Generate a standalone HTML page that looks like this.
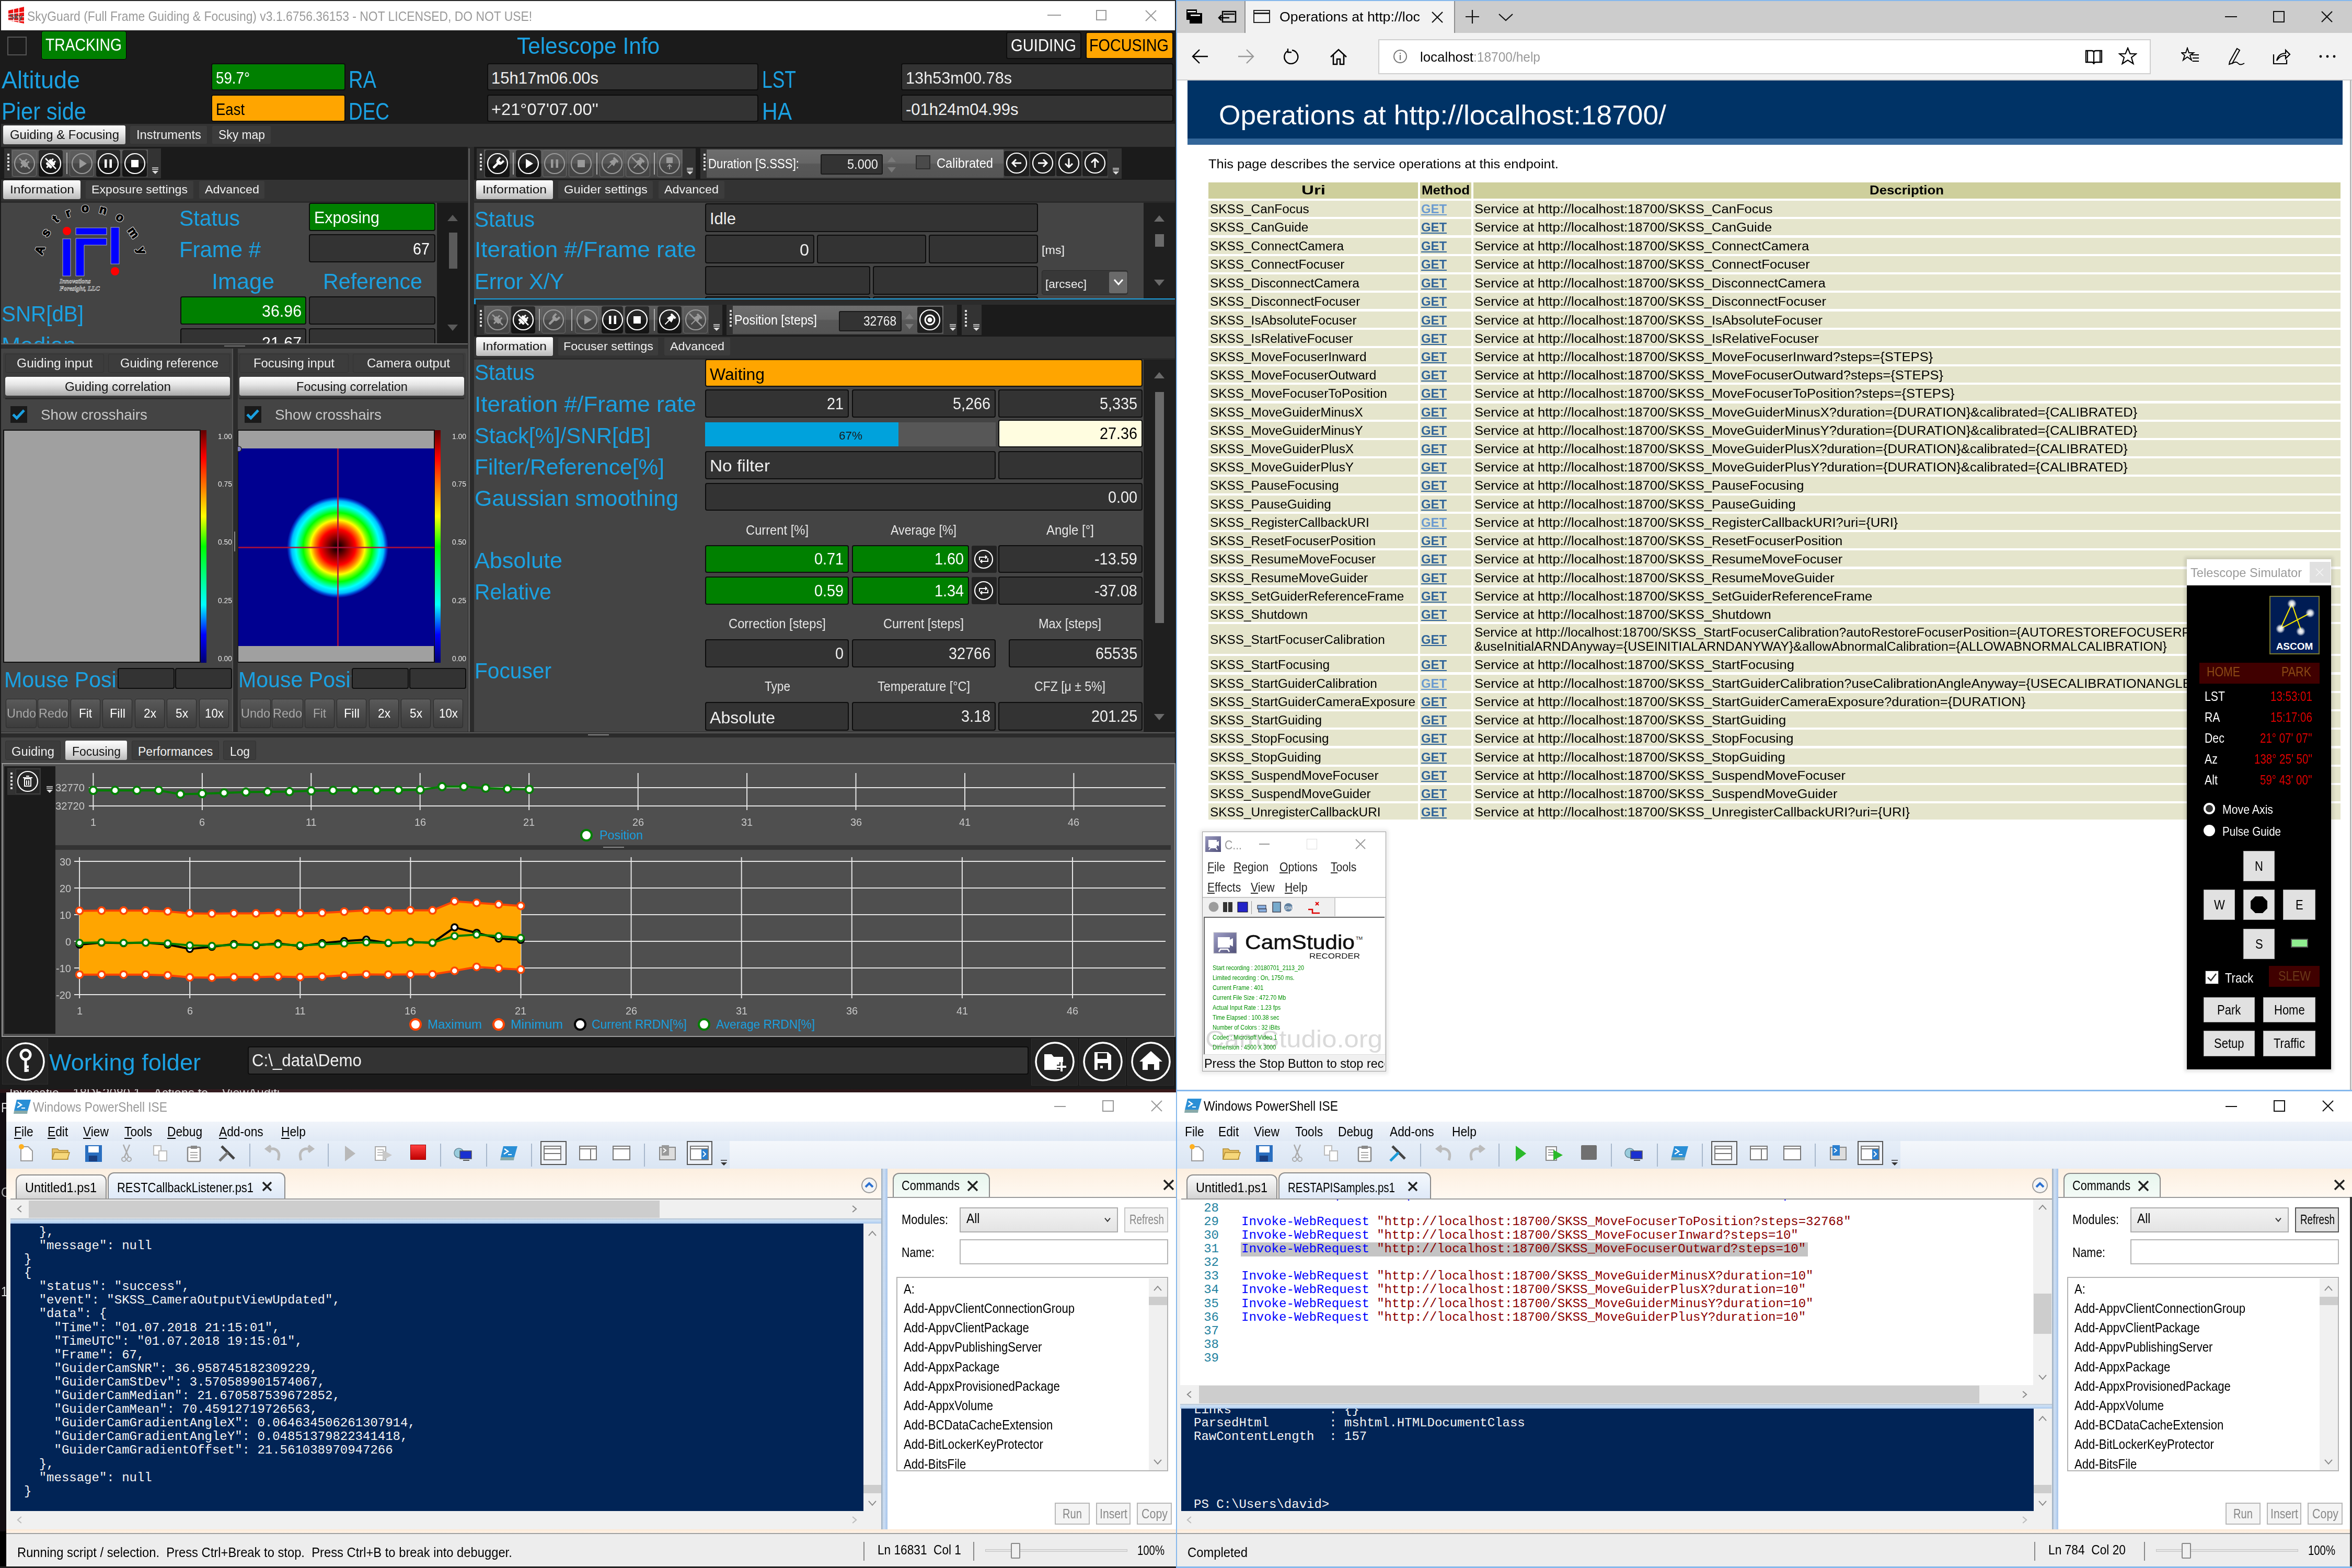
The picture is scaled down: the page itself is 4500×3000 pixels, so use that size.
<!DOCTYPE html><html><head><meta charset="utf-8"><style>html,body{margin:0;padding:0;background:#000;overflow:hidden}#r{position:relative;width:4500px;height:3000px;overflow:hidden;background:#101010;font-family:"Liberation Sans",sans-serif}#r div{position:absolute;box-sizing:border-box}</style></head><body><div id="r"><div style="left:0px;top:0px;width:2251px;height:2086px;background:#1b1b1b;"></div>
<div style="left:0px;top:0px;width:2251px;height:2px;background:#2a2a2a;"></div>
<div style="left:2px;top:2px;width:2246px;height:56px;background:#ffffff;"></div>
<svg style="position:absolute;left:14px;top:10px;" width="36" height="38" viewBox="0 0 36 38"><path d="M2 10L32 3V35L2 29Z" fill="#ee1111"/><g stroke="#fff" stroke-width="1.6"><path d="M2 17L32 13M2 23L32 22M2 29L32 30"/><path d="M12 7.5V31M22 5V33"/></g><text x="3" y="27" font-family="Liberation Sans" font-weight="bold" font-size="15" fill="#555">Sky</text></svg>
<div style="left:52.0px;top:17.9px;font:normal 26px/1 'Liberation Sans',sans-serif;color:#9a9a9a;white-space:pre;transform:scaleX(0.8806);transform-origin:0 0;">SkyGuard (Full Frame Guiding &amp; Focusing) v3.1.6756.36153 - NOT LICENSED, DO NOT USE!</div>
<div style="left:2004px;top:28px;width:26px;height:2px;background:#9a9a9a;"></div>
<div style="left:2097px;top:19px;width:20px;height:20px;border:2px solid #9a9a9a;"></div>
<svg style="position:absolute;left:2190px;top:18px;" width="24" height="24" viewBox="0 0 24 24"><path d="M2 2L22 22M22 2L2 22" stroke="#9a9a9a" stroke-width="2"/></svg>
<div style="left:14px;top:70px;width:37px;height:36px;border:2px solid #555;"></div>
<div style="left:79px;top:59px;width:163px;height:55px;background:#008000;border:1px solid #000;border-radius:4px;"></div>
<div style="left:87.0px;top:69.0px;font:normal 33px/1 'Liberation Sans',sans-serif;color:#fff;white-space:pre;transform:scaleX(0.8562);transform-origin:0 0;">TRACKING</div>
<div style="left:989.0px;top:64.8px;font:normal 45px/1 'Liberation Sans',sans-serif;color:#1ba1e2;white-space:pre;transform:scaleX(0.9407);transform-origin:0 0;">Telescope Info</div>
<div style="left:1925px;top:61px;width:144px;height:52px;background:#2b2b2b;border:2px solid #0d0d0d;border-radius:4px;"></div>
<div style="left:1934.0px;top:70.0px;font:normal 33px/1 'Liberation Sans',sans-serif;color:#fff;white-space:pre;transform:scaleX(0.8854);transform-origin:0 0;">GUIDING</div>
<div style="left:2077px;top:61px;width:168px;height:52px;background:#ffa500;border:2px solid #0d0d0d;border-radius:4px;"></div>
<div style="left:2084.0px;top:70.0px;font:normal 33px/1 'Liberation Sans',sans-serif;color:#000;white-space:pre;transform:scaleX(0.8727);transform-origin:0 0;">FOCUSING</div>
<div style="left:3.0px;top:129.9px;font:normal 46px/1 'Liberation Sans',sans-serif;color:#1ba1e2;white-space:pre;transform:scaleX(0.9777);transform-origin:0 0;">Altitude</div>
<div style="left:3.0px;top:189.9px;font:normal 46px/1 'Liberation Sans',sans-serif;color:#1ba1e2;white-space:pre;transform:scaleX(0.9053);transform-origin:0 0;">Pier side</div>
<div style="left:404px;top:121px;width:257px;height:52px;background:#008000;border:2px solid #0d0d0d;border-radius:4px;"></div>
<div style="left:413.0px;top:133.7px;font:normal 31px/1 'Liberation Sans',sans-serif;color:#fff;white-space:pre;transform:scaleX(0.8940);transform-origin:0 0;">59.7°</div>
<div style="left:404px;top:181px;width:257px;height:52px;background:#ffa500;border:2px solid #0d0d0d;border-radius:4px;"></div>
<div style="left:413.0px;top:193.7px;font:normal 31px/1 'Liberation Sans',sans-serif;color:#000;white-space:pre;transform:scaleX(0.8869);transform-origin:0 0;">East</div>
<div style="left:667.0px;top:128.9px;font:normal 46px/1 'Liberation Sans',sans-serif;color:#1ba1e2;white-space:pre;transform:scaleX(0.8293);transform-origin:0 0;">RA</div>
<div style="left:667.0px;top:189.9px;font:normal 46px/1 'Liberation Sans',sans-serif;color:#1ba1e2;white-space:pre;transform:scaleX(0.8031);transform-origin:0 0;">DEC</div>
<div style="left:932px;top:121px;width:519px;height:52px;background:#333333;border:2px solid #0d0d0d;border-radius:4px;"></div>
<div style="left:940.0px;top:133.7px;font:normal 31px/1 'Liberation Sans',sans-serif;color:#f0f0f0;white-space:pre;">15h17m06.00s</div>
<div style="left:932px;top:181px;width:519px;height:52px;background:#333333;border:2px solid #0d0d0d;border-radius:4px;"></div>
<div style="left:940.0px;top:193.7px;font:normal 31px/1 'Liberation Sans',sans-serif;color:#f0f0f0;white-space:pre;transform:scaleX(1.0526);transform-origin:0 0;">+21°07'07.00''</div>
<div style="left:1458.0px;top:128.9px;font:normal 46px/1 'Liberation Sans',sans-serif;color:#1ba1e2;white-space:pre;transform:scaleX(0.7705);transform-origin:0 0;">LST</div>
<div style="left:1458.0px;top:189.9px;font:normal 46px/1 'Liberation Sans',sans-serif;color:#1ba1e2;white-space:pre;transform:scaleX(0.8919);transform-origin:0 0;">HA</div>
<div style="left:1724px;top:121px;width:521px;height:52px;background:#333333;border:2px solid #0d0d0d;border-radius:4px;"></div>
<div style="left:1733.0px;top:133.7px;font:normal 31px/1 'Liberation Sans',sans-serif;color:#f0f0f0;white-space:pre;transform:scaleX(0.9900);transform-origin:0 0;">13h53m00.78s</div>
<div style="left:1724px;top:181px;width:521px;height:52px;background:#333333;border:2px solid #0d0d0d;border-radius:4px;"></div>
<div style="left:1733.0px;top:193.7px;font:normal 31px/1 'Liberation Sans',sans-serif;color:#f0f0f0;white-space:pre;">-01h24m04.99s</div>
<div style="left:2px;top:237px;width:2246px;height:44px;background:#333333;"></div>
<div style="left:6px;top:240px;width:234px;height:36px;background:linear-gradient(#fdfdfd,#e6e6e6 45%,#b9b9b9);border-radius:3px;"></div>
<div style="left:18.5px;top:246.5px;font:normal 23px/1 'Liberation Sans',sans-serif;color:#111;white-space:pre;transform:scaleX(1.0410);transform-origin:0 0;">Guiding &amp; Focusing</div>
<div style="left:248px;top:240px;width:149px;height:36px;background:#3c3c3c;border:1px solid #333;border-radius:3px;"></div>
<div style="left:260.5px;top:246.5px;font:normal 23px/1 'Liberation Sans',sans-serif;color:#f0f0f0;white-space:pre;transform:scaleX(1.0319);transform-origin:0 0;">Instruments</div>
<div style="left:405px;top:240px;width:114px;height:36px;background:#3c3c3c;border:1px solid #333;border-radius:3px;"></div>
<div style="left:417.5px;top:246.5px;font:normal 23px/1 'Liberation Sans',sans-serif;color:#f0f0f0;white-space:pre;transform:scaleX(0.9946);transform-origin:0 0;">Sky map</div>
<div style="left:2px;top:281px;width:2246px;height:64px;background:#1b1b1b;"></div>
<div style="left:8px;top:284px;width:300px;height:57px;background:#333333;"></div>
<div style="left:14px;top:294px;width:4px;height:4px;background:#d8d8d8;"></div>
<div style="left:14px;top:301px;width:4px;height:4px;background:#d8d8d8;"></div>
<div style="left:14px;top:308px;width:4px;height:4px;background:#d8d8d8;"></div>
<div style="left:14px;top:315px;width:4px;height:4px;background:#d8d8d8;"></div>
<div style="left:14px;top:322px;width:4px;height:4px;background:#d8d8d8;"></div>
<div style="left:22px;top:286px;width:261px;height:53px;background:linear-gradient(#5e5e5e 0,#575757 48%,#474747 52%,#444 100%);"></div>
<div style="left:23px;top:287px;width:47px;height:51px;border:1.5px solid #6a6a6a;border-radius:4px;"></div>
<svg style="position:absolute;left:24.5px;top:290.5px;" width="44" height="44" viewBox="0 0 44 44"><circle cx="22" cy="22" r="19" fill="none" stroke="#9a9a9a" stroke-width="2.2"/><g transform="rotate(45 22 22)" fill="#9a9a9a"><rect x="15" y="18" width="14" height="9" rx="3"/><rect x="17.5" y="13" width="3" height="5"/><rect x="23.5" y="13" width="3" height="5"/><rect x="20.5" y="27" width="3" height="5"/></g><path d="M12 12 L32 32" stroke="#9a9a9a" stroke-width="2.5"/></svg>
<div style="left:74px;top:287px;width:46px;height:51px;background:linear-gradient(#2a2a2a,#262626 48%,#161616 52%,#141414);border-radius:4px;"></div>
<svg style="position:absolute;left:75.0px;top:290.5px;" width="44" height="44" viewBox="0 0 44 44"><circle cx="22" cy="22" r="19" fill="none" stroke="#ffffff" stroke-width="2.2"/><g transform="rotate(45 22 22)" fill="#ffffff"><rect x="15" y="16" width="14" height="5" rx="2"/><rect x="15" y="24" width="14" height="5" rx="2"/><rect x="17.5" y="12" width="3" height="4"/><rect x="23.5" y="12" width="3" height="4"/><rect x="20.5" y="29" width="3" height="4"/></g><path d="M12 12 L32 32" stroke="#ffffff" stroke-width="2.5"/></svg>
<div style="left:133px;top:287px;width:47px;height:51px;border:1.5px solid #6a6a6a;border-radius:4px;"></div>
<svg style="position:absolute;left:134.5px;top:290.5px;" width="44" height="44" viewBox="0 0 44 44"><circle cx="22" cy="22" r="19" fill="none" stroke="#9a9a9a" stroke-width="2.2"/><path d="M17 13 L31 22 L17 31 Z" fill="#9a9a9a"/></svg>
<div style="left:184px;top:287px;width:46px;height:51px;background:linear-gradient(#2a2a2a,#262626 48%,#161616 52%,#141414);border-radius:4px;"></div>
<svg style="position:absolute;left:185.0px;top:290.5px;" width="44" height="44" viewBox="0 0 44 44"><circle cx="22" cy="22" r="19" fill="none" stroke="#ffffff" stroke-width="2.2"/><rect x="15" y="14" width="4.5" height="16" fill="#ffffff"/><rect x="24.5" y="14" width="4.5" height="16" fill="#ffffff"/></svg>
<div style="left:234px;top:287px;width:47px;height:51px;background:linear-gradient(#2a2a2a,#262626 48%,#161616 52%,#141414);border-radius:4px;"></div>
<svg style="position:absolute;left:235.5px;top:290.5px;" width="44" height="44" viewBox="0 0 44 44"><circle cx="22" cy="22" r="19" fill="none" stroke="#ffffff" stroke-width="2.2"/><rect x="15" y="15" width="14" height="14" fill="#ffffff"/></svg>
<div style="left:127px;top:292px;width:2px;height:41px;background:#aaaaaa;"></div>
<svg style="position:absolute;left:290px;top:319px;" width="14" height="16" viewBox="0 0 14 16"><path d="M1 2H13M1 5H13" stroke="#ddd" stroke-width="1.5"/><path d="M1 8L7 14L13 8Z" fill="#ddd"/></svg>
<div style="left:2px;top:344px;width:893px;height:42px;background:#333333;"></div>
<div style="left:6px;top:345px;width:148px;height:36px;background:linear-gradient(#fdfdfd,#e6e6e6 45%,#b9b9b9);border-radius:3px;"></div>
<div style="left:18.5px;top:352.0px;font:normal 22px/1 'Liberation Sans',sans-serif;color:#111;white-space:pre;transform:scaleX(1.1177);transform-origin:0 0;">Information</div>
<div style="left:163px;top:345px;width:208px;height:36px;background:#3c3c3c;border:1px solid #333;border-radius:3px;"></div>
<div style="left:175.0px;top:352.0px;font:normal 22px/1 'Liberation Sans',sans-serif;color:#f0f0f0;white-space:pre;transform:scaleX(1.0523);transform-origin:0 0;">Exposure settings</div>
<div style="left:380px;top:345px;width:127px;height:36px;background:#3c3c3c;border:1px solid #333;border-radius:3px;"></div>
<div style="left:391.5px;top:352.0px;font:normal 22px/1 'Liberation Sans',sans-serif;color:#f0f0f0;white-space:pre;transform:scaleX(1.0629);transform-origin:0 0;">Advanced</div>
<div style="left:2px;top:385px;width:893px;height:273px;background:#444444;overflow:hidden;"></div>
<div style="left:2px;top:385px;width:893px;height:3px;background:#2a2a2a;"></div>
<div style="left:836px;top:388px;width:60px;height:270px;background:#1b1b1b;"></div>
<svg style="position:absolute;left:855.0px;top:410px;" width="22" height="14" viewBox="0 0 22 14"><path d="M1 13L11 1L21 13Z" fill="#5a5a5a"/></svg>
<svg style="position:absolute;left:855.0px;top:620px;" width="22" height="14" viewBox="0 0 22 14"><path d="M1 1L11 13L21 1Z" fill="#5a5a5a"/></svg>
<div style="left:859px;top:445px;width:16px;height:69px;background:#5a5a5a;"></div>
<svg style="position:absolute;left:40px;top:380px;" width="260" height="190" viewBox="0 0 260 190"><circle cx="88" cy="62" r="8" fill="#ff0000"/><rect x="80" y="77" width="15" height="71" fill="#0000ff" stroke="#aab" stroke-width="1"/><rect x="105" y="56" width="59" height="13" fill="#0000ff" stroke="#aab" stroke-width="1"/><path d="M105 76H164V89H121V148H105Z" fill="#0000ff" stroke="#aab" stroke-width="1"/><rect x="172" y="55" width="16" height="70" fill="#0000ff" stroke="#aab" stroke-width="1"/><circle cx="180" cy="139" r="8" fill="#ff0000"/><text x="38" y="99" transform="rotate(-70 38 99)" text-anchor="middle" dominant-baseline="middle" font-family="Liberation Sans" font-weight="bold" font-size="23" fill="#000" stroke="#e8e8e8" stroke-width="3.2" stroke-linejoin="round">A</text><text x="38" y="99" transform="rotate(-70 38 99)" text-anchor="middle" dominant-baseline="middle" font-family="Liberation Sans" font-weight="bold" font-size="23" fill="#000" stroke="#000" stroke-width="1.3" stroke-linejoin="round">A</text><text x="49" y="66" transform="rotate(-55 49 66)" text-anchor="middle" dominant-baseline="middle" font-family="Liberation Sans" font-weight="bold" font-size="23" fill="#000" stroke="#e8e8e8" stroke-width="3.2" stroke-linejoin="round">s</text><text x="49" y="66" transform="rotate(-55 49 66)" text-anchor="middle" dominant-baseline="middle" font-family="Liberation Sans" font-weight="bold" font-size="23" fill="#000" stroke="#000" stroke-width="1.3" stroke-linejoin="round">s</text><text x="67" y="40" transform="rotate(-40 67 40)" text-anchor="middle" dominant-baseline="middle" font-family="Liberation Sans" font-weight="bold" font-size="23" fill="#000" stroke="#e8e8e8" stroke-width="3.2" stroke-linejoin="round">t</text><text x="67" y="40" transform="rotate(-40 67 40)" text-anchor="middle" dominant-baseline="middle" font-family="Liberation Sans" font-weight="bold" font-size="23" fill="#000" stroke="#000" stroke-width="1.3" stroke-linejoin="round">t</text><text x="91" y="29" transform="rotate(-20 91 29)" text-anchor="middle" dominant-baseline="middle" font-family="Liberation Sans" font-weight="bold" font-size="23" fill="#000" stroke="#e8e8e8" stroke-width="3.2" stroke-linejoin="round">r</text><text x="91" y="29" transform="rotate(-20 91 29)" text-anchor="middle" dominant-baseline="middle" font-family="Liberation Sans" font-weight="bold" font-size="23" fill="#000" stroke="#000" stroke-width="1.3" stroke-linejoin="round">r</text><text x="123" y="20" transform="rotate(0 123 20)" text-anchor="middle" dominant-baseline="middle" font-family="Liberation Sans" font-weight="bold" font-size="23" fill="#000" stroke="#e8e8e8" stroke-width="3.2" stroke-linejoin="round">o</text><text x="123" y="20" transform="rotate(0 123 20)" text-anchor="middle" dominant-baseline="middle" font-family="Liberation Sans" font-weight="bold" font-size="23" fill="#000" stroke="#000" stroke-width="1.3" stroke-linejoin="round">o</text><text x="157" y="23" transform="rotate(15 157 23)" text-anchor="middle" dominant-baseline="middle" font-family="Liberation Sans" font-weight="bold" font-size="23" fill="#000" stroke="#e8e8e8" stroke-width="3.2" stroke-linejoin="round">n</text><text x="157" y="23" transform="rotate(15 157 23)" text-anchor="middle" dominant-baseline="middle" font-family="Liberation Sans" font-weight="bold" font-size="23" fill="#000" stroke="#000" stroke-width="1.3" stroke-linejoin="round">n</text><text x="189" y="37" transform="rotate(30 189 37)" text-anchor="middle" dominant-baseline="middle" font-family="Liberation Sans" font-weight="bold" font-size="23" fill="#000" stroke="#e8e8e8" stroke-width="3.2" stroke-linejoin="round">o</text><text x="189" y="37" transform="rotate(30 189 37)" text-anchor="middle" dominant-baseline="middle" font-family="Liberation Sans" font-weight="bold" font-size="23" fill="#000" stroke="#000" stroke-width="1.3" stroke-linejoin="round">o</text><text x="214" y="66" transform="rotate(55 214 66)" text-anchor="middle" dominant-baseline="middle" font-family="Liberation Sans" font-weight="bold" font-size="23" fill="#000" stroke="#e8e8e8" stroke-width="3.2" stroke-linejoin="round">m</text><text x="214" y="66" transform="rotate(55 214 66)" text-anchor="middle" dominant-baseline="middle" font-family="Liberation Sans" font-weight="bold" font-size="23" fill="#000" stroke="#000" stroke-width="1.3" stroke-linejoin="round">m</text><text x="230" y="100" transform="rotate(70 230 100)" text-anchor="middle" dominant-baseline="middle" font-family="Liberation Sans" font-weight="bold" font-size="23" fill="#000" stroke="#e8e8e8" stroke-width="3.2" stroke-linejoin="round">y</text><text x="230" y="100" transform="rotate(70 230 100)" text-anchor="middle" dominant-baseline="middle" font-family="Liberation Sans" font-weight="bold" font-size="23" fill="#000" stroke="#000" stroke-width="1.3" stroke-linejoin="round">y</text><text x="74" y="162" font-family="Liberation Serif" font-style="italic" font-weight="bold" font-size="12" fill="#222" stroke="#eee" stroke-width="0.6">Innovations</text><text x="74" y="176" font-family="Liberation Serif" font-style="italic" font-weight="bold" font-size="12" fill="#222" stroke="#eee" stroke-width="0.6">Foresight, LLC</text></svg>
<div style="left:343.0px;top:396.4px;font:normal 43px/1 'Liberation Sans',sans-serif;color:#1ba1e2;white-space:pre;transform:scaleX(0.9513);transform-origin:0 0;">Status</div>
<div style="left:591px;top:388px;width:242px;height:54px;background:#008000;border:2px solid #0d0d0d;border-radius:4px;"></div>
<div style="left:601.0px;top:400.6px;font:normal 31px/1 'Liberation Sans',sans-serif;color:#fff;white-space:pre;transform:scaleX(0.9804);transform-origin:0 0;">Exposing</div>
<div style="left:343.0px;top:456.4px;font:normal 43px/1 'Liberation Sans',sans-serif;color:#1ba1e2;white-space:pre;transform:scaleX(0.9743);transform-origin:0 0;">Frame #</div>
<div style="left:591px;top:448px;width:242px;height:54px;background:#333333;border:2px solid #0d0d0d;border-radius:4px;"></div>
<div style="left:790.0px;top:460.6px;font:normal 31px/1 'Liberation Sans',sans-serif;color:#fff;white-space:pre;transform:scaleX(0.9284);transform-origin:0 0;">67</div>
<div style="left:405.0px;top:516.5px;font:normal 43px/1 'Liberation Sans',sans-serif;color:#1ba1e2;white-space:pre;transform:scaleX(1.0039);transform-origin:0 0;">Image</div>
<div style="left:618.0px;top:516.5px;font:normal 43px/1 'Liberation Sans',sans-serif;color:#1ba1e2;white-space:pre;transform:scaleX(0.9576);transform-origin:0 0;">Reference</div>
<div style="left:3.0px;top:578.5px;font:normal 43px/1 'Liberation Sans',sans-serif;color:#1ba1e2;white-space:pre;transform:scaleX(0.9385);transform-origin:0 0;">SNR[dB]</div>
<div style="left:345px;top:567px;width:241px;height:54px;background:#008000;border:2px solid #0d0d0d;border-radius:4px;"></div>
<div style="left:501.0px;top:579.6px;font:normal 31px/1 'Liberation Sans',sans-serif;color:#fff;white-space:pre;transform:scaleX(0.9801);transform-origin:0 0;">36.96</div>
<div style="left:591px;top:567px;width:242px;height:54px;background:#333333;border:2px solid #0d0d0d;border-radius:4px;"></div>
<div style="left:2px;top:625px;width:836px;height:33px;overflow:hidden"><div style="left:1.0px;top:13.5px;font:normal 43px/1 'Liberation Sans',sans-serif;color:#1ba1e2;white-space:pre;transform:scaleX(1.0068);transform-origin:0 0;">Median</div><div style="left:343px;top:3px;width:241px;height:54px;background:#333333;border:2px solid #0d0d0d;border-radius:4px;"></div><div style="left:589px;top:3px;width:242px;height:54px;background:#333333;border:2px solid #0d0d0d;border-radius:4px;"></div><div style="left:499.0px;top:15.7px;font:normal 31px/1 'Liberation Sans',sans-serif;color:#fff;white-space:pre;transform:scaleX(0.9801);transform-origin:0 0;">21.67</div></div>
<div style="left:2px;top:657px;width:893px;height:2px;background:#6a6a6a;"></div>
<div style="left:2px;top:659px;width:893px;height:8px;background:#2b2b2b;"></div>
<div style="left:429px;top:661px;width:40px;height:2px;background:#777;"></div>
<div style="left:2px;top:667px;width:893px;height:733px;background:#444444;"></div>
<div style="left:6px;top:675px;width:437px;height:88px;background:#3c3c3c;border-radius:3px;"></div>
<div style="left:10px;top:677px;width:189px;height:36px;background:#3c3c3c;border:1px solid #333;border-radius:3px;"></div>
<div style="left:32.0px;top:683.5px;font:normal 23px/1 'Liberation Sans',sans-serif;color:#f0f0f0;white-space:pre;transform:scaleX(1.0695);transform-origin:0 0;">Guiding input</div>
<div style="left:207px;top:677px;width:233px;height:36px;background:#3c3c3c;border:1px solid #333;border-radius:3px;"></div>
<div style="left:229.5px;top:683.5px;font:normal 23px/1 'Liberation Sans',sans-serif;color:#f0f0f0;white-space:pre;transform:scaleX(1.0280);transform-origin:0 0;">Guiding reference</div>
<div style="left:10px;top:721px;width:430px;height:36px;background:linear-gradient(#fdfdfd,#e6e6e6 40%,#a8a8a8);border-radius:4px;"></div>
<div style="left:123.5px;top:728.5px;font:normal 23px/1 'Liberation Sans',sans-serif;color:#111;white-space:pre;transform:scaleX(1.0513);transform-origin:0 0;">Guiding correlation</div>
<div style="left:10px;top:761px;width:430px;height:3px;background:#2a2a2a;"></div>
<div style="left:20px;top:777px;width:32px;height:32px;background:#1a1a1a;"></div>
<svg style="position:absolute;left:22px;top:780px;" width="28" height="26" viewBox="0 0 28 26"><path d="M3 13L10 20L24 5" stroke="#1ba1e2" stroke-width="5" fill="none"/></svg>
<div style="left:78.0px;top:780.2px;font:normal 28px/1 'Liberation Sans',sans-serif;color:#c8c8c8;white-space:pre;transform:scaleX(0.9930);transform-origin:0 0;">Show crosshairs</div>
<div style="left:6px;top:822px;width:378px;height:446px;background:#a0a0a0;border:2px solid #111;"></div>
<div style="left:384px;top:823px;width:11px;height:445px;background:linear-gradient(#600000,#ff0000 12%,#ff8000 25%,#ffff00 37%,#00ff00 50%,#00ffff 75%,#0000ff 88%,#000070);"></div>
<div style="left:417.0px;top:827.2px;font:normal 15px/1 'Liberation Sans',sans-serif;color:#e8e8e8;white-space:pre;transform:scaleX(0.9246);transform-origin:0 0;">1.00</div>
<div style="left:417.0px;top:918.2px;font:normal 15px/1 'Liberation Sans',sans-serif;color:#e8e8e8;white-space:pre;transform:scaleX(0.9246);transform-origin:0 0;">0.75</div>
<div style="left:417.0px;top:1029.2px;font:normal 15px/1 'Liberation Sans',sans-serif;color:#e8e8e8;white-space:pre;transform:scaleX(0.9246);transform-origin:0 0;">0.50</div>
<div style="left:417.0px;top:1141.2px;font:normal 15px/1 'Liberation Sans',sans-serif;color:#e8e8e8;white-space:pre;transform:scaleX(0.9246);transform-origin:0 0;">0.25</div>
<div style="left:417.0px;top:1252.2px;font:normal 15px/1 'Liberation Sans',sans-serif;color:#e8e8e8;white-space:pre;transform:scaleX(0.9246);transform-origin:0 0;">0.00</div>
<div style="left:6px;top:1270px;width:218px;height:60px;overflow:hidden"><div style="left:2.0px;top:8.5px;font:normal 43px/1 'Liberation Sans',sans-serif;color:#1ba1e2;white-space:pre;transform:scaleX(0.9557);transform-origin:0 0;">Mouse Position</div></div>
<div style="left:225px;top:1278px;width:109px;height:40px;background:#333333;border:2px solid #0d0d0d;border-radius:4px;"></div>
<div style="left:335px;top:1278px;width:109px;height:40px;background:#333333;border:2px solid #0d0d0d;border-radius:4px;"></div>
<div style="left:11px;top:1337px;width:59px;height:56px;background:linear-gradient(#5a5a5a,#4a4a4a 50%,#3c3c3c);border:1px solid #2a2a2a;border-radius:4px;"></div>
<div style="left:12.5px;top:1352.6px;font:normal 24px/1 'Liberation Sans',sans-serif;color:#a8a8a8;white-space:pre;transform:scaleX(0.9763);transform-origin:0 0;">Undo</div>
<div style="left:72px;top:1337px;width:60px;height:56px;background:linear-gradient(#5a5a5a,#4a4a4a 50%,#3c3c3c);border:1px solid #2a2a2a;border-radius:4px;"></div>
<div style="left:74.0px;top:1352.6px;font:normal 24px/1 'Liberation Sans',sans-serif;color:#a8a8a8;white-space:pre;transform:scaleX(0.9763);transform-origin:0 0;">Redo</div>
<div style="left:135px;top:1337px;width:57px;height:56px;background:linear-gradient(#5a5a5a,#4a4a4a 50%,#3c3c3c);border:1px solid #2a2a2a;border-radius:4px;"></div>
<div style="left:151.0px;top:1352.6px;font:normal 24px/1 'Liberation Sans',sans-serif;color:#ffffff;white-space:pre;transform:scaleX(0.9379);transform-origin:0 0;">Fit</div>
<div style="left:196px;top:1337px;width:57px;height:56px;background:linear-gradient(#5a5a5a,#4a4a4a 50%,#3c3c3c);border:1px solid #2a2a2a;border-radius:4px;"></div>
<div style="left:209.5px;top:1352.6px;font:normal 24px/1 'Liberation Sans',sans-serif;color:#ffffff;white-space:pre;transform:scaleX(0.9791);transform-origin:0 0;">Fill</div>
<div style="left:258px;top:1337px;width:57px;height:56px;background:linear-gradient(#5a5a5a,#4a4a4a 50%,#3c3c3c);border:1px solid #2a2a2a;border-radius:4px;"></div>
<div style="left:274.5px;top:1352.6px;font:normal 24px/1 'Liberation Sans',sans-serif;color:#ffffff;white-space:pre;transform:scaleX(0.9470);transform-origin:0 0;">2x</div>
<div style="left:319px;top:1337px;width:57px;height:56px;background:linear-gradient(#5a5a5a,#4a4a4a 50%,#3c3c3c);border:1px solid #2a2a2a;border-radius:4px;"></div>
<div style="left:335.5px;top:1352.6px;font:normal 24px/1 'Liberation Sans',sans-serif;color:#ffffff;white-space:pre;transform:scaleX(0.9470);transform-origin:0 0;">5x</div>
<div style="left:381px;top:1337px;width:57px;height:56px;background:linear-gradient(#5a5a5a,#4a4a4a 50%,#3c3c3c);border:1px solid #2a2a2a;border-radius:4px;"></div>
<div style="left:391.5px;top:1352.6px;font:normal 24px/1 'Liberation Sans',sans-serif;color:#ffffff;white-space:pre;transform:scaleX(0.9305);transform-origin:0 0;">10x</div>
<div style="left:454px;top:675px;width:437px;height:88px;background:#3c3c3c;border-radius:3px;"></div>
<div style="left:458px;top:677px;width:209px;height:36px;background:#3c3c3c;border:1px solid #333;border-radius:3px;"></div>
<div style="left:485.0px;top:683.5px;font:normal 23px/1 'Liberation Sans',sans-serif;color:#f0f0f0;white-space:pre;transform:scaleX(1.0359);transform-origin:0 0;">Focusing input</div>
<div style="left:675px;top:677px;width:212px;height:36px;background:#3c3c3c;border:1px solid #333;border-radius:3px;"></div>
<div style="left:701.5px;top:683.5px;font:normal 23px/1 'Liberation Sans',sans-serif;color:#f0f0f0;white-space:pre;transform:scaleX(1.0449);transform-origin:0 0;">Camera output</div>
<div style="left:458px;top:721px;width:430px;height:36px;background:linear-gradient(#fdfdfd,#e6e6e6 40%,#a8a8a8);border-radius:4px;"></div>
<div style="left:566.5px;top:728.5px;font:normal 23px/1 'Liberation Sans',sans-serif;color:#111;white-space:pre;transform:scaleX(1.0283);transform-origin:0 0;">Focusing correlation</div>
<div style="left:458px;top:761px;width:430px;height:3px;background:#2a2a2a;"></div>
<div style="left:468px;top:777px;width:32px;height:32px;background:#1a1a1a;"></div>
<svg style="position:absolute;left:470px;top:780px;" width="28" height="26" viewBox="0 0 28 26"><path d="M3 13L10 20L24 5" stroke="#1ba1e2" stroke-width="5" fill="none"/></svg>
<div style="left:526.0px;top:780.2px;font:normal 28px/1 'Liberation Sans',sans-serif;color:#c8c8c8;white-space:pre;transform:scaleX(0.9930);transform-origin:0 0;">Show crosshairs</div>
<div style="left:454px;top:822px;width:378px;height:446px;background:#a0a0a0;border:2px solid #111;"></div>
<div style="left:456px;top:858px;width:375px;height:378px;background:#000090;"></div>
<div style="left:456px;top:858px;width:375px;height:378px;background:radial-gradient(circle at 190px 189px,#000000 0,#300000 8px,#a00000 22px,#ff0000 34px,#ff8000 44px,#ffff00 52px,#80ff00 58px,#00ff00 66px,#00ffff 80px,#00c0ff 88px,#0040d0 93px,#000090 97px);"></div>
<div style="left:456px;top:1046px;width:375px;height:3px;background:#b0103a;opacity:0.85;"></div>
<div style="left:645px;top:858px;width:3px;height:378px;background:#b0103a;opacity:0.85;"></div>
<svg style="position:absolute;left:450px;top:852px;" width="14" height="14" viewBox="0 0 14 14"><circle cx="7" cy="7" r="5" fill="#8080c0" stroke="#222" stroke-width="1.5"/></svg>
<div style="left:832px;top:823px;width:11px;height:445px;background:linear-gradient(#600000,#ff0000 12%,#ff8000 25%,#ffff00 37%,#00ff00 50%,#00ffff 75%,#0000ff 88%,#000070);"></div>
<div style="left:865.0px;top:827.2px;font:normal 15px/1 'Liberation Sans',sans-serif;color:#e8e8e8;white-space:pre;transform:scaleX(0.9246);transform-origin:0 0;">1.00</div>
<div style="left:865.0px;top:918.2px;font:normal 15px/1 'Liberation Sans',sans-serif;color:#e8e8e8;white-space:pre;transform:scaleX(0.9246);transform-origin:0 0;">0.75</div>
<div style="left:865.0px;top:1029.2px;font:normal 15px/1 'Liberation Sans',sans-serif;color:#e8e8e8;white-space:pre;transform:scaleX(0.9246);transform-origin:0 0;">0.50</div>
<div style="left:865.0px;top:1141.2px;font:normal 15px/1 'Liberation Sans',sans-serif;color:#e8e8e8;white-space:pre;transform:scaleX(0.9246);transform-origin:0 0;">0.25</div>
<div style="left:865.0px;top:1252.2px;font:normal 15px/1 'Liberation Sans',sans-serif;color:#e8e8e8;white-space:pre;transform:scaleX(0.9246);transform-origin:0 0;">0.00</div>
<div style="left:454px;top:1270px;width:218px;height:60px;overflow:hidden"><div style="left:2.0px;top:8.5px;font:normal 43px/1 'Liberation Sans',sans-serif;color:#1ba1e2;white-space:pre;transform:scaleX(0.9557);transform-origin:0 0;">Mouse Position</div></div>
<div style="left:673px;top:1278px;width:109px;height:40px;background:#333333;border:2px solid #0d0d0d;border-radius:4px;"></div>
<div style="left:783px;top:1278px;width:109px;height:40px;background:#333333;border:2px solid #0d0d0d;border-radius:4px;"></div>
<div style="left:459px;top:1337px;width:59px;height:56px;background:linear-gradient(#5a5a5a,#4a4a4a 50%,#3c3c3c);border:1px solid #2a2a2a;border-radius:4px;"></div>
<div style="left:460.5px;top:1352.6px;font:normal 24px/1 'Liberation Sans',sans-serif;color:#a8a8a8;white-space:pre;transform:scaleX(0.9763);transform-origin:0 0;">Undo</div>
<div style="left:520px;top:1337px;width:60px;height:56px;background:linear-gradient(#5a5a5a,#4a4a4a 50%,#3c3c3c);border:1px solid #2a2a2a;border-radius:4px;"></div>
<div style="left:522.0px;top:1352.6px;font:normal 24px/1 'Liberation Sans',sans-serif;color:#a8a8a8;white-space:pre;transform:scaleX(0.9763);transform-origin:0 0;">Redo</div>
<div style="left:583px;top:1337px;width:57px;height:56px;background:linear-gradient(#5a5a5a,#4a4a4a 50%,#3c3c3c);border:1px solid #2a2a2a;border-radius:4px;"></div>
<div style="left:599.0px;top:1352.6px;font:normal 24px/1 'Liberation Sans',sans-serif;color:#a8a8a8;white-space:pre;transform:scaleX(0.9379);transform-origin:0 0;">Fit</div>
<div style="left:644px;top:1337px;width:57px;height:56px;background:linear-gradient(#5a5a5a,#4a4a4a 50%,#3c3c3c);border:1px solid #2a2a2a;border-radius:4px;"></div>
<div style="left:657.5px;top:1352.6px;font:normal 24px/1 'Liberation Sans',sans-serif;color:#ffffff;white-space:pre;transform:scaleX(0.9791);transform-origin:0 0;">Fill</div>
<div style="left:706px;top:1337px;width:57px;height:56px;background:linear-gradient(#5a5a5a,#4a4a4a 50%,#3c3c3c);border:1px solid #2a2a2a;border-radius:4px;"></div>
<div style="left:722.5px;top:1352.6px;font:normal 24px/1 'Liberation Sans',sans-serif;color:#ffffff;white-space:pre;transform:scaleX(0.9470);transform-origin:0 0;">2x</div>
<div style="left:767px;top:1337px;width:57px;height:56px;background:linear-gradient(#5a5a5a,#4a4a4a 50%,#3c3c3c);border:1px solid #2a2a2a;border-radius:4px;"></div>
<div style="left:783.5px;top:1352.6px;font:normal 24px/1 'Liberation Sans',sans-serif;color:#ffffff;white-space:pre;transform:scaleX(0.9470);transform-origin:0 0;">5x</div>
<div style="left:829px;top:1337px;width:57px;height:56px;background:linear-gradient(#5a5a5a,#4a4a4a 50%,#3c3c3c);border:1px solid #2a2a2a;border-radius:4px;"></div>
<div style="left:839.5px;top:1352.6px;font:normal 24px/1 'Liberation Sans',sans-serif;color:#ffffff;white-space:pre;transform:scaleX(0.9305);transform-origin:0 0;">10x</div>
<div style="left:444px;top:667px;width:11px;height:733px;background:#2b2b2b;"></div>
<div style="left:444px;top:667px;width:2px;height:733px;background:#555;"></div>
<div style="left:448px;top:1017px;width:2px;height:38px;background:#888;"></div>
<div style="left:895px;top:281px;width:12px;height:1119px;background:#2b2b2b;"></div>
<div style="left:896px;top:284px;width:3px;height:1116px;background:#5a5a5a;"></div>
<div style="left:912px;top:284px;width:419px;height:58px;background:#333333;"></div>
<div style="left:918px;top:294px;width:4px;height:4px;background:#d8d8d8;"></div>
<div style="left:918px;top:301px;width:4px;height:4px;background:#d8d8d8;"></div>
<div style="left:918px;top:308px;width:4px;height:4px;background:#d8d8d8;"></div>
<div style="left:918px;top:315px;width:4px;height:4px;background:#d8d8d8;"></div>
<div style="left:918px;top:322px;width:4px;height:4px;background:#d8d8d8;"></div>
<div style="left:926px;top:286px;width:380px;height:54px;background:linear-gradient(#5e5e5e 0,#575757 48%,#474747 52%,#444 100%);"></div>
<div style="left:928px;top:287px;width:47px;height:52px;background:linear-gradient(#2a2a2a,#262626 48%,#161616 52%,#141414);border-radius:4px;"></div>
<svg style="position:absolute;left:929.5px;top:291.0px;" width="44" height="44" viewBox="0 0 44 44"><circle cx="22" cy="22" r="19" fill="none" stroke="#ffffff" stroke-width="2.2"/><g transform="rotate(45 22 22)" fill="#ffffff"><rect x="19.8" y="18" width="4.4" height="16" rx="2"/><path d="M15.5 10 L15.5 16 Q15.5 22 22 22 Q28.5 22 28.5 16 L28.5 10 L24.6 10 L24.6 15.5 L19.4 15.5 L19.4 10 Z"/></g></svg>
<div style="left:987px;top:287px;width:48px;height:52px;background:linear-gradient(#2a2a2a,#262626 48%,#161616 52%,#141414);border-radius:4px;"></div>
<svg style="position:absolute;left:989.0px;top:291.0px;" width="44" height="44" viewBox="0 0 44 44"><circle cx="22" cy="22" r="19" fill="none" stroke="#ffffff" stroke-width="2.2"/><path d="M17 13 L31 22 L17 31 Z" fill="#ffffff"/></svg>
<div style="left:1038px;top:287px;width:46px;height:52px;border:1.5px solid #6a6a6a;border-radius:4px;"></div>
<svg style="position:absolute;left:1039.0px;top:291.0px;" width="44" height="44" viewBox="0 0 44 44"><circle cx="22" cy="22" r="19" fill="none" stroke="#9a9a9a" stroke-width="2.2"/><rect x="15" y="14" width="4.5" height="16" fill="#9a9a9a"/><rect x="24.5" y="14" width="4.5" height="16" fill="#9a9a9a"/></svg>
<div style="left:1088px;top:287px;width:47px;height:52px;border:1.5px solid #6a6a6a;border-radius:4px;"></div>
<svg style="position:absolute;left:1089.5px;top:291.0px;" width="44" height="44" viewBox="0 0 44 44"><circle cx="22" cy="22" r="19" fill="none" stroke="#9a9a9a" stroke-width="2.2"/><rect x="15" y="15" width="14" height="14" fill="#9a9a9a"/></svg>
<div style="left:1147px;top:287px;width:47px;height:52px;border:1.5px solid #6a6a6a;border-radius:4px;"></div>
<svg style="position:absolute;left:1148.5px;top:291.0px;" width="44" height="44" viewBox="0 0 44 44"><circle cx="22" cy="22" r="19" fill="none" stroke="#9a9a9a" stroke-width="2.2"/><g transform="rotate(45 22 22)" fill="#9a9a9a"><rect x="16" y="10" width="12" height="4" rx="1"/><path d="M18.5 14 L25.5 14 L28 23 L16 23 Z"/><rect x="21" y="23" width="2" height="11"/></g></svg>
<div style="left:1197px;top:287px;width:47px;height:52px;border:1.5px solid #6a6a6a;border-radius:4px;"></div>
<svg style="position:absolute;left:1198.5px;top:291.0px;" width="44" height="44" viewBox="0 0 44 44"><circle cx="22" cy="22" r="19" fill="none" stroke="#9a9a9a" stroke-width="2.2"/><g transform="rotate(45 22 22)" fill="#9a9a9a"><rect x="16" y="10" width="12" height="4" rx="1"/><path d="M18.5 14 L25.5 14 L28 23 L16 23 Z"/><rect x="21" y="23" width="2" height="11"/></g><path d="M10 10 L34 34" stroke="#9a9a9a" stroke-width="2.5"/></svg>
<div style="left:1257px;top:287px;width:48px;height:52px;border:1.5px solid #6a6a6a;border-radius:4px;"></div>
<svg style="position:absolute;left:1259.0px;top:291.0px;" width="44" height="44" viewBox="0 0 44 44"><circle cx="22" cy="22" r="19" fill="none" stroke="#9a9a9a" stroke-width="2.2"/><rect x="16" y="10" width="12" height="11" fill="#9a9a9a"/><path d="M22 33 L22 24 M18 28 L22 24 L26 28" stroke="#9a9a9a" stroke-width="2" fill="none"/></svg>
<div style="left:981px;top:292px;width:2px;height:42px;background:#aaaaaa;"></div>
<div style="left:1141px;top:292px;width:2px;height:42px;background:#aaaaaa;"></div>
<div style="left:1251px;top:292px;width:2px;height:42px;background:#aaaaaa;"></div>
<svg style="position:absolute;left:1313px;top:320px;" width="14" height="16" viewBox="0 0 14 16"><path d="M1 2H13M1 5H13" stroke="#ddd" stroke-width="1.5"/><path d="M1 8L7 14L13 8Z" fill="#ddd"/></svg>
<div style="left:1340px;top:284px;width:806px;height:58px;background:#333333;"></div>
<div style="left:1346px;top:294px;width:4px;height:4px;background:#d8d8d8;"></div>
<div style="left:1346px;top:301px;width:4px;height:4px;background:#d8d8d8;"></div>
<div style="left:1346px;top:308px;width:4px;height:4px;background:#d8d8d8;"></div>
<div style="left:1346px;top:315px;width:4px;height:4px;background:#d8d8d8;"></div>
<div style="left:1346px;top:322px;width:4px;height:4px;background:#d8d8d8;"></div>
<div style="left:1352px;top:286px;width:568px;height:54px;background:linear-gradient(#6e6e6e,#666 48%,#585858 52%,#555);"></div>
<div style="left:1355.0px;top:300.8px;font:normal 25px/1 'Liberation Sans',sans-serif;color:#fff;white-space:pre;transform:scaleX(0.8880);transform-origin:0 0;">Duration [S.SSS]:</div>
<div style="left:1570px;top:295px;width:119px;height:39px;background:#333;border:2px solid #1a1a1a;border-radius:3px;"></div>
<div style="left:1621.0px;top:301.8px;font:normal 25px/1 'Liberation Sans',sans-serif;color:#f0f0f0;white-space:pre;transform:scaleX(0.9428);transform-origin:0 0;">5.000</div>
<svg style="position:absolute;left:1696px;top:296px;" width="20" height="38" viewBox="0 0 20 38"><path d="M2 14L10 4L18 14Z M2 24L10 34L18 24Z" fill="#7a7a7a"/></svg>
<div style="left:1752px;top:297px;width:28px;height:27px;background:#4a4a4a;border:2px solid #2f2f2f;"></div>
<div style="left:1792.0px;top:299.8px;font:normal 25px/1 'Liberation Sans',sans-serif;color:#fff;white-space:pre;transform:scaleX(0.9478);transform-origin:0 0;">Calibrated</div>
<div style="left:1920px;top:286px;width:200px;height:54px;background:#444;"></div>
<div style="left:1921px;top:289px;width:48px;height:48px;background:#1f1f1f;border-radius:3px;"></div>
<svg style="position:absolute;left:1923px;top:290px;" width="44" height="44" viewBox="0 0 44 44"><circle cx="22" cy="22" r="19" fill="none" stroke="#fff" stroke-width="2.2"/><g transform="rotate(180 22 22)"><path d="M13 22 L30 22 M23 15 L30 22 L23 29" stroke="#fff" stroke-width="3" fill="none"/></g></svg>
<div style="left:1971px;top:289px;width:48px;height:48px;background:#1f1f1f;border-radius:3px;"></div>
<svg style="position:absolute;left:1973px;top:290px;" width="44" height="44" viewBox="0 0 44 44"><circle cx="22" cy="22" r="19" fill="none" stroke="#fff" stroke-width="2.2"/><g transform="rotate(0 22 22)"><path d="M13 22 L30 22 M23 15 L30 22 L23 29" stroke="#fff" stroke-width="3" fill="none"/></g></svg>
<div style="left:2021px;top:289px;width:48px;height:48px;background:#1f1f1f;border-radius:3px;"></div>
<svg style="position:absolute;left:2023px;top:290px;" width="44" height="44" viewBox="0 0 44 44"><circle cx="22" cy="22" r="19" fill="none" stroke="#fff" stroke-width="2.2"/><g transform="rotate(90 22 22)"><path d="M13 22 L30 22 M23 15 L30 22 L23 29" stroke="#fff" stroke-width="3" fill="none"/></g></svg>
<div style="left:2071px;top:289px;width:48px;height:48px;background:#1f1f1f;border-radius:3px;"></div>
<svg style="position:absolute;left:2073px;top:290px;" width="44" height="44" viewBox="0 0 44 44"><circle cx="22" cy="22" r="19" fill="none" stroke="#fff" stroke-width="2.2"/><g transform="rotate(270 22 22)"><path d="M13 22 L30 22 M23 15 L30 22 L23 29" stroke="#fff" stroke-width="3" fill="none"/></g></svg>
<svg style="position:absolute;left:2128px;top:320px;" width="14" height="16" viewBox="0 0 14 16"><path d="M1 2H13M1 5H13" stroke="#ddd" stroke-width="1.5"/><path d="M1 8L7 14L13 8Z" fill="#ddd"/></svg>
<div style="left:907px;top:344px;width:1341px;height:42px;background:#333333;"></div>
<div style="left:911px;top:345px;width:147px;height:36px;background:linear-gradient(#fdfdfd,#e6e6e6 45%,#b9b9b9);border-radius:3px;"></div>
<div style="left:923.0px;top:352.0px;font:normal 22px/1 'Liberation Sans',sans-serif;color:#111;white-space:pre;transform:scaleX(1.1177);transform-origin:0 0;">Information</div>
<div style="left:1067px;top:345px;width:183px;height:36px;background:#3c3c3c;border:1px solid #333;border-radius:3px;"></div>
<div style="left:1078.5px;top:352.0px;font:normal 22px/1 'Liberation Sans',sans-serif;color:#f0f0f0;white-space:pre;transform:scaleX(1.0814);transform-origin:0 0;">Guider settings</div>
<div style="left:1259px;top:345px;width:128px;height:36px;background:#3c3c3c;border:1px solid #333;border-radius:3px;"></div>
<div style="left:1271.0px;top:352.0px;font:normal 22px/1 'Liberation Sans',sans-serif;color:#f0f0f0;white-space:pre;transform:scaleX(1.0629);transform-origin:0 0;">Advanced</div>
<div style="left:907px;top:385px;width:1341px;height:187px;background:#444444;overflow:hidden;"></div>
<div style="left:907px;top:385px;width:1341px;height:3px;background:#2a2a2a;"></div>
<div style="left:2188px;top:388px;width:60px;height:184px;background:#1f1f1f;"></div>
<svg style="position:absolute;left:2207.0px;top:411px;" width="22" height="14" viewBox="0 0 22 14"><path d="M1 13L11 1L21 13Z" fill="#6a6a6a"/></svg>
<svg style="position:absolute;left:2207.0px;top:534px;" width="22" height="14" viewBox="0 0 22 14"><path d="M1 1L11 13L21 1Z" fill="#6a6a6a"/></svg>
<div style="left:2210px;top:448px;width:17px;height:24px;background:#6a6a6a;"></div>
<div style="left:908.0px;top:398.4px;font:normal 43px/1 'Liberation Sans',sans-serif;color:#1ba1e2;white-space:pre;transform:scaleX(0.9431);transform-origin:0 0;">Status</div>
<div style="left:908.0px;top:456.4px;font:normal 43px/1 'Liberation Sans',sans-serif;color:#1ba1e2;white-space:pre;transform:scaleX(1.0253);transform-origin:0 0;">Iteration #/Frame rate</div>
<div style="left:908.0px;top:516.5px;font:normal 43px/1 'Liberation Sans',sans-serif;color:#1ba1e2;white-space:pre;transform:scaleX(0.9670);transform-origin:0 0;">Error X/Y</div>
<div style="left:1349px;top:389px;width:637px;height:55px;background:#333333;border:2px solid #0d0d0d;border-radius:4px;"></div>
<div style="left:1358.0px;top:402.6px;font:normal 31px/1 'Liberation Sans',sans-serif;color:#f0f0f0;white-space:pre;">Idle</div>
<div style="left:1349px;top:449px;width:209px;height:55px;background:#333333;border:2px solid #0d0d0d;border-radius:4px;"></div>
<div style="left:1563px;top:449px;width:209px;height:55px;background:#333333;border:2px solid #0d0d0d;border-radius:4px;"></div>
<div style="left:1777px;top:449px;width:209px;height:55px;background:#333333;border:2px solid #0d0d0d;border-radius:4px;"></div>
<div style="left:1530.0px;top:462.6px;font:normal 31px/1 'Liberation Sans',sans-serif;color:#f0f0f0;white-space:pre;transform:scaleX(1.0444);transform-origin:0 0;">0</div>
<div style="left:1993.0px;top:468.3px;font:normal 22px/1 'Liberation Sans',sans-serif;color:#f0f0f0;white-space:pre;transform:scaleX(1.0590);transform-origin:0 0;">[ms]</div>
<div style="left:1349px;top:509px;width:316px;height:55px;background:#333333;border:2px solid #0d0d0d;border-radius:4px;"></div>
<div style="left:1670px;top:509px;width:316px;height:55px;background:#333333;border:2px solid #0d0d0d;border-radius:4px;"></div>
<div style="left:1349px;top:567px;width:637px;height:5px;overflow:hidden"><div style="left:0px;top:0px;width:316px;height:40px;background:#333333;border:2px solid #0d0d0d;border-radius:4px;"></div><div style="left:321px;top:0px;width:316px;height:40px;background:#333333;border:2px solid #0d0d0d;border-radius:4px;"></div></div>
<div style="left:1993px;top:517px;width:165px;height:47px;background:#383838;border:1px solid #2a2a2a;border-radius:4px;"></div>
<div style="left:2000.0px;top:533.3px;font:normal 22px/1 'Liberation Sans',sans-serif;color:#f0f0f0;white-space:pre;transform:scaleX(1.0258);transform-origin:0 0;">[arcsec]</div>
<div style="left:2122px;top:520px;width:35px;height:41px;background:#6a6a6a;border-radius:3px;"></div>
<svg style="position:absolute;left:2129px;top:531px;" width="22" height="18" viewBox="0 0 22 18"><path d="M3 4L11 13L19 4" stroke="#fff" stroke-width="3" fill="none"/></svg>
<div style="left:907px;top:571px;width:1341px;height:3px;background:#1ba1e2;"></div>
<div style="left:1558px;top:574px;width:39px;height:2px;background:#888;"></div>
<div style="left:907px;top:573px;width:1341px;height:72px;background:#1b1b1b;"></div>
<div style="left:907px;top:573px;width:1341px;height:10px;background:#2b2b2b;"></div>
<div style="left:907px;top:571px;width:3px;height:11px;background:#1ba1e2;"></div>
<div style="left:912px;top:583px;width:470px;height:58px;background:#333333;"></div>
<div style="left:918px;top:593px;width:4px;height:4px;background:#d8d8d8;"></div>
<div style="left:918px;top:600px;width:4px;height:4px;background:#d8d8d8;"></div>
<div style="left:918px;top:607px;width:4px;height:4px;background:#d8d8d8;"></div>
<div style="left:918px;top:614px;width:4px;height:4px;background:#d8d8d8;"></div>
<div style="left:918px;top:621px;width:4px;height:4px;background:#d8d8d8;"></div>
<div style="left:926px;top:585px;width:430px;height:54px;background:linear-gradient(#5e5e5e 0,#575757 48%,#474747 52%,#444 100%);"></div>
<div style="left:928px;top:586px;width:47px;height:52px;border:1.5px solid #6a6a6a;border-radius:4px;"></div>
<svg style="position:absolute;left:929.5px;top:590.0px;" width="44" height="44" viewBox="0 0 44 44"><circle cx="22" cy="22" r="19" fill="none" stroke="#9a9a9a" stroke-width="2.2"/><g transform="rotate(45 22 22)" fill="#9a9a9a"><rect x="15" y="18" width="14" height="9" rx="3"/><rect x="17.5" y="13" width="3" height="5"/><rect x="23.5" y="13" width="3" height="5"/><rect x="20.5" y="27" width="3" height="5"/></g><path d="M12 12 L32 32" stroke="#9a9a9a" stroke-width="2.5"/></svg>
<div style="left:978px;top:586px;width:46px;height:52px;background:linear-gradient(#2a2a2a,#262626 48%,#161616 52%,#141414);border-radius:4px;"></div>
<svg style="position:absolute;left:979.0px;top:590.0px;" width="44" height="44" viewBox="0 0 44 44"><circle cx="22" cy="22" r="19" fill="none" stroke="#ffffff" stroke-width="2.2"/><g transform="rotate(45 22 22)" fill="#ffffff"><rect x="15" y="16" width="14" height="5" rx="2"/><rect x="15" y="24" width="14" height="5" rx="2"/><rect x="17.5" y="12" width="3" height="4"/><rect x="23.5" y="12" width="3" height="4"/><rect x="20.5" y="29" width="3" height="4"/></g><path d="M12 12 L32 32" stroke="#ffffff" stroke-width="2.5"/></svg>
<div style="left:1036px;top:586px;width:46px;height:52px;border:1.5px solid #6a6a6a;border-radius:4px;"></div>
<svg style="position:absolute;left:1037.0px;top:590.0px;" width="44" height="44" viewBox="0 0 44 44"><circle cx="22" cy="22" r="19" fill="none" stroke="#9a9a9a" stroke-width="2.2"/><g transform="rotate(45 22 22)" fill="#9a9a9a"><rect x="19.8" y="18" width="4.4" height="16" rx="2"/><path d="M15.5 10 L15.5 16 Q15.5 22 22 22 Q28.5 22 28.5 16 L28.5 10 L24.6 10 L24.6 15.5 L19.4 15.5 L19.4 10 Z"/></g></svg>
<div style="left:1100px;top:586px;width:46px;height:52px;border:1.5px solid #6a6a6a;border-radius:4px;"></div>
<svg style="position:absolute;left:1101.0px;top:590.0px;" width="44" height="44" viewBox="0 0 44 44"><circle cx="22" cy="22" r="19" fill="none" stroke="#9a9a9a" stroke-width="2.2"/><path d="M17 13 L31 22 L17 31 Z" fill="#9a9a9a"/></svg>
<div style="left:1151px;top:586px;width:41px;height:52px;background:linear-gradient(#2a2a2a,#262626 48%,#161616 52%,#141414);border-radius:4px;"></div>
<svg style="position:absolute;left:1149.5px;top:590.0px;" width="44" height="44" viewBox="0 0 44 44"><circle cx="22" cy="22" r="19" fill="none" stroke="#ffffff" stroke-width="2.2"/><rect x="15" y="14" width="4.5" height="16" fill="#ffffff"/><rect x="24.5" y="14" width="4.5" height="16" fill="#ffffff"/></svg>
<div style="left:1196px;top:586px;width:46px;height:52px;background:linear-gradient(#2a2a2a,#262626 48%,#161616 52%,#141414);border-radius:4px;"></div>
<svg style="position:absolute;left:1197.0px;top:590.0px;" width="44" height="44" viewBox="0 0 44 44"><circle cx="22" cy="22" r="19" fill="none" stroke="#ffffff" stroke-width="2.2"/><rect x="15" y="15" width="14" height="14" fill="#ffffff"/></svg>
<div style="left:1258px;top:586px;width:46px;height:52px;background:linear-gradient(#2a2a2a,#262626 48%,#161616 52%,#141414);border-radius:4px;"></div>
<svg style="position:absolute;left:1259.0px;top:590.0px;" width="44" height="44" viewBox="0 0 44 44"><circle cx="22" cy="22" r="19" fill="none" stroke="#ffffff" stroke-width="2.2"/><g transform="rotate(45 22 22)" fill="#ffffff"><rect x="16" y="10" width="12" height="4" rx="1"/><path d="M18.5 14 L25.5 14 L28 23 L16 23 Z"/><rect x="21" y="23" width="2" height="11"/></g></svg>
<div style="left:1307px;top:586px;width:47px;height:52px;border:1.5px solid #6a6a6a;border-radius:4px;"></div>
<svg style="position:absolute;left:1308.5px;top:590.0px;" width="44" height="44" viewBox="0 0 44 44"><circle cx="22" cy="22" r="19" fill="none" stroke="#9a9a9a" stroke-width="2.2"/><g transform="rotate(45 22 22)" fill="#9a9a9a"><rect x="16" y="10" width="12" height="4" rx="1"/><path d="M18.5 14 L25.5 14 L28 23 L16 23 Z"/><rect x="21" y="23" width="2" height="11"/></g><path d="M10 10 L34 34" stroke="#9a9a9a" stroke-width="2.5"/></svg>
<div style="left:1031px;top:591px;width:2px;height:42px;background:#aaaaaa;"></div>
<div style="left:1093px;top:591px;width:2px;height:42px;background:#aaaaaa;"></div>
<div style="left:1251px;top:591px;width:2px;height:42px;background:#aaaaaa;"></div>
<svg style="position:absolute;left:1364px;top:619px;" width="14" height="16" viewBox="0 0 14 16"><path d="M1 2H13M1 5H13" stroke="#ddd" stroke-width="1.5"/><path d="M1 8L7 14L13 8Z" fill="#ddd"/></svg>
<div style="left:1390px;top:583px;width:441px;height:58px;background:#333333;"></div>
<div style="left:1396px;top:593px;width:4px;height:4px;background:#d8d8d8;"></div>
<div style="left:1396px;top:600px;width:4px;height:4px;background:#d8d8d8;"></div>
<div style="left:1396px;top:607px;width:4px;height:4px;background:#d8d8d8;"></div>
<div style="left:1396px;top:614px;width:4px;height:4px;background:#d8d8d8;"></div>
<div style="left:1396px;top:621px;width:4px;height:4px;background:#d8d8d8;"></div>
<div style="left:1402px;top:585px;width:403px;height:54px;background:linear-gradient(#6e6e6e,#666 48%,#585858 52%,#555);"></div>
<div style="left:1405.0px;top:599.8px;font:normal 25px/1 'Liberation Sans',sans-serif;color:#fff;white-space:pre;transform:scaleX(0.9318);transform-origin:0 0;">Position [steps]</div>
<div style="left:1605px;top:595px;width:120px;height:39px;background:#333;border:2px solid #1a1a1a;border-radius:3px;"></div>
<div style="left:1652.0px;top:601.8px;font:normal 25px/1 'Liberation Sans',sans-serif;color:#f0f0f0;white-space:pre;transform:scaleX(0.9061);transform-origin:0 0;">32768</div>
<svg style="position:absolute;left:1730px;top:596px;" width="20" height="38" viewBox="0 0 20 38"><path d="M2 14L10 4L18 14Z M2 24L10 34L18 24Z" fill="#7a7a7a"/></svg>
<div style="left:1755px;top:587px;width:48px;height:50px;background:#1f1f1f;border-radius:3px;"></div>
<svg style="position:absolute;left:1757px;top:590px;" width="44" height="44" viewBox="0 0 44 44"><circle cx="22" cy="22" r="19" fill="none" stroke="#fff" stroke-width="2.2"/><circle cx="22" cy="22" r="9" fill="none" stroke="#fff" stroke-width="3"/><circle cx="22" cy="22" r="4.5" fill="#fff"/></svg>
<svg style="position:absolute;left:1816px;top:619px;" width="14" height="16" viewBox="0 0 14 16"><path d="M1 2H13M1 5H13" stroke="#ddd" stroke-width="1.5"/><path d="M1 8L7 14L13 8Z" fill="#ddd"/></svg>
<div style="left:1840px;top:583px;width:38px;height:58px;background:#333333;"></div>
<div style="left:1846px;top:593px;width:4px;height:4px;background:#d8d8d8;"></div>
<div style="left:1846px;top:600px;width:4px;height:4px;background:#d8d8d8;"></div>
<div style="left:1846px;top:607px;width:4px;height:4px;background:#d8d8d8;"></div>
<div style="left:1846px;top:614px;width:4px;height:4px;background:#d8d8d8;"></div>
<div style="left:1846px;top:621px;width:4px;height:4px;background:#d8d8d8;"></div>
<svg style="position:absolute;left:1861px;top:619px;" width="14" height="16" viewBox="0 0 14 16"><path d="M1 2H13M1 5H13" stroke="#ddd" stroke-width="1.5"/><path d="M1 8L7 14L13 8Z" fill="#ddd"/></svg>
<div style="left:907px;top:644px;width:1341px;height:42px;background:#333333;"></div>
<div style="left:911px;top:645px;width:147px;height:36px;background:linear-gradient(#fdfdfd,#e6e6e6 45%,#b9b9b9);border-radius:3px;"></div>
<div style="left:923.0px;top:652.0px;font:normal 22px/1 'Liberation Sans',sans-serif;color:#111;white-space:pre;transform:scaleX(1.1177);transform-origin:0 0;">Information</div>
<div style="left:1067px;top:645px;width:193px;height:36px;background:#3c3c3c;border:1px solid #333;border-radius:3px;"></div>
<div style="left:1077.5px;top:652.0px;font:normal 22px/1 'Liberation Sans',sans-serif;color:#f0f0f0;white-space:pre;transform:scaleX(1.0657);transform-origin:0 0;">Focuser settings</div>
<div style="left:1270px;top:645px;width:128px;height:36px;background:#3c3c3c;border:1px solid #333;border-radius:3px;"></div>
<div style="left:1282.0px;top:652.0px;font:normal 22px/1 'Liberation Sans',sans-serif;color:#f0f0f0;white-space:pre;transform:scaleX(1.0629);transform-origin:0 0;">Advanced</div>
<div style="left:907px;top:685px;width:1341px;height:716px;background:#444444;"></div>
<div style="left:907px;top:685px;width:1341px;height:3px;background:#2a2a2a;"></div>
<div style="left:2188px;top:688px;width:60px;height:713px;background:#1f1f1f;"></div>
<svg style="position:absolute;left:2207.0px;top:711px;" width="22" height="14" viewBox="0 0 22 14"><path d="M1 13L11 1L21 13Z" fill="#6a6a6a"/></svg>
<svg style="position:absolute;left:2207.0px;top:1365px;" width="22" height="14" viewBox="0 0 22 14"><path d="M1 1L11 13L21 1Z" fill="#6a6a6a"/></svg>
<div style="left:2210px;top:750px;width:17px;height:442px;background:#6a6a6a;"></div>
<div style="left:908.0px;top:690.5px;font:normal 43px/1 'Liberation Sans',sans-serif;color:#1ba1e2;white-space:pre;transform:scaleX(0.9431);transform-origin:0 0;">Status</div>
<div style="left:908.0px;top:751.5px;font:normal 43px/1 'Liberation Sans',sans-serif;color:#1ba1e2;white-space:pre;transform:scaleX(1.0253);transform-origin:0 0;">Iteration #/Frame rate</div>
<div style="left:908.0px;top:811.5px;font:normal 43px/1 'Liberation Sans',sans-serif;color:#1ba1e2;white-space:pre;transform:scaleX(0.9657);transform-origin:0 0;">Stack[%]/SNR[dB]</div>
<div style="left:908.0px;top:871.5px;font:normal 43px/1 'Liberation Sans',sans-serif;color:#1ba1e2;white-space:pre;transform:scaleX(0.9862);transform-origin:0 0;">Filter/Reference[%]</div>
<div style="left:908.0px;top:931.5px;font:normal 43px/1 'Liberation Sans',sans-serif;color:#1ba1e2;white-space:pre;transform:scaleX(0.9947);transform-origin:0 0;">Gaussian smoothing</div>
<div style="left:908.0px;top:1050.5px;font:normal 43px/1 'Liberation Sans',sans-serif;color:#1ba1e2;white-space:pre;transform:scaleX(1.0037);transform-origin:0 0;">Absolute</div>
<div style="left:908.0px;top:1110.5px;font:normal 43px/1 'Liberation Sans',sans-serif;color:#1ba1e2;white-space:pre;transform:scaleX(0.9462);transform-origin:0 0;">Relative</div>
<div style="left:908.0px;top:1261.5px;font:normal 43px/1 'Liberation Sans',sans-serif;color:#1ba1e2;white-space:pre;transform:scaleX(0.9463);transform-origin:0 0;">Focuser</div>
<div style="left:1349px;top:687px;width:837px;height:53px;background:#ffa500;border:2px solid #0d0d0d;border-radius:4px;"></div>
<div style="left:1358.0px;top:700.6px;font:normal 31px/1 'Liberation Sans',sans-serif;color:#000;white-space:pre;transform:scaleX(1.0274);transform-origin:0 0;">Waiting</div>
<div style="left:1349px;top:745px;width:275px;height:54px;background:#333333;border:2px solid #0d0d0d;border-radius:4px;"></div>
<div style="left:1581.9px;top:756.6px;font:normal 31px/1 'Liberation Sans',sans-serif;color:#f0f0f0;white-space:pre;transform:scaleX(0.9300);transform-origin:0 0;">21</div>
<div style="left:1630px;top:745px;width:275px;height:54px;background:#333333;border:2px solid #0d0d0d;border-radius:4px;"></div>
<div style="left:1822.9px;top:756.6px;font:normal 31px/1 'Liberation Sans',sans-serif;color:#f0f0f0;white-space:pre;transform:scaleX(0.9300);transform-origin:0 0;">5,266</div>
<div style="left:1910px;top:745px;width:276px;height:54px;background:#333333;border:2px solid #0d0d0d;border-radius:4px;"></div>
<div style="left:2103.9px;top:756.6px;font:normal 31px/1 'Liberation Sans',sans-serif;color:#f0f0f0;white-space:pre;transform:scaleX(0.9300);transform-origin:0 0;">5,335</div>
<div style="left:1349px;top:808px;width:556px;height:46px;background:#575757;"></div>
<div style="left:1349px;top:808px;width:370px;height:46px;background:#00a2dc;"></div>
<div style="left:1604.5px;top:823.3px;font:normal 22px/1 'Liberation Sans',sans-serif;color:#1a1a1a;white-space:pre;transform:scaleX(1.0220);transform-origin:0 0;">67%</div>
<div style="left:1910px;top:803px;width:276px;height:53px;background:#fffde0;border:2px solid #0d0d0d;border-radius:4px;"></div>
<div style="left:2103.9px;top:814.1px;font:normal 31px/1 'Liberation Sans',sans-serif;color:#000;white-space:pre;transform:scaleX(0.9300);transform-origin:0 0;">27.36</div>
<div style="left:1349px;top:863px;width:556px;height:54px;background:#333333;border:2px solid #0d0d0d;border-radius:4px;"></div>
<div style="left:1910px;top:863px;width:276px;height:54px;background:#333333;border:2px solid #0d0d0d;border-radius:4px;"></div>
<div style="left:1358.0px;top:875.6px;font:normal 31px/1 'Liberation Sans',sans-serif;color:#f0f0f0;white-space:pre;transform:scaleX(1.0768);transform-origin:0 0;">No filter</div>
<div style="left:1349px;top:924px;width:837px;height:53px;background:#333333;border:2px solid #0d0d0d;border-radius:4px;"></div>
<div style="left:2119.9px;top:935.6px;font:normal 31px/1 'Liberation Sans',sans-serif;color:#f0f0f0;white-space:pre;transform:scaleX(0.9300);transform-origin:0 0;">0.00</div>
<div style="left:1427.0px;top:1001.8px;font:normal 25px/1 'Liberation Sans',sans-serif;color:#e6e6e6;white-space:pre;transform:scaleX(0.9489);transform-origin:0 0;">Current [%]</div>
<div style="left:1704.0px;top:1001.8px;font:normal 25px/1 'Liberation Sans',sans-serif;color:#e6e6e6;white-space:pre;transform:scaleX(0.9281);transform-origin:0 0;">Average [%]</div>
<div style="left:2001.5px;top:1001.8px;font:normal 25px/1 'Liberation Sans',sans-serif;color:#e6e6e6;white-space:pre;transform:scaleX(0.9599);transform-origin:0 0;">Angle [°]</div>
<div style="left:1349px;top:1043px;width:275px;height:53px;background:#008000;border:2px solid #0d0d0d;border-radius:4px;"></div>
<div style="left:1557.9px;top:1054.2px;font:normal 31px/1 'Liberation Sans',sans-serif;color:#fff;white-space:pre;transform:scaleX(0.9300);transform-origin:0 0;">0.71</div>
<div style="left:1630px;top:1043px;width:224px;height:53px;background:#008000;border:2px solid #0d0d0d;border-radius:4px;"></div>
<div style="left:1787.9px;top:1054.2px;font:normal 31px/1 'Liberation Sans',sans-serif;color:#fff;white-space:pre;transform:scaleX(0.9300);transform-origin:0 0;">1.60</div>
<div style="left:1910px;top:1043px;width:276px;height:53px;background:#333333;border:2px solid #0d0d0d;border-radius:4px;"></div>
<div style="left:2094.3px;top:1054.2px;font:normal 31px/1 'Liberation Sans',sans-serif;color:#f0f0f0;white-space:pre;transform:scaleX(0.9300);transform-origin:0 0;">-13.59</div>
<div style="left:1349px;top:1103px;width:275px;height:54px;background:#008000;border:2px solid #0d0d0d;border-radius:4px;"></div>
<div style="left:1557.9px;top:1114.7px;font:normal 31px/1 'Liberation Sans',sans-serif;color:#fff;white-space:pre;transform:scaleX(0.9300);transform-origin:0 0;">0.59</div>
<div style="left:1630px;top:1103px;width:224px;height:54px;background:#008000;border:2px solid #0d0d0d;border-radius:4px;"></div>
<div style="left:1787.9px;top:1114.7px;font:normal 31px/1 'Liberation Sans',sans-serif;color:#fff;white-space:pre;transform:scaleX(0.9300);transform-origin:0 0;">1.34</div>
<div style="left:1910px;top:1103px;width:276px;height:54px;background:#333333;border:2px solid #0d0d0d;border-radius:4px;"></div>
<div style="left:2094.3px;top:1114.7px;font:normal 31px/1 'Liberation Sans',sans-serif;color:#f0f0f0;white-space:pre;transform:scaleX(0.9300);transform-origin:0 0;">-37.08</div>
<div style="left:1859px;top:1044px;width:48px;height:52px;background:#232323;border-radius:3px;"></div>
<svg style="position:absolute;left:1862px;top:1050px;" width="40" height="40" viewBox="0 0 40 40"><circle cx="20" cy="20" r="17" fill="none" stroke="#fff" stroke-width="2.2"/><path d="M12 22 L12 16 L26 16 M23 13 L26 16 L23 19 M28 18 L28 24 L14 24 M17 21 L14 24 L17 27" stroke="#fff" stroke-width="2" fill="none"/></svg>
<div style="left:1859px;top:1104px;width:48px;height:52px;background:#232323;border-radius:3px;"></div>
<svg style="position:absolute;left:1862px;top:1110px;" width="40" height="40" viewBox="0 0 40 40"><circle cx="20" cy="20" r="17" fill="none" stroke="#fff" stroke-width="2.2"/><path d="M12 22 L12 16 L26 16 M23 13 L26 16 L23 19 M28 18 L28 24 L14 24 M17 21 L14 24 L17 27" stroke="#fff" stroke-width="2" fill="none"/></svg>
<div style="left:1394.0px;top:1180.8px;font:normal 25px/1 'Liberation Sans',sans-serif;color:#e6e6e6;white-space:pre;transform:scaleX(0.9492);transform-origin:0 0;">Correction [steps]</div>
<div style="left:1690.0px;top:1180.8px;font:normal 25px/1 'Liberation Sans',sans-serif;color:#e6e6e6;white-space:pre;transform:scaleX(0.9390);transform-origin:0 0;">Current [steps]</div>
<div style="left:1987.0px;top:1180.8px;font:normal 25px/1 'Liberation Sans',sans-serif;color:#e6e6e6;white-space:pre;transform:scaleX(0.9385);transform-origin:0 0;">Max [steps]</div>
<div style="left:1349px;top:1223px;width:275px;height:54px;background:#333333;border:2px solid #0d0d0d;border-radius:4px;"></div>
<div style="left:1598.0px;top:1234.7px;font:normal 31px/1 'Liberation Sans',sans-serif;color:#f0f0f0;white-space:pre;transform:scaleX(0.9300);transform-origin:0 0;">0</div>
<div style="left:1630px;top:1223px;width:275px;height:54px;background:#333333;border:2px solid #0d0d0d;border-radius:4px;"></div>
<div style="left:1814.9px;top:1234.7px;font:normal 31px/1 'Liberation Sans',sans-serif;color:#f0f0f0;white-space:pre;transform:scaleX(0.9300);transform-origin:0 0;">32766</div>
<div style="left:1930px;top:1223px;width:256px;height:54px;background:#333333;border:2px solid #0d0d0d;border-radius:4px;"></div>
<div style="left:2095.9px;top:1234.7px;font:normal 31px/1 'Liberation Sans',sans-serif;color:#f0f0f0;white-space:pre;transform:scaleX(0.9300);transform-origin:0 0;">65535</div>
<div style="left:1462.5px;top:1300.8px;font:normal 25px/1 'Liberation Sans',sans-serif;color:#e6e6e6;white-space:pre;transform:scaleX(0.9040);transform-origin:0 0;">Type</div>
<div style="left:1678.5px;top:1300.8px;font:normal 25px/1 'Liberation Sans',sans-serif;color:#e6e6e6;white-space:pre;transform:scaleX(0.9351);transform-origin:0 0;">Temperature [°C]</div>
<div style="left:1979.0px;top:1300.8px;font:normal 25px/1 'Liberation Sans',sans-serif;color:#e6e6e6;white-space:pre;transform:scaleX(0.9214);transform-origin:0 0;">CFZ [μ ± 5%]</div>
<div style="left:1349px;top:1343px;width:275px;height:55px;background:#333333;border:2px solid #0d0d0d;border-radius:4px;"></div>
<div style="left:1630px;top:1343px;width:275px;height:55px;background:#333333;border:2px solid #0d0d0d;border-radius:4px;"></div>
<div style="left:1838.9px;top:1355.2px;font:normal 31px/1 'Liberation Sans',sans-serif;color:#f0f0f0;white-space:pre;transform:scaleX(0.9300);transform-origin:0 0;">3.18</div>
<div style="left:1910px;top:1343px;width:276px;height:55px;background:#333333;border:2px solid #0d0d0d;border-radius:4px;"></div>
<div style="left:2087.9px;top:1355.2px;font:normal 31px/1 'Liberation Sans',sans-serif;color:#f0f0f0;white-space:pre;transform:scaleX(0.9300);transform-origin:0 0;">201.25</div>
<div style="left:1358.0px;top:1357.7px;font:normal 31px/1 'Liberation Sans',sans-serif;color:#f0f0f0;white-space:pre;transform:scaleX(1.0364);transform-origin:0 0;">Absolute</div>
<div style="left:2px;top:1400px;width:2246px;height:12px;background:#2b2b2b;"></div>
<div style="left:2px;top:1401px;width:2246px;height:2px;background:#5a5a5a;"></div>
<div style="left:1125px;top:1405px;width:40px;height:2px;background:#888;"></div>
<div style="left:2px;top:1411px;width:2246px;height:50px;background:#444444;"></div>
<div style="left:10px;top:1417px;width:106px;height:37px;background:#3c3c3c;border:1px solid #333;border-radius:3px;"></div>
<div style="left:22.0px;top:1427.0px;font:normal 23px/1 'Liberation Sans',sans-serif;color:#f0f0f0;white-space:pre;transform:scaleX(1.0341);transform-origin:0 0;">Guiding</div>
<div style="left:125px;top:1417px;width:118px;height:37px;background:linear-gradient(#fdfdfd,#e6e6e6 45%,#b9b9b9);border-radius:3px;"></div>
<div style="left:137.5px;top:1427.0px;font:normal 23px/1 'Liberation Sans',sans-serif;color:#111;white-space:pre;transform:scaleX(0.9963);transform-origin:0 0;">Focusing</div>
<div style="left:252px;top:1417px;width:167px;height:37px;background:#3c3c3c;border:1px solid #333;border-radius:3px;"></div>
<div style="left:264.0px;top:1427.0px;font:normal 23px/1 'Liberation Sans',sans-serif;color:#f0f0f0;white-space:pre;">Performances</div>
<div style="left:427px;top:1417px;width:63px;height:37px;background:#3c3c3c;border:1px solid #333;border-radius:3px;"></div>
<div style="left:439.5px;top:1427.0px;font:normal 23px/1 'Liberation Sans',sans-serif;color:#f0f0f0;white-space:pre;transform:scaleX(0.9898);transform-origin:0 0;">Log</div>
<div style="left:3px;top:1460px;width:2246px;height:524px;background:#4f4f4f;border:2px solid #9a9a9a;"></div>
<div style="left:8px;top:1466px;width:98px;height:512px;background:#1b1b1b;"></div>
<div style="left:14px;top:1469px;width:64px;height:52px;background:#333;"></div>
<div style="left:20px;top:1478px;width:4px;height:4px;background:#d8d8d8;"></div>
<div style="left:20px;top:1485px;width:4px;height:4px;background:#d8d8d8;"></div>
<div style="left:20px;top:1492px;width:4px;height:4px;background:#d8d8d8;"></div>
<div style="left:20px;top:1499px;width:4px;height:4px;background:#d8d8d8;"></div>
<div style="left:20px;top:1506px;width:4px;height:4px;background:#d8d8d8;"></div>
<div style="left:30px;top:1471px;width:47px;height:48px;background:#262626;border:1px solid #444;"></div>
<svg style="position:absolute;left:31px;top:1473px;" width="44" height="44" viewBox="0 0 44 44"><circle cx="22" cy="22" r="19" fill="none" stroke="#fff" stroke-width="2.2"/><rect x="16" y="17" width="12" height="14" fill="none" stroke="#fff" stroke-width="2"/><path d="M13 15 L31 15 M19 12 L25 12 M20 20 L20 29 M24 20 L24 29" stroke="#fff" stroke-width="2"/></svg>
<svg style="position:absolute;left:88px;top:1503px;" width="14" height="16" viewBox="0 0 14 16"><path d="M1 2H13M1 5H13" stroke="#ddd" stroke-width="1.5"/><path d="M1 8L7 14L13 8Z" fill="#ddd"/></svg>
<svg style="position:absolute;left:0px;top:1440px;" width="2250" height="560" viewBox="0 0 2250 560"></svg>
<svg style="position:absolute;left:0;top:0" width="2250" height="2000"><line x1="170" y1="1507" x2="2230" y2="1507" stroke="#e6e6e6" stroke-width="2"/><line x1="170" y1="1542" x2="2230" y2="1542" stroke="#e6e6e6" stroke-width="2"/><line x1="178.4" y1="1479" x2="178.4" y2="1550" stroke="#e6e6e6" stroke-width="2"/><line x1="386.9" y1="1479" x2="386.9" y2="1550" stroke="#e6e6e6" stroke-width="2"/><line x1="595.3" y1="1479" x2="595.3" y2="1550" stroke="#e6e6e6" stroke-width="2"/><line x1="803.7" y1="1479" x2="803.7" y2="1550" stroke="#e6e6e6" stroke-width="2"/><line x1="1012.2" y1="1479" x2="1012.2" y2="1550" stroke="#e6e6e6" stroke-width="2"/><line x1="1220.7" y1="1479" x2="1220.7" y2="1550" stroke="#e6e6e6" stroke-width="2"/><line x1="1429.1" y1="1479" x2="1429.1" y2="1550" stroke="#e6e6e6" stroke-width="2"/><line x1="1637.5" y1="1479" x2="1637.5" y2="1550" stroke="#e6e6e6" stroke-width="2"/><line x1="1846.0" y1="1479" x2="1846.0" y2="1550" stroke="#e6e6e6" stroke-width="2"/><line x1="2054.4" y1="1479" x2="2054.4" y2="1550" stroke="#e6e6e6" stroke-width="2"/></svg>
<div style="left:172.9px;top:1562.2px;font:normal 21px/1 'Liberation Sans',sans-serif;color:#c8c8c8;white-space:pre;transform:scaleX(0.9500);transform-origin:0 0;">1</div>
<div style="left:381.3px;top:1562.2px;font:normal 21px/1 'Liberation Sans',sans-serif;color:#c8c8c8;white-space:pre;transform:scaleX(0.9500);transform-origin:0 0;">6</div>
<div style="left:585.0px;top:1562.2px;font:normal 21px/1 'Liberation Sans',sans-serif;color:#c8c8c8;white-space:pre;transform:scaleX(0.9500);transform-origin:0 0;">11</div>
<div style="left:792.7px;top:1562.2px;font:normal 21px/1 'Liberation Sans',sans-serif;color:#c8c8c8;white-space:pre;transform:scaleX(0.9500);transform-origin:0 0;">16</div>
<div style="left:1001.1px;top:1562.2px;font:normal 21px/1 'Liberation Sans',sans-serif;color:#c8c8c8;white-space:pre;transform:scaleX(0.9500);transform-origin:0 0;">21</div>
<div style="left:1209.6px;top:1562.2px;font:normal 21px/1 'Liberation Sans',sans-serif;color:#c8c8c8;white-space:pre;transform:scaleX(0.9500);transform-origin:0 0;">26</div>
<div style="left:1418.0px;top:1562.2px;font:normal 21px/1 'Liberation Sans',sans-serif;color:#c8c8c8;white-space:pre;transform:scaleX(0.9500);transform-origin:0 0;">31</div>
<div style="left:1626.5px;top:1562.2px;font:normal 21px/1 'Liberation Sans',sans-serif;color:#c8c8c8;white-space:pre;transform:scaleX(0.9500);transform-origin:0 0;">36</div>
<div style="left:1834.9px;top:1562.2px;font:normal 21px/1 'Liberation Sans',sans-serif;color:#c8c8c8;white-space:pre;transform:scaleX(0.9500);transform-origin:0 0;">41</div>
<div style="left:2043.4px;top:1562.2px;font:normal 21px/1 'Liberation Sans',sans-serif;color:#c8c8c8;white-space:pre;transform:scaleX(0.9500);transform-origin:0 0;">46</div>
<div style="left:106.0px;top:1496.2px;font:normal 21px/1 'Liberation Sans',sans-serif;color:#c8c8c8;white-space:pre;transform:scaleX(0.9596);transform-origin:0 0;">32770</div>
<div style="left:106.0px;top:1531.2px;font:normal 21px/1 'Liberation Sans',sans-serif;color:#c8c8c8;white-space:pre;transform:scaleX(0.9596);transform-origin:0 0;">32720</div>
<svg style="position:absolute;left:0;top:0" width="2250" height="2000"><polyline points="178.4,1512.2 220.1,1512.2 261.8,1512.2 303.5,1512.2 345.2,1519.4 387.0,1518.4 428.7,1517.0 470.4,1515.5 512.1,1515.0 553.8,1514.6 595.5,1513.1 637.2,1512.2 678.9,1511.7 720.6,1511.7 762.3,1511.7 804.0,1511.2 845.8,1505.0 887.5,1505.0 929.2,1507.9 970.9,1509.3 1012.6,1510.3" fill="none" stroke="#008000" stroke-width="4"/><circle cx="178.4" cy="1512.2" r="7" fill="#fff" stroke="#008000" stroke-width="3.8"/><circle cx="220.1" cy="1512.2" r="7" fill="#fff" stroke="#008000" stroke-width="3.8"/><circle cx="261.8" cy="1512.2" r="7" fill="#fff" stroke="#008000" stroke-width="3.8"/><circle cx="303.5" cy="1512.2" r="7" fill="#fff" stroke="#008000" stroke-width="3.8"/><circle cx="345.2" cy="1519.4" r="7" fill="#fff" stroke="#008000" stroke-width="3.8"/><circle cx="387.0" cy="1518.4" r="7" fill="#fff" stroke="#008000" stroke-width="3.8"/><circle cx="428.7" cy="1517.0" r="7" fill="#fff" stroke="#008000" stroke-width="3.8"/><circle cx="470.4" cy="1515.5" r="7" fill="#fff" stroke="#008000" stroke-width="3.8"/><circle cx="512.1" cy="1515.0" r="7" fill="#fff" stroke="#008000" stroke-width="3.8"/><circle cx="553.8" cy="1514.6" r="7" fill="#fff" stroke="#008000" stroke-width="3.8"/><circle cx="595.5" cy="1513.1" r="7" fill="#fff" stroke="#008000" stroke-width="3.8"/><circle cx="637.2" cy="1512.2" r="7" fill="#fff" stroke="#008000" stroke-width="3.8"/><circle cx="678.9" cy="1511.7" r="7" fill="#fff" stroke="#008000" stroke-width="3.8"/><circle cx="720.6" cy="1511.7" r="7" fill="#fff" stroke="#008000" stroke-width="3.8"/><circle cx="762.3" cy="1511.7" r="7" fill="#fff" stroke="#008000" stroke-width="3.8"/><circle cx="804.0" cy="1511.2" r="7" fill="#fff" stroke="#008000" stroke-width="3.8"/><circle cx="845.8" cy="1505.0" r="7" fill="#fff" stroke="#008000" stroke-width="3.8"/><circle cx="887.5" cy="1505.0" r="7" fill="#fff" stroke="#008000" stroke-width="3.8"/><circle cx="929.2" cy="1507.9" r="7" fill="#fff" stroke="#008000" stroke-width="3.8"/><circle cx="970.9" cy="1509.3" r="7" fill="#fff" stroke="#008000" stroke-width="3.8"/><circle cx="1012.6" cy="1510.3" r="7" fill="#fff" stroke="#008000" stroke-width="3.8"/></svg>
<svg style="position:absolute;left:1108px;top:1584px;" width="28" height="28" viewBox="0 0 28 28"><circle cx="14" cy="14" r="10" fill="#fff" stroke="#008000" stroke-width="4"/></svg>
<div style="left:1147.0px;top:1586.5px;font:normal 23px/1 'Liberation Sans',sans-serif;color:#1ba1e2;white-space:pre;transform:scaleX(1.0141);transform-origin:0 0;">Position</div>
<div style="left:106px;top:1617px;width:2134px;height:9px;background:#333;"></div>
<div style="left:1154px;top:1620px;width:40px;height:2px;background:#888;"></div>
<svg style="position:absolute;left:0;top:0" width="2250" height="2000"><line x1="142" y1="1648" x2="2230" y2="1648" stroke="#e6e6e6" stroke-width="2"/><line x1="142" y1="1699" x2="2230" y2="1699" stroke="#e6e6e6" stroke-width="2"/><line x1="142" y1="1750" x2="2230" y2="1750" stroke="#e6e6e6" stroke-width="2"/><line x1="142" y1="1801" x2="2230" y2="1801" stroke="#e6e6e6" stroke-width="2"/><line x1="142" y1="1852" x2="2230" y2="1852" stroke="#e6e6e6" stroke-width="2"/><line x1="142" y1="1903" x2="2230" y2="1903" stroke="#e6e6e6" stroke-width="2"/><line x1="152.1" y1="1640" x2="152.1" y2="1910" stroke="#e6e6e6" stroke-width="2"/><line x1="363.2" y1="1640" x2="363.2" y2="1910" stroke="#e6e6e6" stroke-width="2"/><line x1="574.3" y1="1640" x2="574.3" y2="1910" stroke="#e6e6e6" stroke-width="2"/><line x1="785.4" y1="1640" x2="785.4" y2="1910" stroke="#e6e6e6" stroke-width="2"/><line x1="996.5" y1="1640" x2="996.5" y2="1910" stroke="#e6e6e6" stroke-width="2"/><line x1="1207.6" y1="1640" x2="1207.6" y2="1910" stroke="#e6e6e6" stroke-width="2"/><line x1="1418.7" y1="1640" x2="1418.7" y2="1910" stroke="#e6e6e6" stroke-width="2"/><line x1="1629.8" y1="1640" x2="1629.8" y2="1910" stroke="#e6e6e6" stroke-width="2"/><line x1="1840.9" y1="1640" x2="1840.9" y2="1910" stroke="#e6e6e6" stroke-width="2"/><line x1="2052.0" y1="1640" x2="2052.0" y2="1910" stroke="#e6e6e6" stroke-width="2"/><polygon points="152.1,1742.7 194.3,1742.2 236.5,1742.2 278.7,1742.2 320.9,1743.7 363.1,1747.5 405.4,1748.0 447.6,1747.5 489.8,1747.5 532.0,1746.6 574.2,1747.5 616.4,1746.6 658.6,1744.2 700.8,1741.8 743.0,1742.2 785.2,1741.8 827.5,1741.8 869.7,1724.5 911.9,1727.4 954.1,1730.3 996.3,1733.2 996.3,1855.1 954.1,1852.7 911.9,1849.9 869.7,1857.5 827.5,1864.2 785.2,1864.2 743.0,1864.7 700.8,1864.2 658.6,1866.1 616.4,1868.5 574.2,1869.5 532.0,1868.5 489.8,1869.5 447.6,1869.5 405.4,1870.4 363.1,1870.0 320.9,1866.1 278.7,1864.7 236.5,1864.7 194.3,1864.7 152.1,1864.7" fill="#ffa500"/><polyline points="152.1,1742.7 194.3,1742.2 236.5,1742.2 278.7,1742.2 320.9,1743.7 363.1,1747.5 405.4,1748.0 447.6,1747.5 489.8,1747.5 532.0,1746.6 574.2,1747.5 616.4,1746.6 658.6,1744.2 700.8,1741.8 743.0,1742.2 785.2,1741.8 827.5,1741.8 869.7,1724.5 911.9,1727.4 954.1,1730.3 996.3,1733.2" fill="none" stroke="#ff4500" stroke-width="4"/><polyline points="152.1,1864.7 194.3,1864.7 236.5,1864.7 278.7,1864.7 320.9,1866.1 363.1,1870.0 405.4,1870.4 447.6,1869.5 489.8,1869.5 532.0,1868.5 574.2,1869.5 616.4,1868.5 658.6,1866.1 700.8,1864.2 743.0,1864.7 785.2,1864.2 827.5,1864.2 869.7,1857.5 911.9,1849.9 954.1,1852.7 996.3,1855.1" fill="none" stroke="#ff4500" stroke-width="4"/><polyline points="152.1,1807.3 194.3,1803.5 236.5,1804.4 278.7,1803.5 320.9,1807.3 363.1,1815.4 405.4,1811.6 447.6,1806.3 489.8,1808.7 532.0,1804.9 574.2,1810.2 616.4,1804.4 658.6,1800.6 700.8,1797.7 743.0,1804.4 785.2,1802.0 827.5,1803.9 869.7,1774.3 911.9,1784.8 954.1,1795.8 996.3,1798.2" fill="none" stroke="#000" stroke-width="4"/><polyline points="152.1,1803.9 194.3,1803.0 236.5,1803.9 278.7,1803.5 320.9,1804.9 363.1,1808.7 405.4,1809.7 447.6,1807.8 489.8,1807.8 532.0,1806.8 574.2,1808.7 616.4,1806.8 658.6,1804.9 700.8,1803.0 743.0,1803.9 785.2,1803.0 827.5,1803.5 869.7,1791.0 911.9,1788.2 954.1,1791.0 996.3,1794.4" fill="none" stroke="#008000" stroke-width="4"/><circle cx="152.1" cy="1742.7" r="6.5" fill="#fff" stroke="#ff4500" stroke-width="3.5"/><circle cx="194.3" cy="1742.2" r="6.5" fill="#fff" stroke="#ff4500" stroke-width="3.5"/><circle cx="236.5" cy="1742.2" r="6.5" fill="#fff" stroke="#ff4500" stroke-width="3.5"/><circle cx="278.7" cy="1742.2" r="6.5" fill="#fff" stroke="#ff4500" stroke-width="3.5"/><circle cx="320.9" cy="1743.7" r="6.5" fill="#fff" stroke="#ff4500" stroke-width="3.5"/><circle cx="363.1" cy="1747.5" r="6.5" fill="#fff" stroke="#ff4500" stroke-width="3.5"/><circle cx="405.4" cy="1748.0" r="6.5" fill="#fff" stroke="#ff4500" stroke-width="3.5"/><circle cx="447.6" cy="1747.5" r="6.5" fill="#fff" stroke="#ff4500" stroke-width="3.5"/><circle cx="489.8" cy="1747.5" r="6.5" fill="#fff" stroke="#ff4500" stroke-width="3.5"/><circle cx="532.0" cy="1746.6" r="6.5" fill="#fff" stroke="#ff4500" stroke-width="3.5"/><circle cx="574.2" cy="1747.5" r="6.5" fill="#fff" stroke="#ff4500" stroke-width="3.5"/><circle cx="616.4" cy="1746.6" r="6.5" fill="#fff" stroke="#ff4500" stroke-width="3.5"/><circle cx="658.6" cy="1744.2" r="6.5" fill="#fff" stroke="#ff4500" stroke-width="3.5"/><circle cx="700.8" cy="1741.8" r="6.5" fill="#fff" stroke="#ff4500" stroke-width="3.5"/><circle cx="743.0" cy="1742.2" r="6.5" fill="#fff" stroke="#ff4500" stroke-width="3.5"/><circle cx="785.2" cy="1741.8" r="6.5" fill="#fff" stroke="#ff4500" stroke-width="3.5"/><circle cx="827.5" cy="1741.8" r="6.5" fill="#fff" stroke="#ff4500" stroke-width="3.5"/><circle cx="869.7" cy="1724.5" r="6.5" fill="#fff" stroke="#ff4500" stroke-width="3.5"/><circle cx="911.9" cy="1727.4" r="6.5" fill="#fff" stroke="#ff4500" stroke-width="3.5"/><circle cx="954.1" cy="1730.3" r="6.5" fill="#fff" stroke="#ff4500" stroke-width="3.5"/><circle cx="996.3" cy="1733.2" r="6.5" fill="#fff" stroke="#ff4500" stroke-width="3.5"/><circle cx="152.1" cy="1864.7" r="6.5" fill="#fff" stroke="#ff4500" stroke-width="3.5"/><circle cx="194.3" cy="1864.7" r="6.5" fill="#fff" stroke="#ff4500" stroke-width="3.5"/><circle cx="236.5" cy="1864.7" r="6.5" fill="#fff" stroke="#ff4500" stroke-width="3.5"/><circle cx="278.7" cy="1864.7" r="6.5" fill="#fff" stroke="#ff4500" stroke-width="3.5"/><circle cx="320.9" cy="1866.1" r="6.5" fill="#fff" stroke="#ff4500" stroke-width="3.5"/><circle cx="363.1" cy="1870.0" r="6.5" fill="#fff" stroke="#ff4500" stroke-width="3.5"/><circle cx="405.4" cy="1870.4" r="6.5" fill="#fff" stroke="#ff4500" stroke-width="3.5"/><circle cx="447.6" cy="1869.5" r="6.5" fill="#fff" stroke="#ff4500" stroke-width="3.5"/><circle cx="489.8" cy="1869.5" r="6.5" fill="#fff" stroke="#ff4500" stroke-width="3.5"/><circle cx="532.0" cy="1868.5" r="6.5" fill="#fff" stroke="#ff4500" stroke-width="3.5"/><circle cx="574.2" cy="1869.5" r="6.5" fill="#fff" stroke="#ff4500" stroke-width="3.5"/><circle cx="616.4" cy="1868.5" r="6.5" fill="#fff" stroke="#ff4500" stroke-width="3.5"/><circle cx="658.6" cy="1866.1" r="6.5" fill="#fff" stroke="#ff4500" stroke-width="3.5"/><circle cx="700.8" cy="1864.2" r="6.5" fill="#fff" stroke="#ff4500" stroke-width="3.5"/><circle cx="743.0" cy="1864.7" r="6.5" fill="#fff" stroke="#ff4500" stroke-width="3.5"/><circle cx="785.2" cy="1864.2" r="6.5" fill="#fff" stroke="#ff4500" stroke-width="3.5"/><circle cx="827.5" cy="1864.2" r="6.5" fill="#fff" stroke="#ff4500" stroke-width="3.5"/><circle cx="869.7" cy="1857.5" r="6.5" fill="#fff" stroke="#ff4500" stroke-width="3.5"/><circle cx="911.9" cy="1849.9" r="6.5" fill="#fff" stroke="#ff4500" stroke-width="3.5"/><circle cx="954.1" cy="1852.7" r="6.5" fill="#fff" stroke="#ff4500" stroke-width="3.5"/><circle cx="996.3" cy="1855.1" r="6.5" fill="#fff" stroke="#ff4500" stroke-width="3.5"/><circle cx="152.1" cy="1807.3" r="6" fill="#fff" stroke="#000" stroke-width="3.5"/><circle cx="194.3" cy="1803.5" r="6" fill="#fff" stroke="#000" stroke-width="3.5"/><circle cx="236.5" cy="1804.4" r="6" fill="#fff" stroke="#000" stroke-width="3.5"/><circle cx="278.7" cy="1803.5" r="6" fill="#fff" stroke="#000" stroke-width="3.5"/><circle cx="320.9" cy="1807.3" r="6" fill="#fff" stroke="#000" stroke-width="3.5"/><circle cx="363.1" cy="1815.4" r="6" fill="#fff" stroke="#000" stroke-width="3.5"/><circle cx="405.4" cy="1811.6" r="6" fill="#fff" stroke="#000" stroke-width="3.5"/><circle cx="447.6" cy="1806.3" r="6" fill="#fff" stroke="#000" stroke-width="3.5"/><circle cx="489.8" cy="1808.7" r="6" fill="#fff" stroke="#000" stroke-width="3.5"/><circle cx="532.0" cy="1804.9" r="6" fill="#fff" stroke="#000" stroke-width="3.5"/><circle cx="574.2" cy="1810.2" r="6" fill="#fff" stroke="#000" stroke-width="3.5"/><circle cx="616.4" cy="1804.4" r="6" fill="#fff" stroke="#000" stroke-width="3.5"/><circle cx="658.6" cy="1800.6" r="6" fill="#fff" stroke="#000" stroke-width="3.5"/><circle cx="700.8" cy="1797.7" r="6" fill="#fff" stroke="#000" stroke-width="3.5"/><circle cx="743.0" cy="1804.4" r="6" fill="#fff" stroke="#000" stroke-width="3.5"/><circle cx="785.2" cy="1802.0" r="6" fill="#fff" stroke="#000" stroke-width="3.5"/><circle cx="827.5" cy="1803.9" r="6" fill="#fff" stroke="#000" stroke-width="3.5"/><circle cx="869.7" cy="1774.3" r="6" fill="#fff" stroke="#000" stroke-width="3.5"/><circle cx="911.9" cy="1784.8" r="6" fill="#fff" stroke="#000" stroke-width="3.5"/><circle cx="954.1" cy="1795.8" r="6" fill="#fff" stroke="#000" stroke-width="3.5"/><circle cx="996.3" cy="1798.2" r="6" fill="#fff" stroke="#000" stroke-width="3.5"/><circle cx="152.1" cy="1803.9" r="6" fill="#fff" stroke="#008000" stroke-width="3.5"/><circle cx="194.3" cy="1803.0" r="6" fill="#fff" stroke="#008000" stroke-width="3.5"/><circle cx="236.5" cy="1803.9" r="6" fill="#fff" stroke="#008000" stroke-width="3.5"/><circle cx="278.7" cy="1803.5" r="6" fill="#fff" stroke="#008000" stroke-width="3.5"/><circle cx="320.9" cy="1804.9" r="6" fill="#fff" stroke="#008000" stroke-width="3.5"/><circle cx="363.1" cy="1808.7" r="6" fill="#fff" stroke="#008000" stroke-width="3.5"/><circle cx="405.4" cy="1809.7" r="6" fill="#fff" stroke="#008000" stroke-width="3.5"/><circle cx="447.6" cy="1807.8" r="6" fill="#fff" stroke="#008000" stroke-width="3.5"/><circle cx="489.8" cy="1807.8" r="6" fill="#fff" stroke="#008000" stroke-width="3.5"/><circle cx="532.0" cy="1806.8" r="6" fill="#fff" stroke="#008000" stroke-width="3.5"/><circle cx="574.2" cy="1808.7" r="6" fill="#fff" stroke="#008000" stroke-width="3.5"/><circle cx="616.4" cy="1806.8" r="6" fill="#fff" stroke="#008000" stroke-width="3.5"/><circle cx="658.6" cy="1804.9" r="6" fill="#fff" stroke="#008000" stroke-width="3.5"/><circle cx="700.8" cy="1803.0" r="6" fill="#fff" stroke="#008000" stroke-width="3.5"/><circle cx="743.0" cy="1803.9" r="6" fill="#fff" stroke="#008000" stroke-width="3.5"/><circle cx="785.2" cy="1803.0" r="6" fill="#fff" stroke="#008000" stroke-width="3.5"/><circle cx="827.5" cy="1803.5" r="6" fill="#fff" stroke="#008000" stroke-width="3.5"/><circle cx="869.7" cy="1791.0" r="6" fill="#fff" stroke="#008000" stroke-width="3.5"/><circle cx="911.9" cy="1788.2" r="6" fill="#fff" stroke="#008000" stroke-width="3.5"/><circle cx="954.1" cy="1791.0" r="6" fill="#fff" stroke="#008000" stroke-width="3.5"/><circle cx="996.3" cy="1794.4" r="6" fill="#fff" stroke="#008000" stroke-width="3.5"/></svg>
<div style="left:113.8px;top:1638.2px;font:normal 21px/1 'Liberation Sans',sans-serif;color:#c8c8c8;white-space:pre;transform:scaleX(0.9500);transform-origin:0 0;">30</div>
<div style="left:113.8px;top:1689.2px;font:normal 21px/1 'Liberation Sans',sans-serif;color:#c8c8c8;white-space:pre;transform:scaleX(0.9500);transform-origin:0 0;">20</div>
<div style="left:113.8px;top:1740.2px;font:normal 21px/1 'Liberation Sans',sans-serif;color:#c8c8c8;white-space:pre;transform:scaleX(0.9500);transform-origin:0 0;">10</div>
<div style="left:124.9px;top:1791.2px;font:normal 21px/1 'Liberation Sans',sans-serif;color:#c8c8c8;white-space:pre;transform:scaleX(0.9500);transform-origin:0 0;">0</div>
<div style="left:107.2px;top:1842.2px;font:normal 21px/1 'Liberation Sans',sans-serif;color:#c8c8c8;white-space:pre;transform:scaleX(0.9500);transform-origin:0 0;">-10</div>
<div style="left:107.2px;top:1893.2px;font:normal 21px/1 'Liberation Sans',sans-serif;color:#c8c8c8;white-space:pre;transform:scaleX(0.9500);transform-origin:0 0;">-20</div>
<div style="left:146.6px;top:1923.2px;font:normal 21px/1 'Liberation Sans',sans-serif;color:#c8c8c8;white-space:pre;transform:scaleX(0.9500);transform-origin:0 0;">1</div>
<div style="left:357.7px;top:1923.2px;font:normal 21px/1 'Liberation Sans',sans-serif;color:#c8c8c8;white-space:pre;transform:scaleX(0.9500);transform-origin:0 0;">6</div>
<div style="left:564.0px;top:1923.2px;font:normal 21px/1 'Liberation Sans',sans-serif;color:#c8c8c8;white-space:pre;transform:scaleX(0.9500);transform-origin:0 0;">11</div>
<div style="left:774.3px;top:1923.2px;font:normal 21px/1 'Liberation Sans',sans-serif;color:#c8c8c8;white-space:pre;transform:scaleX(0.9500);transform-origin:0 0;">16</div>
<div style="left:985.4px;top:1923.2px;font:normal 21px/1 'Liberation Sans',sans-serif;color:#c8c8c8;white-space:pre;transform:scaleX(0.9500);transform-origin:0 0;">21</div>
<div style="left:1196.5px;top:1923.2px;font:normal 21px/1 'Liberation Sans',sans-serif;color:#c8c8c8;white-space:pre;transform:scaleX(0.9500);transform-origin:0 0;">26</div>
<div style="left:1407.6px;top:1923.2px;font:normal 21px/1 'Liberation Sans',sans-serif;color:#c8c8c8;white-space:pre;transform:scaleX(0.9500);transform-origin:0 0;">31</div>
<div style="left:1618.7px;top:1923.2px;font:normal 21px/1 'Liberation Sans',sans-serif;color:#c8c8c8;white-space:pre;transform:scaleX(0.9500);transform-origin:0 0;">36</div>
<div style="left:1829.8px;top:1923.2px;font:normal 21px/1 'Liberation Sans',sans-serif;color:#c8c8c8;white-space:pre;transform:scaleX(0.9500);transform-origin:0 0;">41</div>
<div style="left:2040.9px;top:1923.2px;font:normal 21px/1 'Liberation Sans',sans-serif;color:#c8c8c8;white-space:pre;transform:scaleX(0.9500);transform-origin:0 0;">46</div>
<svg style="position:absolute;left:781px;top:1946px;" width="28" height="28" viewBox="0 0 28 28"><circle cx="14" cy="14" r="10" fill="#fff" stroke="#ff4500" stroke-width="4"/></svg>
<div style="left:818.0px;top:1948.5px;font:normal 23px/1 'Liberation Sans',sans-serif;color:#1ba1e2;white-space:pre;transform:scaleX(1.0434);transform-origin:0 0;">Maximum</div>
<svg style="position:absolute;left:940px;top:1946px;" width="28" height="28" viewBox="0 0 28 28"><circle cx="14" cy="14" r="10" fill="#fff" stroke="#ff4500" stroke-width="4"/></svg>
<div style="left:977.0px;top:1948.5px;font:normal 23px/1 'Liberation Sans',sans-serif;color:#1ba1e2;white-space:pre;transform:scaleX(1.0720);transform-origin:0 0;">Minimum</div>
<svg style="position:absolute;left:1096px;top:1946px;" width="28" height="28" viewBox="0 0 28 28"><circle cx="14" cy="14" r="10" fill="#fff" stroke="#000" stroke-width="4"/></svg>
<div style="left:1132.0px;top:1948.5px;font:normal 23px/1 'Liberation Sans',sans-serif;color:#1ba1e2;white-space:pre;transform:scaleX(0.9958);transform-origin:0 0;">Current RRDN[%]</div>
<svg style="position:absolute;left:1333px;top:1946px;" width="28" height="28" viewBox="0 0 28 28"><circle cx="14" cy="14" r="10" fill="#fff" stroke="#008000" stroke-width="4"/></svg>
<div style="left:1370.0px;top:1948.5px;font:normal 23px/1 'Liberation Sans',sans-serif;color:#1ba1e2;white-space:pre;transform:scaleX(0.9878);transform-origin:0 0;">Average RRDN[%]</div>
<div style="left:2px;top:1984px;width:2247px;height:101px;background:#1b1b1b;"></div>
<div style="left:4px;top:1987px;width:88px;height:88px;background:#232323;border:1px solid #2e2e2e;"></div>
<svg style="position:absolute;left:10px;top:1993px;" width="78" height="78" viewBox="0 0 78 78"><circle cx="39" cy="38" r="35" fill="none" stroke="#fff" stroke-width="3.5"/><circle cx="39" cy="25" r="9" fill="none" stroke="#fff" stroke-width="5"/><path d="M39 33V58M39 48H45M39 55H45" stroke="#fff" stroke-width="5" fill="none"/></svg>
<div style="left:94.0px;top:2010.6px;font:normal 44px/1 'Liberation Sans',sans-serif;color:#1ba1e2;white-space:pre;transform:scaleX(1.0252);transform-origin:0 0;">Working folder</div>
<div style="left:474px;top:2002px;width:1494px;height:54px;background:#333333;border:2px solid #0d0d0d;border-radius:4px;"></div>
<div style="left:482.0px;top:2011.1px;font:normal 34px/1 'Liberation Sans',sans-serif;color:#f0f0f0;white-space:pre;transform:scaleX(0.9183);transform-origin:0 0;">C:\_data\Demo</div>
<div style="left:1973px;top:1987px;width:89px;height:90px;background:#232323;border:1px solid #2e2e2e;"></div>
<svg style="position:absolute;left:1978px;top:1991px;" width="80" height="80" viewBox="0 0 80 80"><circle cx="40" cy="40" r="36" fill="none" stroke="#fff" stroke-width="3.5"/><path d="M20 26H34L38 31H56V56H20Z" fill="#fff"/><path d="M44 50H62M53 41V59" stroke="#232323" stroke-width="8"/><path d="M44 50H62M53 41V59" stroke="#fff" stroke-width="4"/></svg>
<div style="left:2065px;top:1987px;width:89px;height:90px;background:#232323;border:1px solid #2e2e2e;"></div>
<svg style="position:absolute;left:2070px;top:1991px;" width="80" height="80" viewBox="0 0 80 80"><circle cx="40" cy="40" r="36" fill="none" stroke="#fff" stroke-width="3.5"/><path d="M24 22H50L56 28V56H24Z" fill="#fff"/><rect x="30" y="24" width="18" height="11" fill="#232323"/><rect x="30" y="43" width="20" height="13" fill="#232323"/><rect x="35" y="48" width="5" height="5" fill="#fff"/></svg>
<div style="left:2157px;top:1987px;width:89px;height:90px;background:#232323;border:1px solid #2e2e2e;"></div>
<svg style="position:absolute;left:2162px;top:1991px;" width="80" height="80" viewBox="0 0 80 80"><circle cx="40" cy="40" r="36" fill="none" stroke="#fff" stroke-width="3.5"/><path d="M18 40L40 20L62 40H56V56H46V45H34V56H24V40Z" fill="#fff"/></svg>
<div style="left:2250px;top:0px;width:2250px;height:2086px;background:#ffffff;"></div>
<div style="left:2250px;top:0px;width:2250px;height:2px;background:#86b8ec;"></div>
<div style="left:2250px;top:0px;width:2px;height:2086px;background:#86b8ec;"></div>
<div style="left:2252px;top:2px;width:2248px;height:61px;background:#cccccc;"></div>
<div style="left:2252px;top:63px;width:2248px;height:90px;background:#f2f2f2;"></div>
<div style="left:2252px;top:152px;width:2248px;height:2px;background:#d0d0d0;"></div>
<div style="left:2381px;top:2px;width:2px;height:61px;background:#8f8f8f;"></div>
<div style="left:2383px;top:2px;width:400px;height:61px;background:#f2f2f2;"></div>
<div style="left:2782px;top:2px;width:2px;height:61px;background:#8f8f8f;"></div>
<svg style="position:absolute;left:2268px;top:16px;" width="34" height="32" viewBox="0 0 34 32"><rect x="2" y="2" width="20" height="20" fill="#000"/><rect x="4" y="5" width="16" height="2.5" fill="#fff"/><rect x="8" y="9" width="24" height="20" fill="#000" stroke="#ccc" stroke-width="0"/><rect x="10" y="12" width="18" height="2.5" fill="#fff"/></svg>
<svg style="position:absolute;left:2330px;top:20px;" width="36" height="26" viewBox="0 0 36 26"><rect x="9" y="2" width="25" height="20" fill="none" stroke="#000" stroke-width="2.5"/><path d="M11 7H32" stroke="#000" stroke-width="2.5"/><path d="M2 14H22M7 9L2 14L7 19" stroke="#000" stroke-width="2.5" fill="none"/></svg>
<div style="left:2398px;top:19px;width:32px;height:25px;border:2.5px solid #222;"></div>
<div style="left:2398px;top:24px;width:32px;height:2.5px;background:#222;"></div>
<div style="left:2448.0px;top:19.8px;font:normal 25px/1 'Liberation Sans',sans-serif;color:#000;white-space:pre;transform:scaleX(1.0691);transform-origin:0 0;">Operations at http://loc</div>
<svg style="position:absolute;left:2738px;top:21px;" width="24" height="24" viewBox="0 0 24 24"><path d="M2 2L22 22M22 2L2 22" stroke="#111" stroke-width="2.2"/></svg>
<svg style="position:absolute;left:2803px;top:18px;" width="28" height="28" viewBox="0 0 28 28"><path d="M14 1V27M1 14H27" stroke="#111" stroke-width="2.2"/></svg>
<svg style="position:absolute;left:2866px;top:24px;" width="30" height="18" viewBox="0 0 30 18"><path d="M2 3L15 15L28 3" stroke="#111" stroke-width="2.2" fill="none"/></svg>
<svg style="position:absolute;left:2279px;top:92px;" width="34" height="32" viewBox="0 0 34 32"><path d="M32 16H3M16 3L3 16L16 29" stroke="#000" stroke-width="2.4" fill="none"/></svg>
<svg style="position:absolute;left:2367px;top:92px;" width="34" height="32" viewBox="0 0 34 32"><path d="M2 16H31M18 3L31 16L18 29" stroke="#999" stroke-width="2.4" fill="none"/></svg>
<svg style="position:absolute;left:2455px;top:92px;" width="34" height="34" viewBox="0 0 34 34"><path d="M10 5A13 13 0 1 0 17 4" stroke="#000" stroke-width="2.4" fill="none"/><path d="M9 1V8H16" stroke="#000" stroke-width="2.4" fill="none"/></svg>
<svg style="position:absolute;left:2543px;top:92px;" width="36" height="34" viewBox="0 0 36 34"><path d="M3 17L18 3L33 17M8 13V31H15V21H21V31H28V13" stroke="#000" stroke-width="2.6" fill="none"/></svg>
<div style="left:2637px;top:75px;width:1478px;height:67px;background:#fff;border:2px solid #cfcfcf;"></div>
<svg style="position:absolute;left:2665px;top:94px;" width="28" height="28" viewBox="0 0 28 28"><circle cx="14" cy="14" r="12" fill="none" stroke="#777" stroke-width="2"/><path d="M14 11V21M14 7V9" stroke="#777" stroke-width="2.2"/></svg>
<div style="left:2717.0px;top:96.8px;font:normal 25px/1 'Liberation Sans',sans-serif;color:#000;white-space:pre;transform:scaleX(1.0337);transform-origin:0 0;">localhost</div>
<div style="left:2819.0px;top:96.8px;font:normal 25px/1 'Liberation Sans',sans-serif;color:#999;white-space:pre;transform:scaleX(0.9793);transform-origin:0 0;">:18700/help</div>
<svg style="position:absolute;left:3988px;top:92px;" width="36" height="34" viewBox="0 0 36 34"><path d="M3 5H14Q18 5 18 9V31Q18 27 14 27H3Z M33 5H22Q18 5 18 9V31Q18 27 22 27H33Z" stroke="#000" stroke-width="2.3" fill="none"/><path d="M6 5V27M30 5V27" stroke="#000" stroke-width="2"/></svg>
<svg style="position:absolute;left:4053px;top:90px;" width="36" height="36" viewBox="0 0 36 36"><path d="M18 2L22.5 13H34L25 20L28.5 32L18 25L7.5 32L11 20L2 13H13.5Z" stroke="#000" stroke-width="2.2" fill="none"/></svg>
<svg style="position:absolute;left:4173px;top:90px;" width="36" height="36" viewBox="0 0 36 36"><path d="M12 2L15 11H24L17 16L20 25L12 19L4 25L7 16L1 11H9Z" stroke="#000" stroke-width="2" fill="none"/><path d="M20 15H34M22 21H34M22 27H34" stroke="#000" stroke-width="2"/></svg>
<svg style="position:absolute;left:4260px;top:90px;" width="36" height="36" viewBox="0 0 36 36"><path d="M6 28L20 3L25 6L11 31L5 33Z" stroke="#000" stroke-width="2" fill="none"/><path d="M10 32Q18 26 22 31T34 31" stroke="#000" stroke-width="2" fill="none"/></svg>
<svg style="position:absolute;left:4347px;top:90px;" width="36" height="36" viewBox="0 0 36 36"><path d="M3 14V32H28V24" stroke="#000" stroke-width="2.2" fill="none"/><path d="M9 26Q12 12 26 12V6L34 14L26 22V16Q15 16 9 26Z" stroke="#000" stroke-width="2.2" fill="none"/></svg>
<svg style="position:absolute;left:4436px;top:104px;" width="34" height="8" viewBox="0 0 34 8"><circle cx="4" cy="4" r="2.4" fill="#000"/><circle cx="17" cy="4" r="2.4" fill="#000"/><circle cx="30" cy="4" r="2.4" fill="#000"/></svg>
<div style="left:4257px;top:31px;width:23px;height:2px;background:#111;"></div>
<div style="left:4349px;top:21px;width:22px;height:22px;border:2.2px solid #111;"></div>
<svg style="position:absolute;left:4440px;top:20px;" width="24" height="24" viewBox="0 0 24 24"><path d="M2 2L22 22M22 2L2 22" stroke="#111" stroke-width="2.2"/></svg>
<div style="left:4496px;top:153px;width:3px;height:1933px;background:#b8b8b8;"></div>
<div style="left:2272px;top:154px;width:2210px;height:111px;background:#003366;"></div>
<div style="left:2272px;top:265px;width:2210px;height:12px;background:#336699;"></div>
<div style="left:2332.0px;top:193.8px;font:normal 52px/1 'Liberation Sans',sans-serif;color:#fff;white-space:pre;transform:scaleX(1.0245);transform-origin:0 0;">Operations at http://localhost:18700/</div>
<div style="left:2312.0px;top:303.4px;font:normal 23px/1 'Liberation Sans',sans-serif;color:#000;white-space:pre;transform:scaleX(1.1053);transform-origin:0 0;">This page describes the service operations at this endpoint.</div>
<div style="left:2312px;top:349px;width:401px;height:31px;background:#cecf9c;"></div>
<div style="left:2717px;top:349px;width:98px;height:31px;background:#cecf9c;"></div>
<div style="left:2819px;top:349px;width:1659px;height:31px;background:#cecf9c;"></div>
<div style="left:2490.0px;top:353.4px;font:bold 23px/1 'Liberation Sans',sans-serif;color:#000;white-space:pre;transform:scaleX(1.4396);transform-origin:0 0;">Uri</div>
<div style="left:2720.0px;top:353.4px;font:bold 23px/1 'Liberation Sans',sans-serif;color:#000;white-space:pre;transform:scaleX(1.1254);transform-origin:0 0;">Method</div>
<div style="left:3577.0px;top:353.4px;font:bold 23px/1 'Liberation Sans',sans-serif;color:#000;white-space:pre;transform:scaleX(1.1223);transform-origin:0 0;">Description</div>
<div style="left:2312px;top:384px;width:401px;height:31px;background:#e5e5cc;"></div>
<div style="left:2717px;top:384px;width:98px;height:31px;background:#e5e5cc;"></div>
<div style="left:2819px;top:384px;width:1659px;height:31px;background:#e5e5cc;"></div>
<div style="left:2315.0px;top:389.4px;font:normal 23px/1 'Liberation Sans',sans-serif;color:#000;white-space:pre;transform:scaleX(1.0600);transform-origin:0 0;">SKSS_CanFocus</div>
<div style="left:2719.0px;top:389.4px;font:bold 23px/1 'Liberation Sans',sans-serif;color:#6b9bd0;white-space:pre;transform:scaleX(1.0364);transform-origin:0 0;text-decoration:underline;">GET</div>
<div style="left:2821.0px;top:389.4px;font:normal 23px/1 'Liberation Sans',sans-serif;color:#000;white-space:pre;transform:scaleX(1.1130);transform-origin:0 0;">Service at http://localhost:18700/SKSS_CanFocus</div>
<div style="left:2312px;top:419px;width:401px;height:31px;background:#e5e5cc;"></div>
<div style="left:2717px;top:419px;width:98px;height:31px;background:#e5e5cc;"></div>
<div style="left:2819px;top:419px;width:1659px;height:31px;background:#e5e5cc;"></div>
<div style="left:2315.0px;top:424.4px;font:normal 23px/1 'Liberation Sans',sans-serif;color:#000;white-space:pre;transform:scaleX(1.0600);transform-origin:0 0;">SKSS_CanGuide</div>
<div style="left:2719.0px;top:424.4px;font:bold 23px/1 'Liberation Sans',sans-serif;color:#336699;white-space:pre;transform:scaleX(1.0364);transform-origin:0 0;text-decoration:underline;">GET</div>
<div style="left:2821.0px;top:424.4px;font:normal 23px/1 'Liberation Sans',sans-serif;color:#000;white-space:pre;transform:scaleX(1.1130);transform-origin:0 0;">Service at http://localhost:18700/SKSS_CanGuide</div>
<div style="left:2312px;top:455px;width:401px;height:31px;background:#e5e5cc;"></div>
<div style="left:2717px;top:455px;width:98px;height:31px;background:#e5e5cc;"></div>
<div style="left:2819px;top:455px;width:1659px;height:31px;background:#e5e5cc;"></div>
<div style="left:2315.0px;top:460.4px;font:normal 23px/1 'Liberation Sans',sans-serif;color:#000;white-space:pre;transform:scaleX(1.0600);transform-origin:0 0;">SKSS_ConnectCamera</div>
<div style="left:2719.0px;top:460.4px;font:bold 23px/1 'Liberation Sans',sans-serif;color:#336699;white-space:pre;transform:scaleX(1.0364);transform-origin:0 0;text-decoration:underline;">GET</div>
<div style="left:2821.0px;top:460.4px;font:normal 23px/1 'Liberation Sans',sans-serif;color:#000;white-space:pre;transform:scaleX(1.1130);transform-origin:0 0;">Service at http://localhost:18700/SKSS_ConnectCamera</div>
<div style="left:2312px;top:490px;width:401px;height:31px;background:#e5e5cc;"></div>
<div style="left:2717px;top:490px;width:98px;height:31px;background:#e5e5cc;"></div>
<div style="left:2819px;top:490px;width:1659px;height:31px;background:#e5e5cc;"></div>
<div style="left:2315.0px;top:495.4px;font:normal 23px/1 'Liberation Sans',sans-serif;color:#000;white-space:pre;transform:scaleX(1.0600);transform-origin:0 0;">SKSS_ConnectFocuser</div>
<div style="left:2719.0px;top:495.4px;font:bold 23px/1 'Liberation Sans',sans-serif;color:#336699;white-space:pre;transform:scaleX(1.0364);transform-origin:0 0;text-decoration:underline;">GET</div>
<div style="left:2821.0px;top:495.4px;font:normal 23px/1 'Liberation Sans',sans-serif;color:#000;white-space:pre;transform:scaleX(1.1130);transform-origin:0 0;">Service at http://localhost:18700/SKSS_ConnectFocuser</div>
<div style="left:2312px;top:525px;width:401px;height:31px;background:#e5e5cc;"></div>
<div style="left:2717px;top:525px;width:98px;height:31px;background:#e5e5cc;"></div>
<div style="left:2819px;top:525px;width:1659px;height:31px;background:#e5e5cc;"></div>
<div style="left:2315.0px;top:530.5px;font:normal 23px/1 'Liberation Sans',sans-serif;color:#000;white-space:pre;transform:scaleX(1.0600);transform-origin:0 0;">SKSS_DisconnectCamera</div>
<div style="left:2719.0px;top:530.5px;font:bold 23px/1 'Liberation Sans',sans-serif;color:#336699;white-space:pre;transform:scaleX(1.0364);transform-origin:0 0;text-decoration:underline;">GET</div>
<div style="left:2821.0px;top:530.5px;font:normal 23px/1 'Liberation Sans',sans-serif;color:#000;white-space:pre;transform:scaleX(1.1130);transform-origin:0 0;">Service at http://localhost:18700/SKSS_DisconnectCamera</div>
<div style="left:2312px;top:560px;width:401px;height:31px;background:#e5e5cc;"></div>
<div style="left:2717px;top:560px;width:98px;height:31px;background:#e5e5cc;"></div>
<div style="left:2819px;top:560px;width:1659px;height:31px;background:#e5e5cc;"></div>
<div style="left:2315.0px;top:565.5px;font:normal 23px/1 'Liberation Sans',sans-serif;color:#000;white-space:pre;transform:scaleX(1.0600);transform-origin:0 0;">SKSS_DisconnectFocuser</div>
<div style="left:2719.0px;top:565.5px;font:bold 23px/1 'Liberation Sans',sans-serif;color:#336699;white-space:pre;transform:scaleX(1.0364);transform-origin:0 0;text-decoration:underline;">GET</div>
<div style="left:2821.0px;top:565.5px;font:normal 23px/1 'Liberation Sans',sans-serif;color:#000;white-space:pre;transform:scaleX(1.1130);transform-origin:0 0;">Service at http://localhost:18700/SKSS_DisconnectFocuser</div>
<div style="left:2312px;top:596px;width:401px;height:31px;background:#e5e5cc;"></div>
<div style="left:2717px;top:596px;width:98px;height:31px;background:#e5e5cc;"></div>
<div style="left:2819px;top:596px;width:1659px;height:31px;background:#e5e5cc;"></div>
<div style="left:2315.0px;top:601.5px;font:normal 23px/1 'Liberation Sans',sans-serif;color:#000;white-space:pre;transform:scaleX(1.0600);transform-origin:0 0;">SKSS_IsAbsoluteFocuser</div>
<div style="left:2719.0px;top:601.5px;font:bold 23px/1 'Liberation Sans',sans-serif;color:#336699;white-space:pre;transform:scaleX(1.0364);transform-origin:0 0;text-decoration:underline;">GET</div>
<div style="left:2821.0px;top:601.5px;font:normal 23px/1 'Liberation Sans',sans-serif;color:#000;white-space:pre;transform:scaleX(1.1130);transform-origin:0 0;">Service at http://localhost:18700/SKSS_IsAbsoluteFocuser</div>
<div style="left:2312px;top:631px;width:401px;height:31px;background:#e5e5cc;"></div>
<div style="left:2717px;top:631px;width:98px;height:31px;background:#e5e5cc;"></div>
<div style="left:2819px;top:631px;width:1659px;height:31px;background:#e5e5cc;"></div>
<div style="left:2315.0px;top:636.5px;font:normal 23px/1 'Liberation Sans',sans-serif;color:#000;white-space:pre;transform:scaleX(1.0600);transform-origin:0 0;">SKSS_IsRelativeFocuser</div>
<div style="left:2719.0px;top:636.5px;font:bold 23px/1 'Liberation Sans',sans-serif;color:#336699;white-space:pre;transform:scaleX(1.0364);transform-origin:0 0;text-decoration:underline;">GET</div>
<div style="left:2821.0px;top:636.5px;font:normal 23px/1 'Liberation Sans',sans-serif;color:#000;white-space:pre;transform:scaleX(1.1130);transform-origin:0 0;">Service at http://localhost:18700/SKSS_IsRelativeFocuser</div>
<div style="left:2312px;top:666px;width:401px;height:31px;background:#e5e5cc;"></div>
<div style="left:2717px;top:666px;width:98px;height:31px;background:#e5e5cc;"></div>
<div style="left:2819px;top:666px;width:1659px;height:31px;background:#e5e5cc;"></div>
<div style="left:2315.0px;top:671.5px;font:normal 23px/1 'Liberation Sans',sans-serif;color:#000;white-space:pre;transform:scaleX(1.0600);transform-origin:0 0;">SKSS_MoveFocuserInward</div>
<div style="left:2719.0px;top:671.5px;font:bold 23px/1 'Liberation Sans',sans-serif;color:#336699;white-space:pre;transform:scaleX(1.0364);transform-origin:0 0;text-decoration:underline;">GET</div>
<div style="left:2821.0px;top:671.5px;font:normal 23px/1 'Liberation Sans',sans-serif;color:#000;white-space:pre;transform:scaleX(1.1130);transform-origin:0 0;">Service at http://localhost:18700/SKSS_MoveFocuserInward?steps={STEPS}</div>
<div style="left:2312px;top:701px;width:401px;height:31px;background:#e5e5cc;"></div>
<div style="left:2717px;top:701px;width:98px;height:31px;background:#e5e5cc;"></div>
<div style="left:2819px;top:701px;width:1659px;height:31px;background:#e5e5cc;"></div>
<div style="left:2315.0px;top:706.5px;font:normal 23px/1 'Liberation Sans',sans-serif;color:#000;white-space:pre;transform:scaleX(1.0600);transform-origin:0 0;">SKSS_MoveFocuserOutward</div>
<div style="left:2719.0px;top:706.5px;font:bold 23px/1 'Liberation Sans',sans-serif;color:#336699;white-space:pre;transform:scaleX(1.0364);transform-origin:0 0;text-decoration:underline;">GET</div>
<div style="left:2821.0px;top:706.5px;font:normal 23px/1 'Liberation Sans',sans-serif;color:#000;white-space:pre;transform:scaleX(1.1130);transform-origin:0 0;">Service at http://localhost:18700/SKSS_MoveFocuserOutward?steps={STEPS}</div>
<div style="left:2312px;top:736px;width:401px;height:31px;background:#e5e5cc;"></div>
<div style="left:2717px;top:736px;width:98px;height:31px;background:#e5e5cc;"></div>
<div style="left:2819px;top:736px;width:1659px;height:31px;background:#e5e5cc;"></div>
<div style="left:2315.0px;top:741.5px;font:normal 23px/1 'Liberation Sans',sans-serif;color:#000;white-space:pre;transform:scaleX(1.0600);transform-origin:0 0;">SKSS_MoveFocuserToPosition</div>
<div style="left:2719.0px;top:741.5px;font:bold 23px/1 'Liberation Sans',sans-serif;color:#336699;white-space:pre;transform:scaleX(1.0364);transform-origin:0 0;text-decoration:underline;">GET</div>
<div style="left:2821.0px;top:741.5px;font:normal 23px/1 'Liberation Sans',sans-serif;color:#000;white-space:pre;transform:scaleX(1.1130);transform-origin:0 0;">Service at http://localhost:18700/SKSS_MoveFocuserToPosition?steps={STEPS}</div>
<div style="left:2312px;top:772px;width:401px;height:31px;background:#e5e5cc;"></div>
<div style="left:2717px;top:772px;width:98px;height:31px;background:#e5e5cc;"></div>
<div style="left:2819px;top:772px;width:1659px;height:31px;background:#e5e5cc;"></div>
<div style="left:2315.0px;top:777.5px;font:normal 23px/1 'Liberation Sans',sans-serif;color:#000;white-space:pre;transform:scaleX(1.0600);transform-origin:0 0;">SKSS_MoveGuiderMinusX</div>
<div style="left:2719.0px;top:777.5px;font:bold 23px/1 'Liberation Sans',sans-serif;color:#336699;white-space:pre;transform:scaleX(1.0364);transform-origin:0 0;text-decoration:underline;">GET</div>
<div style="left:2821.0px;top:777.5px;font:normal 23px/1 'Liberation Sans',sans-serif;color:#000;white-space:pre;transform:scaleX(1.1130);transform-origin:0 0;">Service at http://localhost:18700/SKSS_MoveGuiderMinusX?duration={DURATION}&amp;calibrated={CALIBRATED}</div>
<div style="left:2312px;top:807px;width:401px;height:31px;background:#e5e5cc;"></div>
<div style="left:2717px;top:807px;width:98px;height:31px;background:#e5e5cc;"></div>
<div style="left:2819px;top:807px;width:1659px;height:31px;background:#e5e5cc;"></div>
<div style="left:2315.0px;top:812.5px;font:normal 23px/1 'Liberation Sans',sans-serif;color:#000;white-space:pre;transform:scaleX(1.0600);transform-origin:0 0;">SKSS_MoveGuiderMinusY</div>
<div style="left:2719.0px;top:812.5px;font:bold 23px/1 'Liberation Sans',sans-serif;color:#336699;white-space:pre;transform:scaleX(1.0364);transform-origin:0 0;text-decoration:underline;">GET</div>
<div style="left:2821.0px;top:812.5px;font:normal 23px/1 'Liberation Sans',sans-serif;color:#000;white-space:pre;transform:scaleX(1.1130);transform-origin:0 0;">Service at http://localhost:18700/SKSS_MoveGuiderMinusY?duration={DURATION}&amp;calibrated={CALIBRATED}</div>
<div style="left:2312px;top:842px;width:401px;height:31px;background:#e5e5cc;"></div>
<div style="left:2717px;top:842px;width:98px;height:31px;background:#e5e5cc;"></div>
<div style="left:2819px;top:842px;width:1659px;height:31px;background:#e5e5cc;"></div>
<div style="left:2315.0px;top:847.5px;font:normal 23px/1 'Liberation Sans',sans-serif;color:#000;white-space:pre;transform:scaleX(1.0600);transform-origin:0 0;">SKSS_MoveGuiderPlusX</div>
<div style="left:2719.0px;top:847.5px;font:bold 23px/1 'Liberation Sans',sans-serif;color:#336699;white-space:pre;transform:scaleX(1.0364);transform-origin:0 0;text-decoration:underline;">GET</div>
<div style="left:2821.0px;top:847.5px;font:normal 23px/1 'Liberation Sans',sans-serif;color:#000;white-space:pre;transform:scaleX(1.1130);transform-origin:0 0;">Service at http://localhost:18700/SKSS_MoveGuiderPlusX?duration={DURATION}&amp;calibrated={CALIBRATED}</div>
<div style="left:2312px;top:877px;width:401px;height:31px;background:#e5e5cc;"></div>
<div style="left:2717px;top:877px;width:98px;height:31px;background:#e5e5cc;"></div>
<div style="left:2819px;top:877px;width:1659px;height:31px;background:#e5e5cc;"></div>
<div style="left:2315.0px;top:882.5px;font:normal 23px/1 'Liberation Sans',sans-serif;color:#000;white-space:pre;transform:scaleX(1.0600);transform-origin:0 0;">SKSS_MoveGuiderPlusY</div>
<div style="left:2719.0px;top:882.5px;font:bold 23px/1 'Liberation Sans',sans-serif;color:#336699;white-space:pre;transform:scaleX(1.0364);transform-origin:0 0;text-decoration:underline;">GET</div>
<div style="left:2821.0px;top:882.5px;font:normal 23px/1 'Liberation Sans',sans-serif;color:#000;white-space:pre;transform:scaleX(1.1130);transform-origin:0 0;">Service at http://localhost:18700/SKSS_MoveGuiderPlusY?duration={DURATION}&amp;calibrated={CALIBRATED}</div>
<div style="left:2312px;top:912px;width:401px;height:32px;background:#e5e5cc;"></div>
<div style="left:2717px;top:912px;width:98px;height:32px;background:#e5e5cc;"></div>
<div style="left:2819px;top:912px;width:1659px;height:32px;background:#e5e5cc;"></div>
<div style="left:2315.0px;top:918.0px;font:normal 23px/1 'Liberation Sans',sans-serif;color:#000;white-space:pre;transform:scaleX(1.0600);transform-origin:0 0;">SKSS_PauseFocusing</div>
<div style="left:2719.0px;top:918.0px;font:bold 23px/1 'Liberation Sans',sans-serif;color:#336699;white-space:pre;transform:scaleX(1.0364);transform-origin:0 0;text-decoration:underline;">GET</div>
<div style="left:2821.0px;top:918.0px;font:normal 23px/1 'Liberation Sans',sans-serif;color:#000;white-space:pre;transform:scaleX(1.1130);transform-origin:0 0;">Service at http://localhost:18700/SKSS_PauseFocusing</div>
<div style="left:2312px;top:948px;width:401px;height:31px;background:#e5e5cc;"></div>
<div style="left:2717px;top:948px;width:98px;height:31px;background:#e5e5cc;"></div>
<div style="left:2819px;top:948px;width:1659px;height:31px;background:#e5e5cc;"></div>
<div style="left:2315.0px;top:953.5px;font:normal 23px/1 'Liberation Sans',sans-serif;color:#000;white-space:pre;transform:scaleX(1.0600);transform-origin:0 0;">SKSS_PauseGuiding</div>
<div style="left:2719.0px;top:953.5px;font:bold 23px/1 'Liberation Sans',sans-serif;color:#336699;white-space:pre;transform:scaleX(1.0364);transform-origin:0 0;text-decoration:underline;">GET</div>
<div style="left:2821.0px;top:953.5px;font:normal 23px/1 'Liberation Sans',sans-serif;color:#000;white-space:pre;transform:scaleX(1.1130);transform-origin:0 0;">Service at http://localhost:18700/SKSS_PauseGuiding</div>
<div style="left:2312px;top:983px;width:401px;height:31px;background:#e5e5cc;"></div>
<div style="left:2717px;top:983px;width:98px;height:31px;background:#e5e5cc;"></div>
<div style="left:2819px;top:983px;width:1659px;height:31px;background:#e5e5cc;"></div>
<div style="left:2315.0px;top:988.5px;font:normal 23px/1 'Liberation Sans',sans-serif;color:#000;white-space:pre;transform:scaleX(1.0600);transform-origin:0 0;">SKSS_RegisterCallbackURI</div>
<div style="left:2719.0px;top:988.5px;font:bold 23px/1 'Liberation Sans',sans-serif;color:#6b9bd0;white-space:pre;transform:scaleX(1.0364);transform-origin:0 0;text-decoration:underline;">GET</div>
<div style="left:2821.0px;top:988.5px;font:normal 23px/1 'Liberation Sans',sans-serif;color:#000;white-space:pre;transform:scaleX(1.1130);transform-origin:0 0;">Service at http://localhost:18700/SKSS_RegisterCallbackURI?uri={URI}</div>
<div style="left:2312px;top:1018px;width:401px;height:31px;background:#e5e5cc;"></div>
<div style="left:2717px;top:1018px;width:98px;height:31px;background:#e5e5cc;"></div>
<div style="left:2819px;top:1018px;width:1659px;height:31px;background:#e5e5cc;"></div>
<div style="left:2315.0px;top:1023.5px;font:normal 23px/1 'Liberation Sans',sans-serif;color:#000;white-space:pre;transform:scaleX(1.0600);transform-origin:0 0;">SKSS_ResetFocuserPosition</div>
<div style="left:2719.0px;top:1023.5px;font:bold 23px/1 'Liberation Sans',sans-serif;color:#336699;white-space:pre;transform:scaleX(1.0364);transform-origin:0 0;text-decoration:underline;">GET</div>
<div style="left:2821.0px;top:1023.5px;font:normal 23px/1 'Liberation Sans',sans-serif;color:#000;white-space:pre;transform:scaleX(1.1130);transform-origin:0 0;">Service at http://localhost:18700/SKSS_ResetFocuserPosition</div>
<div style="left:2312px;top:1053px;width:401px;height:31px;background:#e5e5cc;"></div>
<div style="left:2717px;top:1053px;width:98px;height:31px;background:#e5e5cc;"></div>
<div style="left:2819px;top:1053px;width:1659px;height:31px;background:#e5e5cc;"></div>
<div style="left:2315.0px;top:1058.5px;font:normal 23px/1 'Liberation Sans',sans-serif;color:#000;white-space:pre;transform:scaleX(1.0600);transform-origin:0 0;">SKSS_ResumeMoveFocuser</div>
<div style="left:2719.0px;top:1058.5px;font:bold 23px/1 'Liberation Sans',sans-serif;color:#336699;white-space:pre;transform:scaleX(1.0364);transform-origin:0 0;text-decoration:underline;">GET</div>
<div style="left:2821.0px;top:1058.5px;font:normal 23px/1 'Liberation Sans',sans-serif;color:#000;white-space:pre;transform:scaleX(1.1130);transform-origin:0 0;">Service at http://localhost:18700/SKSS_ResumeMoveFocuser</div>
<div style="left:2312px;top:1089px;width:401px;height:31px;background:#e5e5cc;"></div>
<div style="left:2717px;top:1089px;width:98px;height:31px;background:#e5e5cc;"></div>
<div style="left:2819px;top:1089px;width:1659px;height:31px;background:#e5e5cc;"></div>
<div style="left:2315.0px;top:1094.5px;font:normal 23px/1 'Liberation Sans',sans-serif;color:#000;white-space:pre;transform:scaleX(1.0600);transform-origin:0 0;">SKSS_ResumeMoveGuider</div>
<div style="left:2719.0px;top:1094.5px;font:bold 23px/1 'Liberation Sans',sans-serif;color:#336699;white-space:pre;transform:scaleX(1.0364);transform-origin:0 0;text-decoration:underline;">GET</div>
<div style="left:2821.0px;top:1094.5px;font:normal 23px/1 'Liberation Sans',sans-serif;color:#000;white-space:pre;transform:scaleX(1.1130);transform-origin:0 0;">Service at http://localhost:18700/SKSS_ResumeMoveGuider</div>
<div style="left:2312px;top:1124px;width:401px;height:31px;background:#e5e5cc;"></div>
<div style="left:2717px;top:1124px;width:98px;height:31px;background:#e5e5cc;"></div>
<div style="left:2819px;top:1124px;width:1659px;height:31px;background:#e5e5cc;"></div>
<div style="left:2315.0px;top:1129.5px;font:normal 23px/1 'Liberation Sans',sans-serif;color:#000;white-space:pre;transform:scaleX(1.0600);transform-origin:0 0;">SKSS_SetGuiderReferenceFrame</div>
<div style="left:2719.0px;top:1129.5px;font:bold 23px/1 'Liberation Sans',sans-serif;color:#336699;white-space:pre;transform:scaleX(1.0364);transform-origin:0 0;text-decoration:underline;">GET</div>
<div style="left:2821.0px;top:1129.5px;font:normal 23px/1 'Liberation Sans',sans-serif;color:#000;white-space:pre;transform:scaleX(1.1130);transform-origin:0 0;">Service at http://localhost:18700/SKSS_SetGuiderReferenceFrame</div>
<div style="left:2312px;top:1159px;width:401px;height:31px;background:#e5e5cc;"></div>
<div style="left:2717px;top:1159px;width:98px;height:31px;background:#e5e5cc;"></div>
<div style="left:2819px;top:1159px;width:1659px;height:31px;background:#e5e5cc;"></div>
<div style="left:2315.0px;top:1164.5px;font:normal 23px/1 'Liberation Sans',sans-serif;color:#000;white-space:pre;transform:scaleX(1.0600);transform-origin:0 0;">SKSS_Shutdown</div>
<div style="left:2719.0px;top:1164.5px;font:bold 23px/1 'Liberation Sans',sans-serif;color:#336699;white-space:pre;transform:scaleX(1.0364);transform-origin:0 0;text-decoration:underline;">GET</div>
<div style="left:2821.0px;top:1164.5px;font:normal 23px/1 'Liberation Sans',sans-serif;color:#000;white-space:pre;transform:scaleX(1.1130);transform-origin:0 0;">Service at http://localhost:18700/SKSS_Shutdown</div>
<div style="left:2312px;top:1194px;width:401px;height:57px;background:#e5e5cc;"></div>
<div style="left:2717px;top:1194px;width:98px;height:57px;background:#e5e5cc;"></div>
<div style="left:2819px;top:1194px;width:1659px;height:57px;background:#e5e5cc;"></div>
<div style="left:2315.0px;top:1212.5px;font:normal 23px/1 'Liberation Sans',sans-serif;color:#000;white-space:pre;transform:scaleX(1.0600);transform-origin:0 0;">SKSS_StartFocuserCalibration</div>
<div style="left:2719.0px;top:1212.5px;font:bold 23px/1 'Liberation Sans',sans-serif;color:#336699;white-space:pre;transform:scaleX(1.0364);transform-origin:0 0;text-decoration:underline;">GET</div>
<div style="left:2821.0px;top:1199.0px;font:normal 23px/1 'Liberation Sans',sans-serif;color:#000;white-space:pre;transform:scaleX(1.0740);transform-origin:0 0;">Service at http://localhost:18700/SKSS_StartFocuserCalibration?autoRestoreFocuserPosition={AUTORESTOREFOCUSERPOSITION}</div>
<div style="left:2821.0px;top:1226.0px;font:normal 23px/1 'Liberation Sans',sans-serif;color:#000;white-space:pre;transform:scaleX(1.0740);transform-origin:0 0;">&amp;useInitialARNDAnyway={USEINITIALARNDANYWAY}&amp;allowAbnormalCalibration={ALLOWABNORMALCALIBRATION}</div>
<div style="left:2312px;top:1255px;width:401px;height:31px;background:#e5e5cc;"></div>
<div style="left:2717px;top:1255px;width:98px;height:31px;background:#e5e5cc;"></div>
<div style="left:2819px;top:1255px;width:1659px;height:31px;background:#e5e5cc;"></div>
<div style="left:2315.0px;top:1260.5px;font:normal 23px/1 'Liberation Sans',sans-serif;color:#000;white-space:pre;transform:scaleX(1.0600);transform-origin:0 0;">SKSS_StartFocusing</div>
<div style="left:2719.0px;top:1260.5px;font:bold 23px/1 'Liberation Sans',sans-serif;color:#336699;white-space:pre;transform:scaleX(1.0364);transform-origin:0 0;text-decoration:underline;">GET</div>
<div style="left:2821.0px;top:1260.5px;font:normal 23px/1 'Liberation Sans',sans-serif;color:#000;white-space:pre;transform:scaleX(1.1130);transform-origin:0 0;">Service at http://localhost:18700/SKSS_StartFocusing</div>
<div style="left:2312px;top:1291px;width:401px;height:31px;background:#e5e5cc;"></div>
<div style="left:2717px;top:1291px;width:98px;height:31px;background:#e5e5cc;"></div>
<div style="left:2819px;top:1291px;width:1659px;height:31px;background:#e5e5cc;"></div>
<div style="left:2315.0px;top:1296.5px;font:normal 23px/1 'Liberation Sans',sans-serif;color:#000;white-space:pre;transform:scaleX(1.0600);transform-origin:0 0;">SKSS_StartGuiderCalibration</div>
<div style="left:2719.0px;top:1296.5px;font:bold 23px/1 'Liberation Sans',sans-serif;color:#6b9bd0;white-space:pre;transform:scaleX(1.0364);transform-origin:0 0;text-decoration:underline;">GET</div>
<div style="left:2821.0px;top:1296.5px;font:normal 23px/1 'Liberation Sans',sans-serif;color:#000;white-space:pre;transform:scaleX(1.1130);transform-origin:0 0;">Service at http://localhost:18700/SKSS_StartGuiderCalibration?useCalibrationAngleAnyway={USECALIBRATIONANGLEANYWAY}</div>
<div style="left:2312px;top:1326px;width:401px;height:31px;background:#e5e5cc;"></div>
<div style="left:2717px;top:1326px;width:98px;height:31px;background:#e5e5cc;"></div>
<div style="left:2819px;top:1326px;width:1659px;height:31px;background:#e5e5cc;"></div>
<div style="left:2315.0px;top:1331.5px;font:normal 23px/1 'Liberation Sans',sans-serif;color:#000;white-space:pre;transform:scaleX(1.0600);transform-origin:0 0;">SKSS_StartGuiderCameraExposure</div>
<div style="left:2719.0px;top:1331.5px;font:bold 23px/1 'Liberation Sans',sans-serif;color:#336699;white-space:pre;transform:scaleX(1.0364);transform-origin:0 0;text-decoration:underline;">GET</div>
<div style="left:2821.0px;top:1331.5px;font:normal 23px/1 'Liberation Sans',sans-serif;color:#000;white-space:pre;transform:scaleX(1.1130);transform-origin:0 0;">Service at http://localhost:18700/SKSS_StartGuiderCameraExposure?duration={DURATION}</div>
<div style="left:2312px;top:1361px;width:401px;height:31px;background:#e5e5cc;"></div>
<div style="left:2717px;top:1361px;width:98px;height:31px;background:#e5e5cc;"></div>
<div style="left:2819px;top:1361px;width:1659px;height:31px;background:#e5e5cc;"></div>
<div style="left:2315.0px;top:1366.5px;font:normal 23px/1 'Liberation Sans',sans-serif;color:#000;white-space:pre;transform:scaleX(1.0600);transform-origin:0 0;">SKSS_StartGuiding</div>
<div style="left:2719.0px;top:1366.5px;font:bold 23px/1 'Liberation Sans',sans-serif;color:#336699;white-space:pre;transform:scaleX(1.0364);transform-origin:0 0;text-decoration:underline;">GET</div>
<div style="left:2821.0px;top:1366.5px;font:normal 23px/1 'Liberation Sans',sans-serif;color:#000;white-space:pre;transform:scaleX(1.1130);transform-origin:0 0;">Service at http://localhost:18700/SKSS_StartGuiding</div>
<div style="left:2312px;top:1396px;width:401px;height:31px;background:#e5e5cc;"></div>
<div style="left:2717px;top:1396px;width:98px;height:31px;background:#e5e5cc;"></div>
<div style="left:2819px;top:1396px;width:1659px;height:31px;background:#e5e5cc;"></div>
<div style="left:2315.0px;top:1401.5px;font:normal 23px/1 'Liberation Sans',sans-serif;color:#000;white-space:pre;transform:scaleX(1.0600);transform-origin:0 0;">SKSS_StopFocusing</div>
<div style="left:2719.0px;top:1401.5px;font:bold 23px/1 'Liberation Sans',sans-serif;color:#336699;white-space:pre;transform:scaleX(1.0364);transform-origin:0 0;text-decoration:underline;">GET</div>
<div style="left:2821.0px;top:1401.5px;font:normal 23px/1 'Liberation Sans',sans-serif;color:#000;white-space:pre;transform:scaleX(1.1130);transform-origin:0 0;">Service at http://localhost:18700/SKSS_StopFocusing</div>
<div style="left:2312px;top:1432px;width:401px;height:31px;background:#e5e5cc;"></div>
<div style="left:2717px;top:1432px;width:98px;height:31px;background:#e5e5cc;"></div>
<div style="left:2819px;top:1432px;width:1659px;height:31px;background:#e5e5cc;"></div>
<div style="left:2315.0px;top:1437.5px;font:normal 23px/1 'Liberation Sans',sans-serif;color:#000;white-space:pre;transform:scaleX(1.0600);transform-origin:0 0;">SKSS_StopGuiding</div>
<div style="left:2719.0px;top:1437.5px;font:bold 23px/1 'Liberation Sans',sans-serif;color:#336699;white-space:pre;transform:scaleX(1.0364);transform-origin:0 0;text-decoration:underline;">GET</div>
<div style="left:2821.0px;top:1437.5px;font:normal 23px/1 'Liberation Sans',sans-serif;color:#000;white-space:pre;transform:scaleX(1.1130);transform-origin:0 0;">Service at http://localhost:18700/SKSS_StopGuiding</div>
<div style="left:2312px;top:1467px;width:401px;height:31px;background:#e5e5cc;"></div>
<div style="left:2717px;top:1467px;width:98px;height:31px;background:#e5e5cc;"></div>
<div style="left:2819px;top:1467px;width:1659px;height:31px;background:#e5e5cc;"></div>
<div style="left:2315.0px;top:1472.5px;font:normal 23px/1 'Liberation Sans',sans-serif;color:#000;white-space:pre;transform:scaleX(1.0600);transform-origin:0 0;">SKSS_SuspendMoveFocuser</div>
<div style="left:2719.0px;top:1472.5px;font:bold 23px/1 'Liberation Sans',sans-serif;color:#336699;white-space:pre;transform:scaleX(1.0364);transform-origin:0 0;text-decoration:underline;">GET</div>
<div style="left:2821.0px;top:1472.5px;font:normal 23px/1 'Liberation Sans',sans-serif;color:#000;white-space:pre;transform:scaleX(1.1130);transform-origin:0 0;">Service at http://localhost:18700/SKSS_SuspendMoveFocuser</div>
<div style="left:2312px;top:1502px;width:401px;height:31px;background:#e5e5cc;"></div>
<div style="left:2717px;top:1502px;width:98px;height:31px;background:#e5e5cc;"></div>
<div style="left:2819px;top:1502px;width:1659px;height:31px;background:#e5e5cc;"></div>
<div style="left:2315.0px;top:1507.5px;font:normal 23px/1 'Liberation Sans',sans-serif;color:#000;white-space:pre;transform:scaleX(1.0600);transform-origin:0 0;">SKSS_SuspendMoveGuider</div>
<div style="left:2719.0px;top:1507.5px;font:bold 23px/1 'Liberation Sans',sans-serif;color:#336699;white-space:pre;transform:scaleX(1.0364);transform-origin:0 0;text-decoration:underline;">GET</div>
<div style="left:2821.0px;top:1507.5px;font:normal 23px/1 'Liberation Sans',sans-serif;color:#000;white-space:pre;transform:scaleX(1.1130);transform-origin:0 0;">Service at http://localhost:18700/SKSS_SuspendMoveGuider</div>
<div style="left:2312px;top:1537px;width:401px;height:31px;background:#e5e5cc;"></div>
<div style="left:2717px;top:1537px;width:98px;height:31px;background:#e5e5cc;"></div>
<div style="left:2819px;top:1537px;width:1659px;height:31px;background:#e5e5cc;"></div>
<div style="left:2315.0px;top:1542.5px;font:normal 23px/1 'Liberation Sans',sans-serif;color:#000;white-space:pre;transform:scaleX(1.0600);transform-origin:0 0;">SKSS_UnregisterCallbackURI</div>
<div style="left:2719.0px;top:1542.5px;font:bold 23px/1 'Liberation Sans',sans-serif;color:#336699;white-space:pre;transform:scaleX(1.0364);transform-origin:0 0;text-decoration:underline;">GET</div>
<div style="left:2821.0px;top:1542.5px;font:normal 23px/1 'Liberation Sans',sans-serif;color:#000;white-space:pre;transform:scaleX(1.1130);transform-origin:0 0;">Service at http://localhost:18700/SKSS_UnregisterCallbackURI?uri={URI}</div>
<div style="left:0px;top:2084px;width:2250px;height:916px;background:#120d12;"></div>
<div style="left:0px;top:2084px;width:2250px;height:7px;background:linear-gradient(90deg,#2a1518,#3a2025 30%,#251518 60%,#3a1a1a);"></div>
<div style="left:0;top:2084px;width:2250px;height:6px;overflow:hidden"><div style="left:18.0px;top:-5.2px;font:normal 25px/1 'Liberation Sans',sans-serif;color:#d8d8d8;white-space:pre;transform:scaleX(0.9500);transform-origin:0 0;">Invocatio... 18D52080 1... Actions fo... ViewAuditi...</div></div>
<div style="left:0px;top:2930px;width:12px;height:70px;background:#000;"></div>
<div style="left:2.0px;top:2106.8px;font:normal 25px/1 'Liberation Sans',sans-serif;color:#ddd;white-space:pre;transform:scaleX(0.9100);transform-origin:0 0;">P</div>
<div style="left:2.0px;top:2268.8px;font:normal 25px/1 'Liberation Sans',sans-serif;color:#aaa;white-space:pre;transform:scaleX(0.9100);transform-origin:0 0;">C</div>
<div style="left:2.0px;top:2458.8px;font:normal 25px/1 'Liberation Sans',sans-serif;color:#ddd;white-space:pre;transform:scaleX(0.9100);transform-origin:0 0;">1</div>
<div style="left:12px;top:2090px;width:2238px;height:910px;background:#f0f0f0;"></div>
<div style="left:12px;top:2090px;width:2238px;height:56px;background:#ffffff;"></div>
<svg style="position:absolute;left:26px;top:2102px;" width="34" height="30" viewBox="0 0 34 30"><path d="M6 2H33L27 23H1Z" fill="#2a8fd6"/><path d="M8 7L15 12L7 17" stroke="#fff" stroke-width="2.5" fill="none"/><path d="M15 18H22" stroke="#fff" stroke-width="2"/><path d="M1 23H27L26 29H0Z" fill="#8aa"/></svg>
<div style="left:63.0px;top:2105.8px;font:normal 25px/1 'Liberation Sans',sans-serif;color:#999;white-space:pre;transform:scaleX(0.9112);transform-origin:0 0;">Windows PowerShell ISE</div>
<div style="left:2017px;top:2116px;width:22px;height:2px;background:#999;"></div>
<div style="left:2109px;top:2105px;width:22px;height:22px;border:2px solid #999;"></div>
<svg style="position:absolute;left:2202px;top:2105px;" width="22" height="22" viewBox="0 0 22 22"><path d="M1 1L21 21M21 1L1 21" stroke="#999" stroke-width="2"/></svg>
<div style="left:12px;top:2146px;width:2238px;height:37px;background:linear-gradient(#f0f4fa,#e0e9f5);"></div>
<div style="left:27.0px;top:2152.8px;font:normal 25px/1 'Liberation Sans',sans-serif;color:#000;white-space:pre;transform:scaleX(0.9100);transform-origin:0 0;">File</div>
<div style="left:27px;top:2177px;width:13.891718750000003px;height:2px;background:#000;"></div>
<div style="left:91.0px;top:2152.8px;font:normal 25px/1 'Liberation Sans',sans-serif;color:#000;white-space:pre;transform:scaleX(0.9100);transform-origin:0 0;">Edit</div>
<div style="left:91px;top:2177px;width:15.171406250000004px;height:2px;background:#000;"></div>
<div style="left:159.0px;top:2152.8px;font:normal 25px/1 'Liberation Sans',sans-serif;color:#000;white-space:pre;transform:scaleX(0.9100);transform-origin:0 0;">View</div>
<div style="left:159px;top:2177px;width:15.17140624999999px;height:2px;background:#000;"></div>
<div style="left:238.0px;top:2152.8px;font:normal 25px/1 'Liberation Sans',sans-serif;color:#000;white-space:pre;transform:scaleX(0.9100);transform-origin:0 0;">Tools</div>
<div style="left:238px;top:2177px;width:13.891718749999995px;height:2px;background:#000;"></div>
<div style="left:320.0px;top:2152.8px;font:normal 25px/1 'Liberation Sans',sans-serif;color:#000;white-space:pre;transform:scaleX(0.9100);transform-origin:0 0;">Debug</div>
<div style="left:320px;top:2177px;width:16.42265624999999px;height:2px;background:#000;"></div>
<div style="left:419.0px;top:2152.8px;font:normal 25px/1 'Liberation Sans',sans-serif;color:#000;white-space:pre;transform:scaleX(0.9100);transform-origin:0 0;">Add-ons</div>
<div style="left:419px;top:2177px;width:15.171406250000018px;height:2px;background:#000;"></div>
<div style="left:538.0px;top:2152.8px;font:normal 25px/1 'Liberation Sans',sans-serif;color:#000;white-space:pre;transform:scaleX(0.9100);transform-origin:0 0;">Help</div>
<div style="left:538px;top:2177px;width:16.422656250000045px;height:2px;background:#000;"></div>
<div style="left:12px;top:2183px;width:2238px;height:53px;background:linear-gradient(#e6eef8,#dae5f3);"></div>
<div style="left:1396px;top:2183px;width:854px;height:53px;background:linear-gradient(#f4f7fb,#e8eef7);"></div>
<svg style="position:absolute;left:34px;top:2188px;" width="34" height="36" viewBox="0 0 34 36"><path d="M6 6H20L28 14V33H6Z" fill="#fff" stroke="#999" stroke-width="2"/><circle cx="7" cy="6" r="5" fill="#ffb020"/></svg>
<svg style="position:absolute;left:98px;top:2192px;" width="36" height="28" viewBox="0 0 36 28"><path d="M2 6H12L15 9H32V26H2Z" fill="#e8c060" stroke="#b08a30" stroke-width="1.5"/><path d="M6 13H35L31 26H2Z" fill="#f6d77a" stroke="#b08a30" stroke-width="1.5"/></svg>
<svg style="position:absolute;left:162px;top:2190px;" width="34" height="34" viewBox="0 0 34 34"><rect x="1" y="1" width="32" height="32" fill="#2a6fc0"/><rect x="7" y="3" width="20" height="12" fill="#fff"/><rect x="8" y="21" width="16" height="11" fill="#1a3f80"/></svg>
<svg style="position:absolute;left:228px;top:2188px;" width="28" height="36" viewBox="0 0 28 36"><path d="M8 2L18 26M20 2L10 26" stroke="#aaa" stroke-width="2.5"/><circle cx="9" cy="30" r="4" fill="none" stroke="#aaa" stroke-width="2"/><circle cx="19" cy="30" r="4" fill="none" stroke="#aaa" stroke-width="2"/></svg>
<svg style="position:absolute;left:292px;top:2190px;" width="30" height="34" viewBox="0 0 30 34"><rect x="2" y="2" width="14" height="18" fill="#fff" stroke="#bbb" stroke-width="2"/><rect x="12" y="12" width="15" height="19" fill="#fff" stroke="#bbb" stroke-width="2"/></svg>
<svg style="position:absolute;left:356px;top:2190px;" width="30" height="34" viewBox="0 0 30 34"><rect x="3" y="5" width="24" height="27" fill="#fff" stroke="#888" stroke-width="2.5" rx="2"/><rect x="9" y="2" width="12" height="6" fill="#888"/><path d="M8 15H22M8 20H22M8 25H22" stroke="#aaa" stroke-width="2"/></svg>
<svg style="position:absolute;left:416px;top:2190px;" width="36" height="34" viewBox="0 0 36 34"><path d="M8 3L32 27" stroke="#444" stroke-width="5"/><path d="M4 31L20 15" stroke="#777" stroke-width="5"/></svg>
<svg style="position:absolute;left:504px;top:2190px;" width="36" height="34" viewBox="0 0 36 34"><path d="M28 30Q34 12 20 8H8M14 2L6 8L14 14" stroke="#bbb" stroke-width="5" fill="none"/></svg>
<svg style="position:absolute;left:568px;top:2190px;" width="36" height="34" viewBox="0 0 36 34"><path d="M8 30Q2 12 16 8H28M22 2L30 8L22 14" stroke="#bbb" stroke-width="5" fill="none"/></svg>
<svg style="position:absolute;left:656px;top:2190px;" width="28" height="34" viewBox="0 0 28 34"><path d="M4 2L24 17L4 32Z" fill="#b8b8b8"/></svg>
<svg style="position:absolute;left:716px;top:2190px;" width="38" height="34" viewBox="0 0 38 34"><rect x="2" y="4" width="20" height="26" fill="#fff" stroke="#aaa" stroke-width="2"/><path d="M6 10H18M6 15H18M6 20H18" stroke="#bbb" stroke-width="2"/><path d="M16 10L34 20L16 30Z" fill="#c8c8c8"/></svg>
<div style="left:785px;top:2190px;width:30px;height:29px;background:linear-gradient(#ff4040,#c00000);border:1px solid #900;"></div>
<svg style="position:absolute;left:866px;top:2194px;" width="40" height="30" viewBox="0 0 40 30"><circle cx="12" cy="12" r="9" fill="#9cd" stroke="#689" stroke-width="1.5"/><rect x="14" y="8" width="22" height="15" fill="#1a30d0" stroke="#555" stroke-width="1.5"/><path d="M20 26H32" stroke="#555" stroke-width="2"/></svg>
<svg style="position:absolute;left:957px;top:2191px;" width="34" height="30" viewBox="0 0 34 30"><path d="M6 2H33L27 23H1Z" fill="#2a8fd6"/><path d="M8 7L15 12L7 17" stroke="#fff" stroke-width="2.5" fill="none"/><path d="M15 18H22" stroke="#fff" stroke-width="2"/><path d="M1 23H27L26 29H0Z" fill="#8aa"/></svg>
<div style="left:477px;top:2188px;width:2px;height:44px;background:#a8b8cc;"></div>
<div style="left:627px;top:2188px;width:2px;height:44px;background:#a8b8cc;"></div>
<div style="left:842px;top:2188px;width:2px;height:44px;background:#a8b8cc;"></div>
<div style="left:930px;top:2188px;width:2px;height:44px;background:#a8b8cc;"></div>
<div style="left:1016px;top:2188px;width:2px;height:44px;background:#a8b8cc;"></div>
<div style="left:1232px;top:2188px;width:2px;height:44px;background:#a8b8cc;"></div>
<div style="left:1034px;top:2183px;width:50px;height:46px;background:#eef2f8;border:2px solid #555;"></div>
<svg style="position:absolute;left:1040px;top:2192px;" width="34" height="28" viewBox="0 0 34 28"><rect x="1" y="1" width="32" height="26" fill="#fff" stroke="#777" stroke-width="2"/><path d="M1 6H33" stroke="#777" stroke-width="2"/><path d="M1 15H33" stroke="#777" stroke-width="2"/></svg>
<svg style="position:absolute;left:1108px;top:2192px;" width="34" height="28" viewBox="0 0 34 28"><rect x="1" y="1" width="32" height="26" fill="#fff" stroke="#777" stroke-width="2"/><path d="M1 6H33" stroke="#777" stroke-width="2"/><path d="M22 6V27" stroke="#777" stroke-width="2"/></svg>
<svg style="position:absolute;left:1172px;top:2192px;" width="34" height="28" viewBox="0 0 34 28"><rect x="1" y="1" width="32" height="26" fill="#fff" stroke="#777" stroke-width="2"/><path d="M1 6H33" stroke="#777" stroke-width="2"/></svg>
<svg style="position:absolute;left:1260px;top:2189px;" width="34" height="32" viewBox="0 0 34 32"><rect x="2" y="6" width="30" height="24" fill="#ddd" stroke="#888" stroke-width="2"/><rect x="6" y="2" width="14" height="20" fill="#999"/><path d="M9 8L14 12L9 16" stroke="#fff" stroke-width="2" fill="none"/></svg>
<div style="left:1314px;top:2183px;width:49px;height:46px;background:#eef2f8;border:2px solid #555;"></div>
<svg style="position:absolute;left:1320px;top:2192px;" width="38" height="28" viewBox="0 0 38 28"><rect x="1" y="1" width="34" height="26" fill="#fff" stroke="#777" stroke-width="2"/><path d="M1 6H35" stroke="#777" stroke-width="2"/><rect x="22" y="7" width="12" height="19" fill="#2a7fd0"/><path d="M25 11L30 16L25 21" stroke="#fff" stroke-width="2" fill="none"/></svg>
<svg style="position:absolute;left:1378px;top:2218px;" width="14" height="14" viewBox="0 0 14 14"><path d="M1 2H13" stroke="#333" stroke-width="1.5"/><path d="M1 6L7 12L13 6Z" fill="#333"/></svg>
<div style="left:12px;top:2236px;width:2238px;height:58px;background:linear-gradient(#fcefe0,#fff9f2);"></div>
<div style="left:30px;top:2247px;width:174px;height:48px;background:linear-gradient(#fbfbfb,#e4e4e4 60%,#d2d2d2);border:2px solid #8a8a8a;border-bottom:none;border-radius:12px 12px 0 0;"></div>
<div style="left:48.0px;top:2258.9px;font:normal 26px/1 'Liberation Sans',sans-serif;color:#000;white-space:pre;transform:scaleX(0.9030);transform-origin:0 0;">Untitled1.ps1</div>
<div style="left:206px;top:2243px;width:340px;height:53px;background:linear-gradient(#f4f8fd,#dde8f7);border:2px solid #8a8a8a;border-bottom:none;border-radius:12px 12px 0 0;"></div>
<div style="left:224.0px;top:2258.9px;font:normal 26px/1 'Liberation Sans',sans-serif;color:#000;white-space:pre;transform:scaleX(0.8441);transform-origin:0 0;">RESTCallbackListener.ps1</div>
<svg style="position:absolute;left:501px;top:2260px;" width="20" height="20" viewBox="0 0 20 20"><path d="M2 2L18 18M18 2L2 18" stroke="#222" stroke-width="3.5"/></svg>
<div style="left:20px;top:2293px;width:1666px;height:2px;background:#9a9a9a;"></div>
<svg style="position:absolute;left:1647px;top:2252px;" width="32" height="32" viewBox="0 0 32 32"><circle cx="16" cy="16" r="14" fill="#f4f4f4" stroke="#999" stroke-width="2"/><path d="M9 19L16 12L23 19" stroke="#2a70d0" stroke-width="4" fill="none"/></svg>
<div style="left:1686px;top:2236px;width:12px;height:696px;background:linear-gradient(90deg,#9ab,#cfe0f4 40%,#a6c4ea);"></div>
<div style="left:1698px;top:2236px;width:552px;height:696px;background:#ffffff;"></div>
<div style="left:1698px;top:2236px;width:552px;height:55px;background:linear-gradient(#fcefe0,#fff9f2);"></div>
<div style="left:1708px;top:2244px;width:186px;height:48px;background:linear-gradient(#e8f6ee,#f4fbf7);border:2px solid #8a8a8a;border-bottom:none;border-radius:12px 12px 0 0;"></div>
<div style="left:1725.0px;top:2255.8px;font:normal 25px/1 'Liberation Sans',sans-serif;color:#000;white-space:pre;transform:scaleX(0.8684);transform-origin:0 0;">Commands</div>
<svg style="position:absolute;left:1850px;top:2258px;" width="22" height="22" viewBox="0 0 22 22"><path d="M2 2L20 20M20 2L2 20" stroke="#222" stroke-width="3.5"/></svg>
<svg style="position:absolute;left:2225px;top:2256px;" width="22" height="22" viewBox="0 0 22 22"><path d="M2 2L20 20M20 2L2 20" stroke="#222" stroke-width="3.5"/></svg>
<div style="left:1698px;top:2290px;width:552px;height:2px;background:#9a9a9a;"></div>
<div style="left:1725.0px;top:2320.8px;font:normal 25px/1 'Liberation Sans',sans-serif;color:#000;white-space:pre;transform:scaleX(0.8773);transform-origin:0 0;">Modules:</div>
<div style="left:1836px;top:2310px;width:303px;height:48px;background:linear-gradient(#f2f2f2,#e4e4e4);border:2px solid #adadad;"></div>
<div style="left:1849.0px;top:2318.8px;font:normal 25px/1 'Liberation Sans',sans-serif;color:#000;white-space:pre;transform:scaleX(0.9100);transform-origin:0 0;">All</div>
<svg style="position:absolute;left:2113.0px;top:2327.0px;" width="12" height="12" viewBox="0 0 12 12"><path d="M1 3.5999999999999996L6.0 9.600000000000001L11 3.5999999999999996" stroke="#333" stroke-width="2" fill="none"/></svg>
<div style="left:2151px;top:2310px;width:84px;height:48px;background:#f4f4f4;border:2px solid #c6c6c6;"></div>
<div style="left:2161.0px;top:2320.8px;font:normal 25px/1 'Liberation Sans',sans-serif;color:#888;white-space:pre;transform:scaleX(0.7539);transform-origin:0 0;">Refresh</div>
<div style="left:1725.0px;top:2383.8px;font:normal 25px/1 'Liberation Sans',sans-serif;color:#000;white-space:pre;transform:scaleX(0.8555);transform-origin:0 0;">Name:</div>
<div style="left:1836px;top:2371px;width:399px;height:48px;background:#fff;border:2px solid #b4b4b4;"></div>
<div style="left:1715px;top:2443px;width:520px;height:372px;background:#fff;border:2px solid #b4b4b4;"></div>
<div style="left:1717px;top:2445px;width:480px;height:368px;overflow:hidden"><div style="left:12.0px;top:8.8px;font:normal 25px/1 'Liberation Sans',sans-serif;color:#000;white-space:pre;transform:scaleX(0.8850);transform-origin:0 0;">A:</div><div style="left:12.0px;top:45.9px;font:normal 25px/1 'Liberation Sans',sans-serif;color:#000;white-space:pre;transform:scaleX(0.8850);transform-origin:0 0;">Add-AppvClientConnectionGroup</div><div style="left:12.0px;top:83.2px;font:normal 25px/1 'Liberation Sans',sans-serif;color:#000;white-space:pre;transform:scaleX(0.8850);transform-origin:0 0;">Add-AppvClientPackage</div><div style="left:12.0px;top:120.3px;font:normal 25px/1 'Liberation Sans',sans-serif;color:#000;white-space:pre;transform:scaleX(0.8850);transform-origin:0 0;">Add-AppvPublishingServer</div><div style="left:12.0px;top:157.6px;font:normal 25px/1 'Liberation Sans',sans-serif;color:#000;white-space:pre;transform:scaleX(0.8850);transform-origin:0 0;">Add-AppxPackage</div><div style="left:12.0px;top:194.8px;font:normal 25px/1 'Liberation Sans',sans-serif;color:#000;white-space:pre;transform:scaleX(0.8850);transform-origin:0 0;">Add-AppxProvisionedPackage</div><div style="left:12.0px;top:231.9px;font:normal 25px/1 'Liberation Sans',sans-serif;color:#000;white-space:pre;transform:scaleX(0.8850);transform-origin:0 0;">Add-AppxVolume</div><div style="left:12.0px;top:269.2px;font:normal 25px/1 'Liberation Sans',sans-serif;color:#000;white-space:pre;transform:scaleX(0.8850);transform-origin:0 0;">Add-BCDataCacheExtension</div><div style="left:12.0px;top:306.3px;font:normal 25px/1 'Liberation Sans',sans-serif;color:#000;white-space:pre;transform:scaleX(0.8850);transform-origin:0 0;">Add-BitLockerKeyProtector</div><div style="left:12.0px;top:343.6px;font:normal 25px/1 'Liberation Sans',sans-serif;color:#000;white-space:pre;transform:scaleX(0.8850);transform-origin:0 0;">Add-BitsFile</div></div>
<div style="left:2198px;top:2446px;width:35px;height:367px;background:#f0f0f0;"></div>
<svg style="position:absolute;left:2207.0px;top:2458.0px;" width="16" height="16" viewBox="0 0 16 16"><path d="M1 11.2L8.0 3.2L15 11.2" stroke="#888" stroke-width="2" fill="none"/></svg>
<svg style="position:absolute;left:2207.0px;top:2788.0px;" width="16" height="16" viewBox="0 0 16 16"><path d="M1 4.8L8.0 12.8L15 4.8" stroke="#888" stroke-width="2" fill="none"/></svg>
<div style="left:2198px;top:2481px;width:35px;height:16px;background:#cdcdcd;"></div>
<div style="left:2018px;top:2875px;width:67px;height:42px;background:#f4f4f4;border:2px solid #b8b8b8;"></div>
<div style="left:2033.0px;top:2883.8px;font:normal 25px/1 'Liberation Sans',sans-serif;color:#888;white-space:pre;transform:scaleX(0.8068);transform-origin:0 0;">Run</div>
<div style="left:2097px;top:2875px;width:66px;height:42px;background:#f4f4f4;border:2px solid #b8b8b8;"></div>
<div style="left:2103.5px;top:2883.8px;font:normal 25px/1 'Liberation Sans',sans-serif;color:#888;white-space:pre;transform:scaleX(0.8474);transform-origin:0 0;">Insert</div>
<div style="left:2175px;top:2875px;width:67px;height:42px;background:#f4f4f4;border:2px solid #b8b8b8;"></div>
<div style="left:2183.5px;top:2883.8px;font:normal 25px/1 'Liberation Sans',sans-serif;color:#888;white-space:pre;transform:scaleX(0.8568);transform-origin:0 0;">Copy</div>
<div style="left:12px;top:2926px;width:2238px;height:7px;background:linear-gradient(#fbe8d4,#fff4ea);"></div>
<div style="left:12px;top:2933px;width:2238px;height:67px;background:#ededed;"></div>
<div style="left:12px;top:2933px;width:2238px;height:2px;background:#a0a0a0;"></div>
<div style="left:33.0px;top:2957.8px;font:normal 25px/1 'Liberation Sans',sans-serif;color:#000;white-space:pre;transform:scaleX(0.9503);transform-origin:0 0;">Running script / selection.  Press Ctrl+Break to stop.  Press Ctrl+B to break into debugger.</div>
<div style="left:0px;top:2997px;width:2250px;height:3px;background:#222;"></div>
<div style="left:1652px;top:2950px;width:2px;height:36px;background:#888;"></div>
<div style="left:1679.0px;top:2952.8px;font:normal 25px/1 'Liberation Sans',sans-serif;color:#000;white-space:pre;transform:scaleX(0.9062);transform-origin:0 0;">Ln 16831  Col 1</div>
<div style="left:1862px;top:2950px;width:2px;height:36px;background:#888;"></div>
<div style="left:1885px;top:2964px;width:272px;height:5px;background:#e4e4e4;border:1px solid #c4c4c4;"></div>
<div style="left:1934px;top:2952px;width:18px;height:30px;background:#f0f0f0;border:2px solid #888;border-radius:2px;"></div>
<div style="left:2176.0px;top:2953.8px;font:normal 25px/1 'Liberation Sans',sans-serif;color:#000;white-space:pre;transform:scaleX(0.8131);transform-origin:0 0;">100%</div>
<div style="left:2250px;top:2085px;width:2250px;height:915px;background:#86b8ec;"></div>
<div style="left:2252px;top:2088px;width:2248px;height:912px;background:#f0f0f0;"></div>
<div style="left:2252px;top:2088px;width:2248px;height:58px;background:#ffffff;"></div>
<svg style="position:absolute;left:2266px;top:2100px;" width="34" height="30" viewBox="0 0 34 30"><path d="M6 2H33L27 23H1Z" fill="#2a8fd6"/><path d="M8 7L15 12L7 17" stroke="#fff" stroke-width="2.5" fill="none"/><path d="M15 18H22" stroke="#fff" stroke-width="2"/><path d="M1 23H27L26 29H0Z" fill="#8aa"/></svg>
<div style="left:2303.0px;top:2103.8px;font:normal 25px/1 'Liberation Sans',sans-serif;color:#000;white-space:pre;transform:scaleX(0.9112);transform-origin:0 0;">Windows PowerShell ISE</div>
<div style="left:4258px;top:2116px;width:22px;height:2px;background:#111;"></div>
<div style="left:4350px;top:2105px;width:22px;height:22px;border:2px solid #111;"></div>
<svg style="position:absolute;left:4443px;top:2105px;" width="22" height="22" viewBox="0 0 22 22"><path d="M1 1L21 21M21 1L1 21" stroke="#111" stroke-width="2"/></svg>
<div style="left:2252px;top:2146px;width:2248px;height:37px;background:linear-gradient(#f0f4fa,#e0e9f5);"></div>
<div style="left:2267.0px;top:2152.8px;font:normal 25px/1 'Liberation Sans',sans-serif;color:#000;white-space:pre;transform:scaleX(0.9100);transform-origin:0 0;">File</div>
<div style="left:2331.0px;top:2152.8px;font:normal 25px/1 'Liberation Sans',sans-serif;color:#000;white-space:pre;transform:scaleX(0.9100);transform-origin:0 0;">Edit</div>
<div style="left:2399.0px;top:2152.8px;font:normal 25px/1 'Liberation Sans',sans-serif;color:#000;white-space:pre;transform:scaleX(0.9100);transform-origin:0 0;">View</div>
<div style="left:2478.0px;top:2152.8px;font:normal 25px/1 'Liberation Sans',sans-serif;color:#000;white-space:pre;transform:scaleX(0.9100);transform-origin:0 0;">Tools</div>
<div style="left:2560.0px;top:2152.8px;font:normal 25px/1 'Liberation Sans',sans-serif;color:#000;white-space:pre;transform:scaleX(0.9100);transform-origin:0 0;">Debug</div>
<div style="left:2659.0px;top:2152.8px;font:normal 25px/1 'Liberation Sans',sans-serif;color:#000;white-space:pre;transform:scaleX(0.9100);transform-origin:0 0;">Add-ons</div>
<div style="left:2778.0px;top:2152.8px;font:normal 25px/1 'Liberation Sans',sans-serif;color:#000;white-space:pre;transform:scaleX(0.9100);transform-origin:0 0;">Help</div>
<div style="left:2252px;top:2183px;width:2248px;height:53px;background:linear-gradient(#e6eef8,#dae5f3);"></div>
<div style="left:3636px;top:2183px;width:864px;height:53px;background:linear-gradient(#f4f7fb,#e8eef7);"></div>
<svg style="position:absolute;left:2274px;top:2188px;" width="34" height="36" viewBox="0 0 34 36"><path d="M6 6H20L28 14V33H6Z" fill="#fff" stroke="#999" stroke-width="2"/><circle cx="7" cy="6" r="5" fill="#ffb020"/></svg>
<svg style="position:absolute;left:2338px;top:2192px;" width="36" height="28" viewBox="0 0 36 28"><path d="M2 6H12L15 9H32V26H2Z" fill="#e8c060" stroke="#b08a30" stroke-width="1.5"/><path d="M6 13H35L31 26H2Z" fill="#f6d77a" stroke="#b08a30" stroke-width="1.5"/></svg>
<svg style="position:absolute;left:2402px;top:2190px;" width="34" height="34" viewBox="0 0 34 34"><rect x="1" y="1" width="32" height="32" fill="#2a6fc0"/><rect x="7" y="3" width="20" height="12" fill="#fff"/><rect x="8" y="21" width="16" height="11" fill="#1a3f80"/></svg>
<svg style="position:absolute;left:2468px;top:2188px;" width="28" height="36" viewBox="0 0 28 36"><path d="M8 2L18 26M20 2L10 26" stroke="#aaa" stroke-width="2.5"/><circle cx="9" cy="30" r="4" fill="none" stroke="#aaa" stroke-width="2"/><circle cx="19" cy="30" r="4" fill="none" stroke="#aaa" stroke-width="2"/></svg>
<svg style="position:absolute;left:2532px;top:2190px;" width="30" height="34" viewBox="0 0 30 34"><rect x="2" y="2" width="14" height="18" fill="#fff" stroke="#bbb" stroke-width="2"/><rect x="12" y="12" width="15" height="19" fill="#fff" stroke="#bbb" stroke-width="2"/></svg>
<svg style="position:absolute;left:2596px;top:2190px;" width="30" height="34" viewBox="0 0 30 34"><rect x="3" y="5" width="24" height="27" fill="#fff" stroke="#888" stroke-width="2.5" rx="2"/><rect x="9" y="2" width="12" height="6" fill="#888"/><path d="M8 15H22M8 20H22M8 25H22" stroke="#aaa" stroke-width="2"/></svg>
<svg style="position:absolute;left:2656px;top:2190px;" width="36" height="34" viewBox="0 0 36 34"><path d="M8 3L32 27" stroke="#444" stroke-width="5"/><path d="M4 31L20 15" stroke="#1a9ad8" stroke-width="5"/></svg>
<svg style="position:absolute;left:2744px;top:2190px;" width="36" height="34" viewBox="0 0 36 34"><path d="M28 30Q34 12 20 8H8M14 2L6 8L14 14" stroke="#bbb" stroke-width="5" fill="none"/></svg>
<svg style="position:absolute;left:2808px;top:2190px;" width="36" height="34" viewBox="0 0 36 34"><path d="M8 30Q2 12 16 8H28M22 2L30 8L22 14" stroke="#bbb" stroke-width="5" fill="none"/></svg>
<svg style="position:absolute;left:2896px;top:2190px;" width="28" height="34" viewBox="0 0 28 34"><path d="M4 2L24 17L4 32Z" fill="#2aba2a"/></svg>
<svg style="position:absolute;left:2956px;top:2190px;" width="38" height="34" viewBox="0 0 38 34"><rect x="2" y="4" width="20" height="26" fill="#fff" stroke="#888" stroke-width="2"/><path d="M6 10H18M6 15H18M6 20H18" stroke="#999" stroke-width="2"/><path d="M16 10L34 20L16 30Z" fill="#2aba2a"/></svg>
<div style="left:3025px;top:2191px;width:30px;height:28px;background:#707070;border-radius:2px;"></div>
<svg style="position:absolute;left:3106px;top:2194px;" width="40" height="30" viewBox="0 0 40 30"><circle cx="12" cy="12" r="9" fill="#9cd" stroke="#689" stroke-width="1.5"/><rect x="14" y="8" width="22" height="15" fill="#1a30d0" stroke="#555" stroke-width="1.5"/><path d="M20 26H32" stroke="#555" stroke-width="2"/></svg>
<svg style="position:absolute;left:3197px;top:2191px;" width="34" height="30" viewBox="0 0 34 30"><path d="M6 2H33L27 23H1Z" fill="#2a8fd6"/><path d="M8 7L15 12L7 17" stroke="#fff" stroke-width="2.5" fill="none"/><path d="M15 18H22" stroke="#fff" stroke-width="2"/><path d="M1 23H27L26 29H0Z" fill="#8aa"/></svg>
<div style="left:2717px;top:2188px;width:2px;height:44px;background:#a8b8cc;"></div>
<div style="left:2867px;top:2188px;width:2px;height:44px;background:#a8b8cc;"></div>
<div style="left:3082px;top:2188px;width:2px;height:44px;background:#a8b8cc;"></div>
<div style="left:3170px;top:2188px;width:2px;height:44px;background:#a8b8cc;"></div>
<div style="left:3256px;top:2188px;width:2px;height:44px;background:#a8b8cc;"></div>
<div style="left:3472px;top:2188px;width:2px;height:44px;background:#a8b8cc;"></div>
<div style="left:3274px;top:2183px;width:50px;height:46px;background:#eef2f8;border:2px solid #555;"></div>
<svg style="position:absolute;left:3280px;top:2192px;" width="34" height="28" viewBox="0 0 34 28"><rect x="1" y="1" width="32" height="26" fill="#fff" stroke="#777" stroke-width="2"/><path d="M1 6H33" stroke="#777" stroke-width="2"/><path d="M1 15H33" stroke="#777" stroke-width="2"/></svg>
<svg style="position:absolute;left:3348px;top:2192px;" width="34" height="28" viewBox="0 0 34 28"><rect x="1" y="1" width="32" height="26" fill="#fff" stroke="#777" stroke-width="2"/><path d="M1 6H33" stroke="#777" stroke-width="2"/><path d="M22 6V27" stroke="#777" stroke-width="2"/></svg>
<svg style="position:absolute;left:3412px;top:2192px;" width="34" height="28" viewBox="0 0 34 28"><rect x="1" y="1" width="32" height="26" fill="#fff" stroke="#777" stroke-width="2"/><path d="M1 6H33" stroke="#777" stroke-width="2"/></svg>
<svg style="position:absolute;left:3500px;top:2189px;" width="34" height="32" viewBox="0 0 34 32"><rect x="2" y="6" width="30" height="24" fill="#ddd" stroke="#888" stroke-width="2"/><rect x="6" y="2" width="14" height="20" fill="#2a7fd0"/><path d="M9 8L14 12L9 16" stroke="#fff" stroke-width="2" fill="none"/></svg>
<div style="left:3554px;top:2183px;width:49px;height:46px;background:#eef2f8;border:2px solid #555;"></div>
<svg style="position:absolute;left:3560px;top:2192px;" width="38" height="28" viewBox="0 0 38 28"><rect x="1" y="1" width="34" height="26" fill="#fff" stroke="#777" stroke-width="2"/><path d="M1 6H35" stroke="#777" stroke-width="2"/><rect x="22" y="7" width="12" height="19" fill="#2a7fd0"/><path d="M25 11L30 16L25 21" stroke="#fff" stroke-width="2" fill="none"/></svg>
<svg style="position:absolute;left:3618px;top:2218px;" width="14" height="14" viewBox="0 0 14 14"><path d="M1 2H13" stroke="#333" stroke-width="1.5"/><path d="M1 6L7 12L13 6Z" fill="#333"/></svg>
<div style="left:2252px;top:2236px;width:2248px;height:58px;background:linear-gradient(#fcefe0,#fff9f2);"></div>
<div style="left:2270px;top:2247px;width:174px;height:48px;background:linear-gradient(#fbfbfb,#e4e4e4 60%,#d2d2d2);border:2px solid #8a8a8a;border-bottom:none;border-radius:12px 12px 0 0;"></div>
<div style="left:2288.0px;top:2258.9px;font:normal 26px/1 'Liberation Sans',sans-serif;color:#000;white-space:pre;transform:scaleX(0.9030);transform-origin:0 0;">Untitled1.ps1</div>
<div style="left:2446px;top:2243px;width:292px;height:53px;background:linear-gradient(#f4f8fd,#dde8f7);border:2px solid #8a8a8a;border-bottom:none;border-radius:12px 12px 0 0;"></div>
<div style="left:2464.0px;top:2258.9px;font:normal 26px/1 'Liberation Sans',sans-serif;color:#000;white-space:pre;transform:scaleX(0.7897);transform-origin:0 0;">RESTAPISamples.ps1</div>
<svg style="position:absolute;left:2693px;top:2260px;" width="20" height="20" viewBox="0 0 20 20"><path d="M2 2L18 18M18 2L2 18" stroke="#222" stroke-width="3.5"/></svg>
<div style="left:2260px;top:2293px;width:1666px;height:2px;background:#9a9a9a;"></div>
<svg style="position:absolute;left:3887px;top:2252px;" width="32" height="32" viewBox="0 0 32 32"><circle cx="16" cy="16" r="14" fill="#f4f4f4" stroke="#999" stroke-width="2"/><path d="M9 19L16 12L23 19" stroke="#2a70d0" stroke-width="4" fill="none"/></svg>
<div style="left:3926px;top:2236px;width:12px;height:696px;background:linear-gradient(90deg,#9ab,#cfe0f4 40%,#a6c4ea);"></div>
<div style="left:3938px;top:2236px;width:562px;height:696px;background:#ffffff;"></div>
<div style="left:3938px;top:2236px;width:562px;height:55px;background:linear-gradient(#fcefe0,#fff9f2);"></div>
<div style="left:3948px;top:2244px;width:186px;height:48px;background:linear-gradient(#e8f6ee,#f4fbf7);border:2px solid #8a8a8a;border-bottom:none;border-radius:12px 12px 0 0;"></div>
<div style="left:3965.0px;top:2255.8px;font:normal 25px/1 'Liberation Sans',sans-serif;color:#000;white-space:pre;transform:scaleX(0.8684);transform-origin:0 0;">Commands</div>
<svg style="position:absolute;left:4090px;top:2258px;" width="22" height="22" viewBox="0 0 22 22"><path d="M2 2L20 20M20 2L2 20" stroke="#222" stroke-width="3.5"/></svg>
<svg style="position:absolute;left:4465px;top:2256px;" width="22" height="22" viewBox="0 0 22 22"><path d="M2 2L20 20M20 2L2 20" stroke="#222" stroke-width="3.5"/></svg>
<div style="left:3938px;top:2290px;width:562px;height:2px;background:#9a9a9a;"></div>
<div style="left:3965.0px;top:2320.8px;font:normal 25px/1 'Liberation Sans',sans-serif;color:#000;white-space:pre;transform:scaleX(0.8773);transform-origin:0 0;">Modules:</div>
<div style="left:4076px;top:2310px;width:303px;height:48px;background:linear-gradient(#f2f2f2,#e4e4e4);border:2px solid #adadad;"></div>
<div style="left:4089.0px;top:2318.8px;font:normal 25px/1 'Liberation Sans',sans-serif;color:#000;white-space:pre;transform:scaleX(0.9100);transform-origin:0 0;">All</div>
<svg style="position:absolute;left:4353.0px;top:2327.0px;" width="12" height="12" viewBox="0 0 12 12"><path d="M1 3.5999999999999996L6.0 9.600000000000001L11 3.5999999999999996" stroke="#333" stroke-width="2" fill="none"/></svg>
<div style="left:4391px;top:2310px;width:84px;height:48px;background:#e1e1e1;border:2px solid #555;"></div>
<div style="left:4401.0px;top:2320.8px;font:normal 25px/1 'Liberation Sans',sans-serif;color:#000;white-space:pre;transform:scaleX(0.7539);transform-origin:0 0;">Refresh</div>
<div style="left:3965.0px;top:2383.8px;font:normal 25px/1 'Liberation Sans',sans-serif;color:#000;white-space:pre;transform:scaleX(0.8555);transform-origin:0 0;">Name:</div>
<div style="left:4076px;top:2371px;width:399px;height:48px;background:#fff;border:2px solid #b4b4b4;"></div>
<div style="left:3955px;top:2443px;width:520px;height:372px;background:#fff;border:2px solid #b4b4b4;"></div>
<div style="left:3957px;top:2445px;width:480px;height:368px;overflow:hidden"><div style="left:12.0px;top:8.8px;font:normal 25px/1 'Liberation Sans',sans-serif;color:#000;white-space:pre;transform:scaleX(0.8850);transform-origin:0 0;">A:</div><div style="left:12.0px;top:45.9px;font:normal 25px/1 'Liberation Sans',sans-serif;color:#000;white-space:pre;transform:scaleX(0.8850);transform-origin:0 0;">Add-AppvClientConnectionGroup</div><div style="left:12.0px;top:83.2px;font:normal 25px/1 'Liberation Sans',sans-serif;color:#000;white-space:pre;transform:scaleX(0.8850);transform-origin:0 0;">Add-AppvClientPackage</div><div style="left:12.0px;top:120.3px;font:normal 25px/1 'Liberation Sans',sans-serif;color:#000;white-space:pre;transform:scaleX(0.8850);transform-origin:0 0;">Add-AppvPublishingServer</div><div style="left:12.0px;top:157.6px;font:normal 25px/1 'Liberation Sans',sans-serif;color:#000;white-space:pre;transform:scaleX(0.8850);transform-origin:0 0;">Add-AppxPackage</div><div style="left:12.0px;top:194.8px;font:normal 25px/1 'Liberation Sans',sans-serif;color:#000;white-space:pre;transform:scaleX(0.8850);transform-origin:0 0;">Add-AppxProvisionedPackage</div><div style="left:12.0px;top:231.9px;font:normal 25px/1 'Liberation Sans',sans-serif;color:#000;white-space:pre;transform:scaleX(0.8850);transform-origin:0 0;">Add-AppxVolume</div><div style="left:12.0px;top:269.2px;font:normal 25px/1 'Liberation Sans',sans-serif;color:#000;white-space:pre;transform:scaleX(0.8850);transform-origin:0 0;">Add-BCDataCacheExtension</div><div style="left:12.0px;top:306.3px;font:normal 25px/1 'Liberation Sans',sans-serif;color:#000;white-space:pre;transform:scaleX(0.8850);transform-origin:0 0;">Add-BitLockerKeyProtector</div><div style="left:12.0px;top:343.6px;font:normal 25px/1 'Liberation Sans',sans-serif;color:#000;white-space:pre;transform:scaleX(0.8850);transform-origin:0 0;">Add-BitsFile</div></div>
<div style="left:4438px;top:2446px;width:35px;height:367px;background:#f0f0f0;"></div>
<svg style="position:absolute;left:4447.0px;top:2458.0px;" width="16" height="16" viewBox="0 0 16 16"><path d="M1 11.2L8.0 3.2L15 11.2" stroke="#888" stroke-width="2" fill="none"/></svg>
<svg style="position:absolute;left:4447.0px;top:2788.0px;" width="16" height="16" viewBox="0 0 16 16"><path d="M1 4.8L8.0 12.8L15 4.8" stroke="#888" stroke-width="2" fill="none"/></svg>
<div style="left:4438px;top:2481px;width:35px;height:16px;background:#cdcdcd;"></div>
<div style="left:4258px;top:2875px;width:67px;height:42px;background:#f4f4f4;border:2px solid #b8b8b8;"></div>
<div style="left:4273.0px;top:2883.8px;font:normal 25px/1 'Liberation Sans',sans-serif;color:#888;white-space:pre;transform:scaleX(0.8068);transform-origin:0 0;">Run</div>
<div style="left:4337px;top:2875px;width:66px;height:42px;background:#f4f4f4;border:2px solid #b8b8b8;"></div>
<div style="left:4343.5px;top:2883.8px;font:normal 25px/1 'Liberation Sans',sans-serif;color:#888;white-space:pre;transform:scaleX(0.8474);transform-origin:0 0;">Insert</div>
<div style="left:4415px;top:2875px;width:67px;height:42px;background:#f4f4f4;border:2px solid #b8b8b8;"></div>
<div style="left:4423.5px;top:2883.8px;font:normal 25px/1 'Liberation Sans',sans-serif;color:#888;white-space:pre;transform:scaleX(0.8568);transform-origin:0 0;">Copy</div>
<div style="left:2252px;top:2926px;width:2248px;height:7px;background:linear-gradient(#fbe8d4,#fff4ea);"></div>
<div style="left:2252px;top:2933px;width:2248px;height:67px;background:#ededed;"></div>
<div style="left:2252px;top:2933px;width:2248px;height:2px;background:#a0a0a0;"></div>
<div style="left:2272.0px;top:2957.8px;font:normal 25px/1 'Liberation Sans',sans-serif;color:#000;white-space:pre;transform:scaleX(0.9512);transform-origin:0 0;">Completed</div>
<div style="left:3892px;top:2950px;width:2px;height:36px;background:#888;"></div>
<div style="left:3919.0px;top:2952.8px;font:normal 25px/1 'Liberation Sans',sans-serif;color:#000;white-space:pre;transform:scaleX(0.9099);transform-origin:0 0;">Ln 784  Col 20</div>
<div style="left:4102px;top:2950px;width:2px;height:36px;background:#888;"></div>
<div style="left:4125px;top:2964px;width:272px;height:5px;background:#e4e4e4;border:1px solid #c4c4c4;"></div>
<div style="left:4174px;top:2952px;width:18px;height:30px;background:#f0f0f0;border:2px solid #888;border-radius:2px;"></div>
<div style="left:4416.0px;top:2953.8px;font:normal 25px/1 'Liberation Sans',sans-serif;color:#000;white-space:pre;transform:scaleX(0.8131);transform-origin:0 0;">100%</div>
<div style="left:20px;top:2295px;width:1666px;height:36px;background:#f0f0f0;"></div>
<div style="left:55px;top:2297px;width:1207px;height:33px;background:#cdcdcd;"></div>
<svg style="position:absolute;left:31.0px;top:2306.0px;" width="14" height="14" viewBox="0 0 14 14"><path d="M9.799999999999999 1L2.8000000000000003 7.0L9.799999999999999 13" stroke="#888" stroke-width="2" fill="none"/></svg>
<svg style="position:absolute;left:1627.0px;top:2306.0px;" width="14" height="14" viewBox="0 0 14 14"><path d="M4.2 1L11.200000000000001 7.0L4.2 13" stroke="#888" stroke-width="2" fill="none"/></svg>
<div style="left:20px;top:2331px;width:1666px;height:10px;background:linear-gradient(#b8c4d0,#cfe2f6 40%,#a9c8ee);"></div>
<div style="left:20px;top:2341px;width:1632px;height:550px;background:#012456;"></div>
<div style="left:31.5px;top:2345.8px;font:normal 24px/1 'Liberation Mono',monospace;color:#f5f5f5;white-space:pre;">   },</div>
<div style="left:31.5px;top:2371.9px;font:normal 24px/1 'Liberation Mono',monospace;color:#f5f5f5;white-space:pre;">   "message": null</div>
<div style="left:31.5px;top:2398.0px;font:normal 24px/1 'Liberation Mono',monospace;color:#f5f5f5;white-space:pre;"> }</div>
<div style="left:31.5px;top:2424.1px;font:normal 24px/1 'Liberation Mono',monospace;color:#f5f5f5;white-space:pre;"> {</div>
<div style="left:31.5px;top:2450.2px;font:normal 24px/1 'Liberation Mono',monospace;color:#f5f5f5;white-space:pre;">   "status": "success",</div>
<div style="left:31.5px;top:2476.3px;font:normal 24px/1 'Liberation Mono',monospace;color:#f5f5f5;white-space:pre;">   "event": "SKSS_CameraOutputViewUpdated",</div>
<div style="left:31.5px;top:2502.4px;font:normal 24px/1 'Liberation Mono',monospace;color:#f5f5f5;white-space:pre;">   "data": {</div>
<div style="left:31.5px;top:2528.5px;font:normal 24px/1 'Liberation Mono',monospace;color:#f5f5f5;white-space:pre;">     "Time": "01.07.2018 21:15:01",</div>
<div style="left:31.5px;top:2554.6px;font:normal 24px/1 'Liberation Mono',monospace;color:#f5f5f5;white-space:pre;">     "TimeUTC": "01.07.2018 19:15:01",</div>
<div style="left:31.5px;top:2580.7px;font:normal 24px/1 'Liberation Mono',monospace;color:#f5f5f5;white-space:pre;">     "Frame": 67,</div>
<div style="left:31.5px;top:2606.8px;font:normal 24px/1 'Liberation Mono',monospace;color:#f5f5f5;white-space:pre;">     "GuiderCamSNR": 36.958745182309229,</div>
<div style="left:31.5px;top:2632.9px;font:normal 24px/1 'Liberation Mono',monospace;color:#f5f5f5;white-space:pre;">     "GuiderCamStDev": 3.570589901574067,</div>
<div style="left:31.5px;top:2659.0px;font:normal 24px/1 'Liberation Mono',monospace;color:#f5f5f5;white-space:pre;">     "GuiderCamMedian": 21.670587539672852,</div>
<div style="left:31.5px;top:2685.1px;font:normal 24px/1 'Liberation Mono',monospace;color:#f5f5f5;white-space:pre;">     "GuiderCamMean": 70.45912719726563,</div>
<div style="left:31.5px;top:2711.2px;font:normal 24px/1 'Liberation Mono',monospace;color:#f5f5f5;white-space:pre;">     "GuiderCamGradientAngleX": 0.064634506261307914,</div>
<div style="left:31.5px;top:2737.3px;font:normal 24px/1 'Liberation Mono',monospace;color:#f5f5f5;white-space:pre;">     "GuiderCamGradientAngleY": 0.04851379822341418,</div>
<div style="left:31.5px;top:2763.4px;font:normal 24px/1 'Liberation Mono',monospace;color:#f5f5f5;white-space:pre;">     "GuiderCamGradientOffset": 21.561038970947266</div>
<div style="left:31.5px;top:2789.5px;font:normal 24px/1 'Liberation Mono',monospace;color:#f5f5f5;white-space:pre;">   },</div>
<div style="left:31.5px;top:2815.6px;font:normal 24px/1 'Liberation Mono',monospace;color:#f5f5f5;white-space:pre;">   "message": null</div>
<div style="left:31.5px;top:2841.7px;font:normal 24px/1 'Liberation Mono',monospace;color:#f5f5f5;white-space:pre;"> }</div>
<div style="left:1652px;top:2341px;width:34px;height:550px;background:#f0f0f0;"></div>
<svg style="position:absolute;left:1661.0px;top:2353.0px;" width="16" height="16" viewBox="0 0 16 16"><path d="M1 11.2L8.0 3.2L15 11.2" stroke="#888" stroke-width="2" fill="none"/></svg>
<svg style="position:absolute;left:1661.0px;top:2867.0px;" width="16" height="16" viewBox="0 0 16 16"><path d="M1 4.8L8.0 12.8L15 4.8" stroke="#888" stroke-width="2" fill="none"/></svg>
<div style="left:1652px;top:2841px;width:34px;height:16px;background:#cdcdcd;"></div>
<div style="left:20px;top:2891px;width:1666px;height:35px;background:#f0f0f0;"></div>
<svg style="position:absolute;left:31.0px;top:2901.0px;" width="14" height="14" viewBox="0 0 14 14"><path d="M9.799999999999999 1L2.8000000000000003 7.0L9.799999999999999 13" stroke="#bbb" stroke-width="2" fill="none"/></svg>
<svg style="position:absolute;left:1627.0px;top:2901.0px;" width="14" height="14" viewBox="0 0 14 14"><path d="M4.2 1L11.200000000000001 7.0L4.2 13" stroke="#bbb" stroke-width="2" fill="none"/></svg>
<div style="left:2258px;top:2295px;width:1668px;height:355px;background:#ffffff;"></div>
<div style="left:2258px;top:2295px;width:1632px;height:355px;overflow:hidden"><div style="left:116px;top:82px;width:1085px;height:27px;background:#c4c4c4;"></div></div>
<div style="left:2303.2px;top:2299.8px;font:normal 24px/1 'Liberation Mono',monospace;color:#2382a0;white-space:pre;">28</div>
<div style="left:2303.2px;top:2325.9px;font:normal 24px/1 'Liberation Mono',monospace;color:#2382a0;white-space:pre;">29</div>
<div style="left:2375.0px;top:2325.9px;font:normal 24px/1 'Liberation Mono',monospace;color:#0000ff;white-space:pre;">Invoke-WebRequest</div>
<div style="left:2634.2px;top:2325.9px;font:normal 24px/1 'Liberation Mono',monospace;color:#8b0000;white-space:pre;">"http://localhost:18700/SKSS_MoveFocuserToPosition?steps=32768"</div>
<div style="left:2303.2px;top:2352.0px;font:normal 24px/1 'Liberation Mono',monospace;color:#2382a0;white-space:pre;">30</div>
<div style="left:2375.0px;top:2352.0px;font:normal 24px/1 'Liberation Mono',monospace;color:#0000ff;white-space:pre;">Invoke-WebRequest</div>
<div style="left:2634.2px;top:2352.0px;font:normal 24px/1 'Liberation Mono',monospace;color:#8b0000;white-space:pre;">"http://localhost:18700/SKSS_MoveFocuserInward?steps=10"</div>
<div style="left:2303.2px;top:2378.1px;font:normal 24px/1 'Liberation Mono',monospace;color:#2382a0;white-space:pre;">31</div>
<div style="left:2375.0px;top:2378.1px;font:normal 24px/1 'Liberation Mono',monospace;color:#0000ff;white-space:pre;">Invoke-WebRequest</div>
<div style="left:2634.2px;top:2378.1px;font:normal 24px/1 'Liberation Mono',monospace;color:#8b0000;white-space:pre;">"http://localhost:18700/SKSS_MoveFocuserOutward?steps=10"</div>
<div style="left:2303.2px;top:2404.2px;font:normal 24px/1 'Liberation Mono',monospace;color:#2382a0;white-space:pre;">32</div>
<div style="left:2303.2px;top:2430.3px;font:normal 24px/1 'Liberation Mono',monospace;color:#2382a0;white-space:pre;">33</div>
<div style="left:2375.0px;top:2430.3px;font:normal 24px/1 'Liberation Mono',monospace;color:#0000ff;white-space:pre;">Invoke-WebRequest</div>
<div style="left:2634.2px;top:2430.3px;font:normal 24px/1 'Liberation Mono',monospace;color:#8b0000;white-space:pre;">"http://localhost:18700/SKSS_MoveGuiderMinusX?duration=10"</div>
<div style="left:2303.2px;top:2456.4px;font:normal 24px/1 'Liberation Mono',monospace;color:#2382a0;white-space:pre;">34</div>
<div style="left:2375.0px;top:2456.4px;font:normal 24px/1 'Liberation Mono',monospace;color:#0000ff;white-space:pre;">Invoke-WebRequest</div>
<div style="left:2634.2px;top:2456.4px;font:normal 24px/1 'Liberation Mono',monospace;color:#8b0000;white-space:pre;">"http://localhost:18700/SKSS_MoveGuiderPlusX?duration=10"</div>
<div style="left:2303.2px;top:2482.5px;font:normal 24px/1 'Liberation Mono',monospace;color:#2382a0;white-space:pre;">35</div>
<div style="left:2375.0px;top:2482.5px;font:normal 24px/1 'Liberation Mono',monospace;color:#0000ff;white-space:pre;">Invoke-WebRequest</div>
<div style="left:2634.2px;top:2482.5px;font:normal 24px/1 'Liberation Mono',monospace;color:#8b0000;white-space:pre;">"http://localhost:18700/SKSS_MoveGuiderMinusY?duration=10"</div>
<div style="left:2303.2px;top:2508.6px;font:normal 24px/1 'Liberation Mono',monospace;color:#2382a0;white-space:pre;">36</div>
<div style="left:2375.0px;top:2508.6px;font:normal 24px/1 'Liberation Mono',monospace;color:#0000ff;white-space:pre;">Invoke-WebRequest</div>
<div style="left:2634.2px;top:2508.6px;font:normal 24px/1 'Liberation Mono',monospace;color:#8b0000;white-space:pre;">"http://localhost:18700/SKSS_MoveGuiderPlusY?duration=10"</div>
<div style="left:2303.2px;top:2534.7px;font:normal 24px/1 'Liberation Mono',monospace;color:#2382a0;white-space:pre;">37</div>
<div style="left:2303.2px;top:2560.8px;font:normal 24px/1 'Liberation Mono',monospace;color:#2382a0;white-space:pre;">38</div>
<div style="left:2303.2px;top:2586.9px;font:normal 24px/1 'Liberation Mono',monospace;color:#2382a0;white-space:pre;">39</div>
<div style="left:2258px;top:2295px;width:1632px;height:6px;overflow:hidden"><div style="left:17.2px;top:-21.2px;font:normal 24px/1 'Liberation Mono',monospace;color:#2382a0;white-space:pre;">27</div><div style="left:117.0px;top:-21.2px;font:normal 24px/1 'Liberation Mono',monospace;color:#0000ff;white-space:pre;">Invoke-WebRequest "http://localhost:18700/SKSS_MoveFocuserToPosition?steps=0"</div></div>
<div style="left:3890px;top:2295px;width:36px;height:355px;background:#f0f0f0;"></div>
<svg style="position:absolute;left:3900.0px;top:2303.0px;" width="16" height="16" viewBox="0 0 16 16"><path d="M1 11.2L8.0 3.2L15 11.2" stroke="#888" stroke-width="2" fill="none"/></svg>
<svg style="position:absolute;left:3900.0px;top:2626.0px;" width="16" height="16" viewBox="0 0 16 16"><path d="M1 4.8L8.0 12.8L15 4.8" stroke="#888" stroke-width="2" fill="none"/></svg>
<div style="left:3891px;top:2475px;width:34px;height:77px;background:#cdcdcd;"></div>
<div style="left:2258px;top:2650px;width:1668px;height:36px;background:#f0f0f0;"></div>
<div style="left:2294px;top:2651px;width:1493px;height:34px;background:#cdcdcd;"></div>
<svg style="position:absolute;left:2269.0px;top:2661.0px;" width="14" height="14" viewBox="0 0 14 14"><path d="M9.799999999999999 1L2.8000000000000003 7.0L9.799999999999999 13" stroke="#888" stroke-width="2" fill="none"/></svg>
<svg style="position:absolute;left:3866.0px;top:2661.0px;" width="14" height="14" viewBox="0 0 14 14"><path d="M4.2 1L11.200000000000001 7.0L4.2 13" stroke="#888" stroke-width="2" fill="none"/></svg>
<div style="left:2258px;top:2686px;width:1668px;height:9px;background:linear-gradient(#b8c4d0,#cfe2f6 40%,#a9c8ee);"></div>
<div style="left:2260px;top:2695px;width:1631px;height:196px;background:#012456;"></div>
<div style="left:2260px;top:2695px;width:1631px;height:196px;overflow:hidden"><div style="left:24.0px;top:-9.2px;font:normal 24px/1 'Liberation Mono',monospace;color:#f5f5f5;white-space:pre;">Links             : {}</div><div style="left:24.0px;top:15.8px;font:normal 24px/1 'Liberation Mono',monospace;color:#f5f5f5;white-space:pre;">ParsedHtml        : mshtml.HTMLDocumentClass</div><div style="left:24.0px;top:41.8px;font:normal 24px/1 'Liberation Mono',monospace;color:#f5f5f5;white-space:pre;">RawContentLength  : 157</div><div style="left:24.0px;top:171.8px;font:normal 24px/1 'Liberation Mono',monospace;color:#f5f5f5;white-space:pre;">PS C:\Users\david&gt;</div></div>
<div style="left:3891px;top:2695px;width:35px;height:196px;background:#f0f0f0;"></div>
<svg style="position:absolute;left:3900.0px;top:2707.0px;" width="16" height="16" viewBox="0 0 16 16"><path d="M1 11.2L8.0 3.2L15 11.2" stroke="#888" stroke-width="2" fill="none"/></svg>
<svg style="position:absolute;left:3900.0px;top:2867.0px;" width="16" height="16" viewBox="0 0 16 16"><path d="M1 4.8L8.0 12.8L15 4.8" stroke="#888" stroke-width="2" fill="none"/></svg>
<div style="left:3891px;top:2841px;width:34px;height:16px;background:#cdcdcd;"></div>
<div style="left:2258px;top:2891px;width:1668px;height:35px;background:#f0f0f0;"></div>
<svg style="position:absolute;left:2269.0px;top:2901.0px;" width="14" height="14" viewBox="0 0 14 14"><path d="M9.799999999999999 1L2.8000000000000003 7.0L9.799999999999999 13" stroke="#bbb" stroke-width="2" fill="none"/></svg>
<svg style="position:absolute;left:3866.0px;top:2901.0px;" width="14" height="14" viewBox="0 0 14 14"><path d="M4.2 1L11.200000000000001 7.0L4.2 13" stroke="#bbb" stroke-width="2" fill="none"/></svg>
<div style="left:4496px;top:2290px;width:4px;height:710px;background:#333;"></div>
<div style="left:2250px;top:2997px;width:2250px;height:3px;background:#86b8ec;"></div>
<div style="left:2296px;top:1587px;width:360px;height:468px;background:rgba(0,0,0,0.08);border-radius:4px;filter:blur(3px);"></div>
<div style="left:2300px;top:1591px;width:352px;height:459px;background:#f0f0f0;border:1px solid #9a9a9a;"></div>
<div style="left:2301px;top:1592px;width:350px;height:124px;background:#fff;"></div>
<svg style="position:absolute;left:2306px;top:1600px;" width="30" height="30" viewBox="0 0 30 30"><defs><linearGradient id="cg" x1="0" y1="0" x2="1" y2="1"><stop offset="0" stop-color="#9a9ac0"/><stop offset="1" stop-color="#50507a"/></linearGradient></defs><rect width="30" height="30" fill="url(#cg)"/><path d="M6 7H22V21H6Z M22 11L26 9V19L22 17Z" fill="#fff"/><path d="M7 26L10 22H20L23 26" stroke="#fff" stroke-width="2" fill="none"/></svg>
<div style="left:2343.0px;top:1605.5px;font:normal 23px/1 'Liberation Sans',sans-serif;color:#999;white-space:pre;transform:scaleX(0.9200);transform-origin:0 0;">C...</div>
<div style="left:2409px;top:1614px;width:20px;height:2px;background:#999;"></div>
<div style="left:2500px;top:1605px;width:20px;height:20px;border:1.5px solid #ddd;"></div>
<svg style="position:absolute;left:2593px;top:1605px;" width="20" height="20" viewBox="0 0 20 20"><path d="M1 1L19 19M19 1L1 19" stroke="#999" stroke-width="1.8"/></svg>
<div style="left:2310.0px;top:1647.5px;font:normal 23px/1 'Liberation Sans',sans-serif;color:#222;white-space:pre;transform:scaleX(0.9200);transform-origin:0 0;">File</div>
<div style="left:2310px;top:1669px;width:12.9231249999998px;height:2px;background:#333;"></div>
<div style="left:2360.0px;top:1647.5px;font:normal 23px/1 'Liberation Sans',sans-serif;color:#222;white-space:pre;transform:scaleX(0.9200);transform-origin:0 0;">Region</div>
<div style="left:2360px;top:1669px;width:15.280624999999873px;height:2px;background:#333;"></div>
<div style="left:2448.0px;top:1647.5px;font:normal 23px/1 'Liberation Sans',sans-serif;color:#222;white-space:pre;transform:scaleX(0.9200);transform-origin:0 0;">Options</div>
<div style="left:2448px;top:1669px;width:16.45937499999991px;height:2px;background:#333;"></div>
<div style="left:2546.0px;top:1647.5px;font:normal 23px/1 'Liberation Sans',sans-serif;color:#222;white-space:pre;transform:scaleX(0.9200);transform-origin:0 0;">Tools</div>
<div style="left:2546px;top:1669px;width:12.9231249999998px;height:2px;background:#333;"></div>
<div style="left:2310.0px;top:1686.5px;font:normal 23px/1 'Liberation Sans',sans-serif;color:#222;white-space:pre;transform:scaleX(0.9200);transform-origin:0 0;">Effects</div>
<div style="left:2310px;top:1708px;width:14.116250000000036px;height:2px;background:#333;"></div>
<div style="left:2393.0px;top:1686.5px;font:normal 23px/1 'Liberation Sans',sans-serif;color:#222;white-space:pre;transform:scaleX(0.9200);transform-origin:0 0;">View</div>
<div style="left:2393px;top:1708px;width:14.116250000000036px;height:2px;background:#333;"></div>
<div style="left:2458.0px;top:1686.5px;font:normal 23px/1 'Liberation Sans',sans-serif;color:#222;white-space:pre;transform:scaleX(0.9200);transform-origin:0 0;">Help</div>
<div style="left:2458px;top:1708px;width:15.280624999999873px;height:2px;background:#333;"></div>
<div style="left:2301px;top:1716px;width:350px;height:2px;background:#c8c8c8;"></div>
<div style="left:2302px;top:1718px;width:252px;height:35px;background:#f0f0f0;"></div>
<div style="left:2553px;top:1718px;width:2px;height:35px;background:#ccc;"></div>
<div style="left:2555px;top:1718px;width:96px;height:35px;background:#fff;"></div>
<svg style="position:absolute;left:2310px;top:1723px;" width="90" height="26" viewBox="0 0 90 26"><circle cx="12" cy="12" r="9.5" fill="#9c9c9c"/><rect x="30" y="3" width="8" height="19" fill="#333"/><rect x="40" y="3" width="8" height="19" fill="#333"/><rect x="58" y="3" width="19" height="19" fill="#2424c8" stroke="#111" stroke-width="1"/></svg>
<div style="left:2394px;top:1724px;width:1px;height:25px;background:#999;"></div>
<svg style="position:absolute;left:2403px;top:1722px;" width="160" height="28" viewBox="0 0 160 28"><rect x="3" y="10" width="16" height="7" fill="#8ab0e0" stroke="#223" stroke-width="1"/><rect x="5" y="17" width="15" height="6" fill="#8ab0e0" stroke="#223" stroke-width="1"/><rect x="32" y="4" width="15" height="19" fill="#7ac" stroke="#445" stroke-width="1.5"/><circle cx="62" cy="14" r="8" fill="#6080a0"/><text x="55" y="18" font-size="9" font-family="Liberation Sans" fill="#fff">SWf</text><path d="M100 18H108V25H122" stroke="#d00" stroke-width="2.5" fill="none"/><path d="M114 4L120 10M120 4L114 10" stroke="#d00" stroke-width="2"/></svg>
<div style="left:2303px;top:1754px;width:346px;height:263px;background:#fff;border-left:2px solid #666;border-top:2px solid #666;"></div>
<div style="left:2306.0px;top:1964.0px;font:normal 47px/1 'Liberation Sans',sans-serif;color:#dadada;white-space:pre;transform:scaleX(1.0813);transform-origin:0 0;">CamStudio.org</div>
<svg style="position:absolute;left:2321px;top:1783px;" width="46" height="42" viewBox="0 0 46 42"><defs><linearGradient id="cg2" x1="0" y1="0" x2="1" y2="1"><stop offset="0" stop-color="#a0a0c8"/><stop offset="1" stop-color="#505078"/></linearGradient></defs><rect x="1" y="1" width="44" height="40" fill="url(#cg2)" stroke="#ccc"/><path d="M9 10H32V30H9Z M32 15L38 12V28L32 25Z" fill="#fff"/><path d="M11 38L14 33H28L31 38" stroke="#fff" stroke-width="2.5" fill="none"/></svg>
<div style="left:2382.0px;top:1783.7px;font:normal 38px/1 'Liberation Sans',sans-serif;color:#111;white-space:pre;transform:scaleX(1.1170);transform-origin:0 0;-webkit-text-stroke:0.6px #111;">CamStudio</div>
<div style="left:2594.0px;top:1791.3px;font:normal 9px/1 'Liberation Sans',sans-serif;color:#111;white-space:pre;">TM</div>
<div style="left:2505.0px;top:1821.2px;font:normal 15px/1 'Liberation Sans',sans-serif;color:#111;white-space:pre;transform:scaleX(1.1304);transform-origin:0 0;">RECORDER</div>
<div style="left:2320.0px;top:1845.4px;font:normal 13px/1 'Liberation Sans',sans-serif;color:#009000;white-space:pre;transform:scaleX(0.8300);transform-origin:0 0;">Start recording : 20180701_2113_20</div>
<div style="left:2320.0px;top:1864.3px;font:normal 13px/1 'Liberation Sans',sans-serif;color:#009000;white-space:pre;transform:scaleX(0.8300);transform-origin:0 0;">Limited recording : On, 1750 ms.</div>
<div style="left:2320.0px;top:1883.3px;font:normal 13px/1 'Liberation Sans',sans-serif;color:#009000;white-space:pre;transform:scaleX(0.8300);transform-origin:0 0;">Current Frame : 401</div>
<div style="left:2320.0px;top:1902.2px;font:normal 13px/1 'Liberation Sans',sans-serif;color:#009000;white-space:pre;transform:scaleX(0.8300);transform-origin:0 0;">Current File Size : 472.70 Mb</div>
<div style="left:2320.0px;top:1921.2px;font:normal 13px/1 'Liberation Sans',sans-serif;color:#009000;white-space:pre;transform:scaleX(0.8300);transform-origin:0 0;">Actual Input Rate : 1.23 fps</div>
<div style="left:2320.0px;top:1940.1px;font:normal 13px/1 'Liberation Sans',sans-serif;color:#009000;white-space:pre;transform:scaleX(0.8300);transform-origin:0 0;">Time Elapsed : 100.38 sec</div>
<div style="left:2320.0px;top:1959.1px;font:normal 13px/1 'Liberation Sans',sans-serif;color:#009000;white-space:pre;transform:scaleX(0.8300);transform-origin:0 0;">Number of Colors : 32 iBits</div>
<div style="left:2320.0px;top:1978.0px;font:normal 13px/1 'Liberation Sans',sans-serif;color:#009000;white-space:pre;transform:scaleX(0.8300);transform-origin:0 0;">Codec : Microsoft Video 1</div>
<div style="left:2320.0px;top:1997.0px;font:normal 13px/1 'Liberation Sans',sans-serif;color:#009000;white-space:pre;transform:scaleX(0.8300);transform-origin:0 0;">Dimension : 4500 X 3000</div>
<div style="left:2301px;top:2017px;width:350px;height:32px;background:#f0f0f0;border-top:1px solid #ddd;"></div>
<div style="left:2302px;top:2018px;width:347px;height:31px;overflow:hidden"><div style="left:2.0px;top:5.2px;font:normal 24px/1 'Liberation Sans',sans-serif;color:#000;white-space:pre;transform:scaleX(0.9750);transform-origin:0 0;">Press the Stop Button to stop recording</div></div>
<div style="left:4180px;top:1066px;width:284px;height:984px;background:rgba(0,0,0,0.12);filter:blur(3px);"></div>
<div style="left:4184px;top:1070px;width:276px;height:50px;background:#fff;"></div>
<div style="left:4191.0px;top:1083.6px;font:normal 24px/1 'Liberation Sans',sans-serif;color:#999;white-space:pre;transform:scaleX(0.9857);transform-origin:0 0;">Telescope Simulator</div>
<div style="left:4419px;top:1075px;width:40px;height:40px;background:#e0e0e0;"></div>
<svg style="position:absolute;left:4430px;top:1087px;" width="16" height="16" viewBox="0 0 16 16"><path d="M1 1L15 15M15 1L1 15" stroke="#f6f6f6" stroke-width="1.5"/></svg>
<div style="left:4184px;top:1120px;width:276px;height:926px;background:#000;"></div>
<div style="left:4342px;top:1140px;width:96px;height:112px;background:#001c54;border:2px solid #7a7a30;"></div>
<svg style="position:absolute;left:4344px;top:1142px;" width="92" height="108" viewBox="0 0 92 108"><defs><radialGradient id="st"><stop offset="0" stop-color="#fff"/><stop offset="0.5" stop-color="#fff" stop-opacity="0.8"/><stop offset="1" stop-color="#fff" stop-opacity="0"/></radialGradient></defs><path d="M41 13L19 61M41 13L58 63M19 61L76 31" stroke="#f0e000" stroke-width="2.2" fill="none"/><circle cx="41" cy="13" r="9" fill="url(#st)"/><circle cx="76" cy="31" r="9" fill="url(#st)"/><circle cx="19" cy="61" r="9" fill="url(#st)"/><circle cx="58" cy="66" r="9" fill="url(#st)"/><text x="46" y="101" text-anchor="middle" font-family="Liberation Sans" font-weight="bold" font-size="19" fill="#fff">ASCOM</text></svg>
<div style="left:4208px;top:1268px;width:230px;height:40px;background:#400000;"></div>
<div style="left:4222.0px;top:1271.9px;font:normal 26px/1 'Liberation Sans',sans-serif;color:#8a4a14;white-space:pre;transform:scaleX(0.8205);transform-origin:0 0;">HOME</div>
<div style="left:4365.0px;top:1271.9px;font:normal 26px/1 'Liberation Sans',sans-serif;color:#8a4a14;white-space:pre;transform:scaleX(0.8274);transform-origin:0 0;">PARK</div>
<div style="left:4218.0px;top:1319.8px;font:normal 25px/1 'Liberation Sans',sans-serif;color:#fff;white-space:pre;transform:scaleX(0.8500);transform-origin:0 0;">LST</div>
<div style="left:4344.2px;top:1319.8px;font:normal 25px/1 'Liberation Sans',sans-serif;color:#e00000;white-space:pre;transform:scaleX(0.8200);transform-origin:0 0;">13:53:01</div>
<div style="left:4218.0px;top:1359.8px;font:normal 25px/1 'Liberation Sans',sans-serif;color:#fff;white-space:pre;transform:scaleX(0.8500);transform-origin:0 0;">RA</div>
<div style="left:4344.2px;top:1359.8px;font:normal 25px/1 'Liberation Sans',sans-serif;color:#e00000;white-space:pre;transform:scaleX(0.8200);transform-origin:0 0;">15:17:06</div>
<div style="left:4218.0px;top:1400.0px;font:normal 25px/1 'Liberation Sans',sans-serif;color:#fff;white-space:pre;transform:scaleX(0.8500);transform-origin:0 0;">Dec</div>
<div style="left:4324.3px;top:1400.0px;font:normal 25px/1 'Liberation Sans',sans-serif;color:#e00000;white-space:pre;transform:scaleX(0.8200);transform-origin:0 0;">21° 07' 07''</div>
<div style="left:4218.0px;top:1440.0px;font:normal 25px/1 'Liberation Sans',sans-serif;color:#fff;white-space:pre;transform:scaleX(0.8500);transform-origin:0 0;">Az</div>
<div style="left:4312.9px;top:1440.0px;font:normal 25px/1 'Liberation Sans',sans-serif;color:#e00000;white-space:pre;transform:scaleX(0.8200);transform-origin:0 0;">138° 25' 50''</div>
<div style="left:4218.0px;top:1480.2px;font:normal 25px/1 'Liberation Sans',sans-serif;color:#fff;white-space:pre;transform:scaleX(0.8500);transform-origin:0 0;">Alt</div>
<div style="left:4324.3px;top:1480.2px;font:normal 25px/1 'Liberation Sans',sans-serif;color:#e00000;white-space:pre;transform:scaleX(0.8200);transform-origin:0 0;">59° 43' 00''</div>
<svg style="position:absolute;left:4215px;top:1535px;" width="24" height="24" viewBox="0 0 24 24"><circle cx="12" cy="12" r="9" fill="#333" stroke="#fff" stroke-width="4"/></svg>
<div style="left:4252.0px;top:1536.6px;font:normal 24px/1 'Liberation Sans',sans-serif;color:#fff;white-space:pre;transform:scaleX(0.8869);transform-origin:0 0;">Move Axis</div>
<svg style="position:absolute;left:4215px;top:1577px;" width="24" height="24" viewBox="0 0 24 24"><circle cx="12" cy="12" r="11" fill="#fff"/></svg>
<div style="left:4252.0px;top:1578.6px;font:normal 24px/1 'Liberation Sans',sans-serif;color:#fff;white-space:pre;transform:scaleX(0.8567);transform-origin:0 0;">Pulse Guide</div>
<div style="left:4292px;top:1628px;width:60px;height:58px;background:#e1e1e1;border:1px solid #adadad;"></div>
<div style="left:4314.1px;top:1644.8px;font:normal 25px/1 'Liberation Sans',sans-serif;color:#000;white-space:pre;transform:scaleX(0.8800);transform-origin:0 0;">N</div>
<div style="left:4216px;top:1702px;width:60px;height:58px;background:#e1e1e1;border:1px solid #adadad;"></div>
<div style="left:4235.6px;top:1718.8px;font:normal 25px/1 'Liberation Sans',sans-serif;color:#000;white-space:pre;transform:scaleX(0.8800);transform-origin:0 0;">W</div>
<div style="left:4292px;top:1702px;width:60px;height:58px;background:#e1e1e1;border:1px solid #adadad;"></div>
<svg style="position:absolute;left:4304px;top:1713px;" width="36" height="36" viewBox="0 0 36 36"><path d="M11 2H25L34 11V25L25 34H11L2 25V11Z" fill="#000"/></svg>
<div style="left:4368px;top:1702px;width:62px;height:58px;background:#e1e1e1;border:1px solid #adadad;"></div>
<div style="left:4391.7px;top:1718.8px;font:normal 25px/1 'Liberation Sans',sans-serif;color:#000;white-space:pre;transform:scaleX(0.8800);transform-origin:0 0;">E</div>
<div style="left:4292px;top:1777px;width:60px;height:58px;background:#e1e1e1;border:1px solid #adadad;"></div>
<div style="left:4314.7px;top:1793.8px;font:normal 25px/1 'Liberation Sans',sans-serif;color:#000;white-space:pre;transform:scaleX(0.8800);transform-origin:0 0;">S</div>
<div style="left:4383px;top:1796px;width:33px;height:17px;background:#90ee90;border:2px solid #555;"></div>
<div style="left:4219px;top:1857px;width:26px;height:26px;background:#fff;border:1px solid #333;"></div>
<svg style="position:absolute;left:4221px;top:1859px;" width="22" height="22" viewBox="0 0 22 22"><path d="M3 11L9 17L19 4" stroke="#333" stroke-width="2.5" fill="none"/></svg>
<div style="left:4257.0px;top:1858.8px;font:normal 25px/1 'Liberation Sans',sans-serif;color:#fff;white-space:pre;transform:scaleX(0.8800);transform-origin:0 0;">Track</div>
<div style="left:4341px;top:1848px;width:97px;height:40px;background:#400000;"></div>
<div style="left:4359.0px;top:1853.9px;font:normal 26px/1 'Liberation Sans',sans-serif;color:#6a3818;white-space:pre;transform:scaleX(0.8414);transform-origin:0 0;">SLEW</div>
<div style="left:4216px;top:1908px;width:98px;height:48px;background:#e1e1e1;border:1px solid #adadad;"></div>
<div style="left:4242.4px;top:1919.8px;font:normal 25px/1 'Liberation Sans',sans-serif;color:#000;white-space:pre;transform:scaleX(0.8800);transform-origin:0 0;">Park</div>
<div style="left:4330px;top:1908px;width:100px;height:48px;background:#e1e1e1;border:1px solid #adadad;"></div>
<div style="left:4350.7px;top:1919.8px;font:normal 25px/1 'Liberation Sans',sans-serif;color:#000;white-space:pre;transform:scaleX(0.8800);transform-origin:0 0;">Home</div>
<div style="left:4216px;top:1972px;width:98px;height:49px;background:#e1e1e1;border:1px solid #adadad;"></div>
<div style="left:4236.2px;top:1984.2px;font:normal 25px/1 'Liberation Sans',sans-serif;color:#000;white-space:pre;transform:scaleX(0.8800);transform-origin:0 0;">Setup</div>
<div style="left:4330px;top:1972px;width:100px;height:49px;background:#e1e1e1;border:1px solid #adadad;"></div>
<div style="left:4350.0px;top:1984.2px;font:normal 25px/1 'Liberation Sans',sans-serif;color:#000;white-space:pre;transform:scaleX(0.8800);transform-origin:0 0;">Traffic</div></div></body></html>
